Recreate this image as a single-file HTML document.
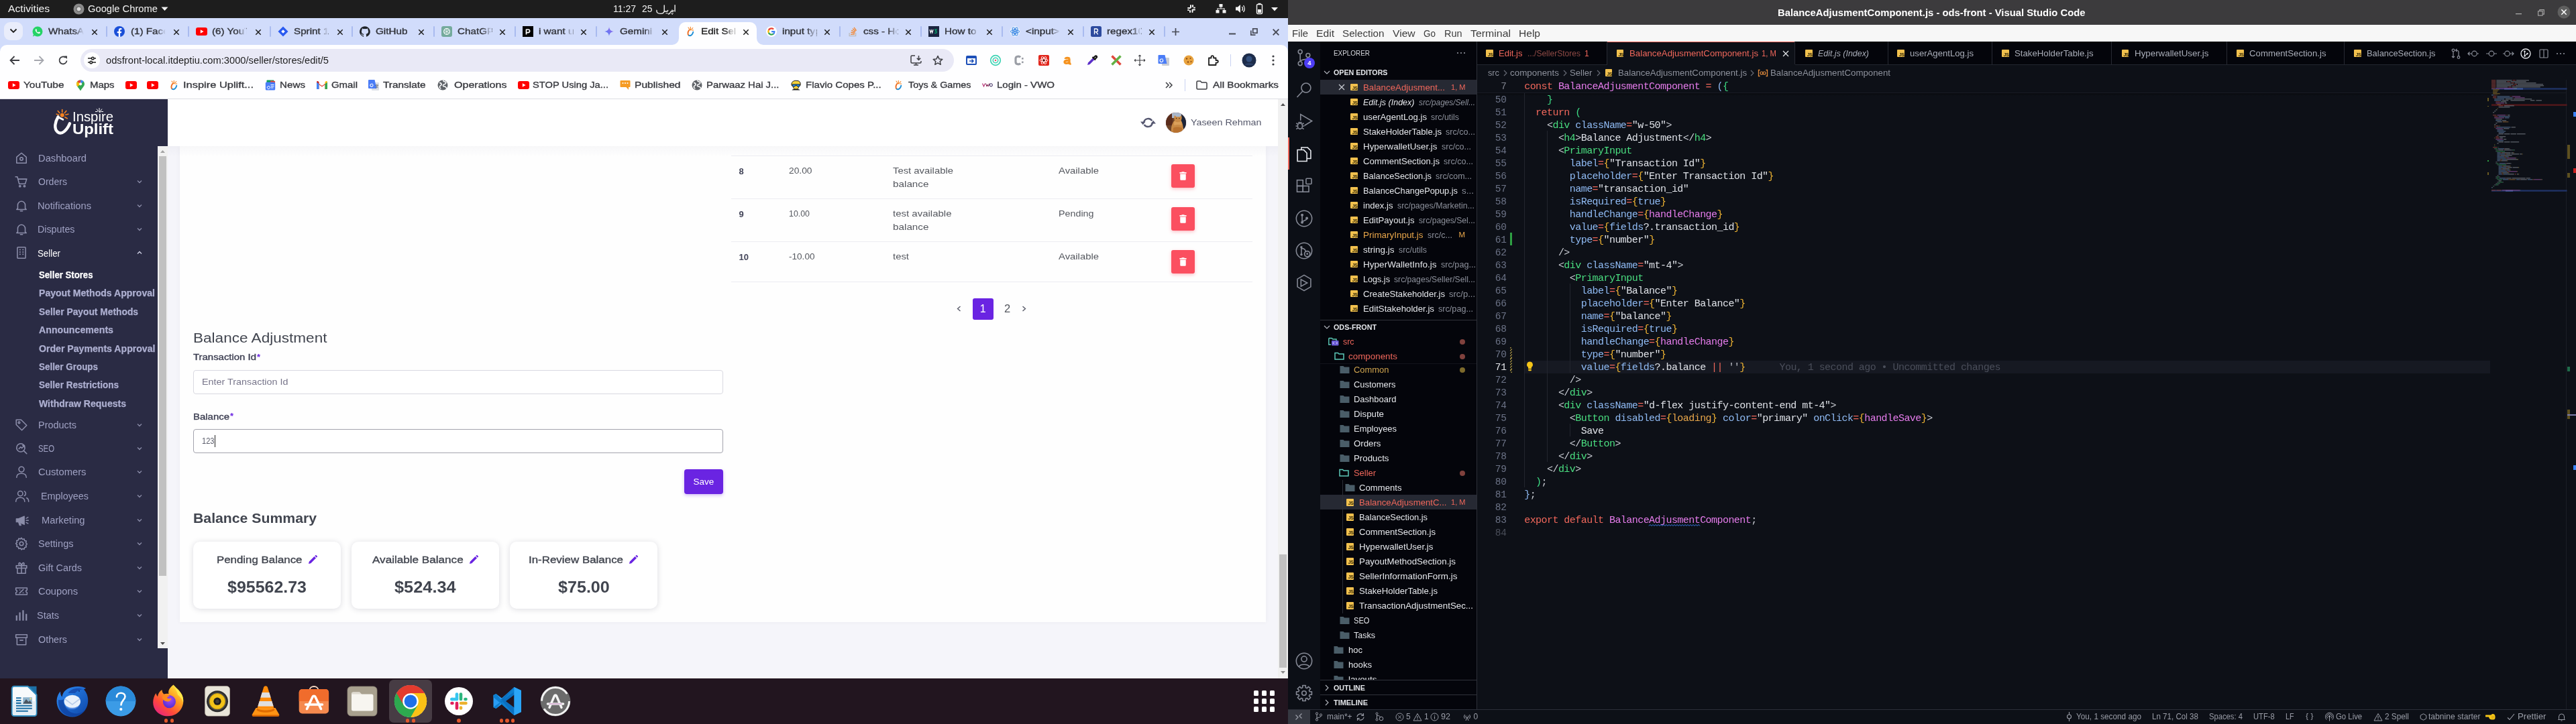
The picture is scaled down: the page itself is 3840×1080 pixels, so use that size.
<!DOCTYPE html>
<html lang="en"><head><meta charset="utf-8"><title>Desktop</title>
<style>
html,body{margin:0;padding:0;}
body{width:3840px;height:1080px;position:relative;overflow:hidden;background:#0d1017;font-family:"Liberation Sans",sans-serif;-webkit-font-smoothing:antialiased;}
svg{display:block;overflow:visible}
</style></head><body><div id="root" style="position:absolute;left:0;top:0;width:3840px;height:1080px;will-change:transform;">
<div style="position:absolute;left:0px;top:0px;width:1920px;height:27px;background:#1d1d1d;"></div>
<span style="position:absolute;left:12px;top:4.00px;font:400 14.5px/19px 'Liberation Sans',sans-serif;color:#f2f2f2;white-space:pre;transform:scaleX(1.0836);transform-origin:0 50%;">Activities</span>
<svg style="position:absolute;left:109px;top:5px;" width="17" height="17" viewBox="0 0 17 17"><circle cx="8.5" cy="8.5" r="8" fill="#8a8a8a"/><circle cx="8.5" cy="8.5" r="3.6" fill="#d8d8d8" stroke="#5a5a5a" stroke-width="1"/></svg>
<span style="position:absolute;left:131px;top:4.00px;font:400 14.5px/19px 'Liberation Sans',sans-serif;color:#f2f2f2;white-space:pre;transform:scaleX(1.0160);transform-origin:0 50%;">Google Chrome</span>
<svg style="position:absolute;left:240px;top:10px;" width="11" height="7" viewBox="0 0 11 7"><path d="M0.5 0.5 L10.5 0.5 L5.5 6 Z" fill="#f2f2f2"/></svg>
<span style="position:absolute;left:914px;top:4.00px;font:400 14.5px/19px 'Liberation Sans',sans-serif;color:#f2f2f2;white-space:pre;transform:scaleX(0.9654);transform-origin:0 50%;">11:27</span>
<span style="position:absolute;left:957px;top:4.00px;font:400 14.5px/19px 'Liberation Sans',sans-serif;color:#f2f2f2;white-space:pre;transform:scaleX(0.9603);transform-origin:0 50%;">25</span>
<svg style="position:absolute;left:977px;top:4.2px;" width="32" height="18" viewBox="0 0 32 18"><path d="M29.100 3.700V13M27.200 11.800Q27 13 25.500 13H23.500Q22.800 13 22.400 14.200 21.500 16.600 19.300 17M25 13V10.800M18.600 11.500Q18.600 13 17 13H13.200M13.200 3.900V12Q13.200 16.400 7.500 16.400 1.400 16.400 1.900 11.300" fill="none" stroke="#f2f2f2" stroke-width="1.350" stroke-linecap="round" stroke-linejoin="round"/><g fill="#f2f2f2"><circle cx="24.200" cy="15.800" r=".75"/><circle cx="26" cy="15.800" r=".75"/><circle cx="25.100" cy="17.300" r=".75"/><circle cx="16.200" cy="15.800" r=".75"/><circle cx="18" cy="15.800" r=".75"/></g></svg>
<svg style="position:absolute;left:1768px;top:5px;" width="16" height="16" viewBox="0 0 16 16"><g fill="#f2f2f2"><rect x="2" y="6" width="5" height="2" rx="1"/><rect x="9" y="8.5" width="5" height="2" rx="1"/><rect x="6" y="2" width="2" height="5" rx="1"/><rect x="8.5" y="9" width="2" height="5" rx="1"/><rect x="9" y="2" width="2" height="4" rx="1"/><rect x="5" y="10" width="2" height="4" rx="1"/><rect x="11" y="5.5" width="3" height="2" rx="1"/><rect x="2" y="9" width="3" height="2" rx="1"/></g></svg>
<svg style="position:absolute;left:1812px;top:5px;" width="16" height="16" viewBox="0 0 16 16"><g fill="#f2f2f2"><rect x="5.5" y="1" width="5" height="4.5"/><rect x="0.5" y="10" width="5" height="4.5"/><rect x="10.5" y="10" width="5" height="4.5"/><rect x="7.5" y="5" width="1" height="3"/><rect x="2.5" y="7.5" width="11" height="1"/><rect x="2.5" y="7.5" width="1" height="3"/><rect x="12.5" y="7.5" width="1" height="3"/></g></svg>
<svg style="position:absolute;left:1841px;top:5px;" width="17" height="16" viewBox="0 0 17 16"><path d="M1 5.5 H4 L8 2 V14 L4 10.5 H1 Z" fill="#f2f2f2"/><path d="M10.5 5 Q12.5 8 10.5 11 M12.5 3 Q16 8 12.5 13" fill="none" stroke="#f2f2f2" stroke-width="1.3"/></svg>
<svg style="position:absolute;left:1872px;top:4px;" width="11" height="18" viewBox="0 0 11 18"><rect x="1.5" y="2.5" width="8" height="14" rx="1.5" fill="none" stroke="#f2f2f2" stroke-width="1.4"/><rect x="3.5" y="0.8" width="4" height="2" fill="#f2f2f2"/><rect x="3" y="10" width="5" height="5" fill="#f2f2f2"/></svg>
<svg style="position:absolute;left:1895px;top:11px;" width="10" height="6" viewBox="0 0 10 6"><path d="M0 0 H10 L5 5.5 Z" fill="#f2f2f2"/></svg>
<div style="position:absolute;left:0px;top:27px;width:1920px;height:54px;background:#d1dcfb;"></div>
<div style="position:absolute;left:6px;top:33px;width:28px;height:27px;background:#e9edfb;border-radius:9px;"></div>
<svg style="position:absolute;left:14px;top:42px;" width="12" height="8" viewBox="0 0 12 8"><path d="M1.5 1.5 L6 6 L10.5 1.5" fill="none" stroke="#1f1f1f" stroke-width="1.8"/></svg>
<div style="position:absolute;left:0px;top:67px;width:1920px;height:44px;background:#fefeff;border-radius:10px 10px 0 0;"></div>
<div style="position:absolute;left:0px;top:110px;width:1920px;height:38px;background:#fefeff;"></div>
<div style="position:absolute;left:0px;top:147px;width:1920px;height:1px;background:#dcdde3;"></div>
<svg style="position:absolute;left:48px;top:39px;" width="16" height="16" viewBox="0 0 16 16"><circle cx="8" cy="8" r="7.5" fill="#25d366"/><path d="M5.2 4.6c.5-.6 1-.4 1.2.1l.5 1.1c.1.3 0 .6-.3.9-.3.3-.2.5 0 .8.5.8 1.100 1.400 1.900 1.800.3.200.5.200.7-.1l.5-.6c.2-.2.500-.3.800-.1l1.100.6c.4.2.4.6.1 1.100-.5.800-1.500 1.100-2.600.7C7 10.200 5.500 8.700 4.800 6.800 4.500 6 4.700 5.200 5.200 4.600z" fill="#fff"/><path d="M1 15.500 2.200 11.500 4.500 13.800z" fill="#25d366"/></svg>
<span style="position:absolute;left:72px;top:38.00px;font:400 13px/17px 'Liberation Sans',sans-serif;color:#33353c;white-space:pre;-webkit-text-stroke:.38px #33353c;width:45.3px;overflow:hidden;transform:scaleX(1.17);transform-origin:0 50%;">WhatsApp</span>
<div style="position:absolute;left:111px;top:37px;width:14px;height:20px;background:linear-gradient(90deg,rgba(209,220,251,0),#d1dcfb);"></div>
<svg style="position:absolute;left:134.5px;top:41.5px;" width="12" height="12" viewBox="0 0 12 12"><path d="M2.3 2.3 L9.7 9.7 M9.7 2.3 L2.3 9.7" stroke="#1f1f1f" stroke-width="1.5" fill="none"/></svg>
<div style="position:absolute;left:158px;top:39px;width:2px;height:16px;background:#a9bbef;border-radius:1px;"></div>
<svg style="position:absolute;left:170px;top:39px;" width="16" height="16" viewBox="0 0 16 16"><circle cx="8" cy="8" r="8" fill="#1a4fd8"/><path d="M10.900 10.300l.4-2.300H9.100V6.500c0-.7.300-1.200 1.300-1.200h1V3.200C11.200 3.100 10.500 3 9.800 3 8 3 6.800 4.100 6.800 6.100V8H4.700v2.300h2.100V16h2.300v-5.700z" fill="#fff"/></svg>
<span style="position:absolute;left:195px;top:38.00px;font:400 13px/17px 'Liberation Sans',sans-serif;color:#33353c;white-space:pre;-webkit-text-stroke:.38px #33353c;width:44.4px;overflow:hidden;transform:scaleX(1.17);transform-origin:0 50%;">(1) Facebook</span>
<div style="position:absolute;left:233px;top:37px;width:14px;height:20px;background:linear-gradient(90deg,rgba(209,220,251,0),#d1dcfb);"></div>
<svg style="position:absolute;left:256.5px;top:41.5px;" width="12" height="12" viewBox="0 0 12 12"><path d="M2.3 2.3 L9.7 9.7 M9.7 2.3 L2.3 9.7" stroke="#1f1f1f" stroke-width="1.5" fill="none"/></svg>
<div style="position:absolute;left:280px;top:39px;width:2px;height:16px;background:#a9bbef;border-radius:1px;"></div>
<svg style="position:absolute;left:292px;top:41px;" width="17" height="12" viewBox="0 0 17 12"><rect width="17" height="12" rx="3" fill="#f00"/><path d="M6.800 3.200v5.600L11.600 6z" fill="#fff"/></svg>
<span style="position:absolute;left:316px;top:38.00px;font:400 13px/17px 'Liberation Sans',sans-serif;color:#33353c;white-space:pre;-webkit-text-stroke:.38px #33353c;width:43.6px;overflow:hidden;transform:scaleX(1.17);transform-origin:0 50%;">(6) YouTube</span>
<div style="position:absolute;left:353px;top:37px;width:14px;height:20px;background:linear-gradient(90deg,rgba(209,220,251,0),#d1dcfb);"></div>
<svg style="position:absolute;left:378.5px;top:41.5px;" width="12" height="12" viewBox="0 0 12 12"><path d="M2.3 2.3 L9.7 9.7 M9.7 2.3 L2.3 9.7" stroke="#1f1f1f" stroke-width="1.5" fill="none"/></svg>
<div style="position:absolute;left:402px;top:39px;width:2px;height:16px;background:#a9bbef;border-radius:1px;"></div>
<svg style="position:absolute;left:414px;top:39px;" width="16" height="16" viewBox="0 0 16 16"><path d="M8 .5 15.500 8 8 15.500.5 8z" fill="#2a5af0"/><path d="M8 5.200 10.800 8 8 10.800 5.200 8z" fill="#fff"/></svg>
<span style="position:absolute;left:438px;top:38.00px;font:400 13px/17px 'Liberation Sans',sans-serif;color:#33353c;white-space:pre;-webkit-text-stroke:.38px #33353c;width:43.6px;overflow:hidden;transform:scaleX(1.17);transform-origin:0 50%;">Sprint 11 - Agile</span>
<div style="position:absolute;left:475px;top:37px;width:14px;height:20px;background:linear-gradient(90deg,rgba(209,220,251,0),#d1dcfb);"></div>
<svg style="position:absolute;left:500.5px;top:41.5px;" width="12" height="12" viewBox="0 0 12 12"><path d="M2.3 2.3 L9.7 9.7 M9.7 2.3 L2.3 9.7" stroke="#1f1f1f" stroke-width="1.5" fill="none"/></svg>
<div style="position:absolute;left:524px;top:39px;width:2px;height:16px;background:#a9bbef;border-radius:1px;"></div>
<svg style="position:absolute;left:536px;top:39px;" width="16" height="16" viewBox="0 0 16 16"><path d="M8 .2a8 8 0 0 0-2.500 15.600c.4.100.5-.2.500-.4v-1.400c-2.200.5-2.700-1-2.700-1-.4-.9-.9-1.200-.9-1.200-.7-.5.100-.5.100-.5.800.100 1.200.800 1.200.800.700 1.200 1.900.900 2.300.7.100-.5.300-.9.500-1.100-1.800-.2-3.600-.9-3.600-4 0-.9.300-1.600.8-2.100-.1-.2-.4-1 .1-2.100 0 0 .7-.2 2.200.8a7.500 7.500 0 0 1 4 0c1.500-1 2.200-.8 2.200-.8.400 1.100.200 1.900.100 2.100.5.600.8 1.300.8 2.100 0 3.100-1.900 3.700-3.700 3.900.3.300.6.800.6 1.500v2.200c0 .2.100.5.600.4A8 8 0 0 0 8 .2z" fill="#1f2328"/></svg>
<span style="position:absolute;left:560px;top:38.00px;font:400 13px/17px 'Liberation Sans',sans-serif;color:#33353c;white-space:pre;-webkit-text-stroke:.38px #33353c;width:53.0px;overflow:hidden;transform:scaleX(1.17);transform-origin:0 50%;">GitHub</span>
<svg style="position:absolute;left:622px;top:41.5px;" width="12" height="12" viewBox="0 0 12 12"><path d="M2.3 2.3 L9.7 9.7 M9.7 2.3 L2.3 9.7" stroke="#1f1f1f" stroke-width="1.5" fill="none"/></svg>
<div style="position:absolute;left:646px;top:39px;width:2px;height:16px;background:#a9bbef;border-radius:1px;"></div>
<svg style="position:absolute;left:658px;top:39px;" width="16" height="16" viewBox="0 0 16 16"><rect width="16" height="16" rx="3" fill="#74aa9c"/><circle cx="8" cy="8" r="4.300" fill="none" stroke="#fff" stroke-width="1.200"/><path d="M8 3.700v8.600M4.300 5.900l7.400 4.300M4.300 10.100l7.400-4.300" stroke="#fff" stroke-width=".7" fill="none"/></svg>
<span style="position:absolute;left:682px;top:38.00px;font:400 13px/17px 'Liberation Sans',sans-serif;color:#33353c;white-space:pre;-webkit-text-stroke:.38px #33353c;width:43.6px;overflow:hidden;transform:scaleX(1.17);transform-origin:0 50%;">ChatGPT</span>
<div style="position:absolute;left:719px;top:37px;width:14px;height:20px;background:linear-gradient(90deg,rgba(209,220,251,0),#d1dcfb);"></div>
<svg style="position:absolute;left:743px;top:41.5px;" width="12" height="12" viewBox="0 0 12 12"><path d="M2.3 2.3 L9.7 9.7 M9.7 2.3 L2.3 9.7" stroke="#1f1f1f" stroke-width="1.5" fill="none"/></svg>
<div style="position:absolute;left:767px;top:39px;width:2px;height:16px;background:#a9bbef;border-radius:1px;"></div>
<svg style="position:absolute;left:779px;top:39px;" width="16" height="16" viewBox="0 0 16 16"><rect width="16" height="16" fill="#000"/><path d="M5.500 12.500V4.500M5.500 5h2.800a2.300 2.300 0 0 1 0 4.600H5.500" fill="none" stroke="#fff" stroke-width="1.700"/></svg>
<span style="position:absolute;left:803px;top:38.00px;font:400 13px/17px 'Liberation Sans',sans-serif;color:#33353c;white-space:pre;-webkit-text-stroke:.38px #33353c;width:43.6px;overflow:hidden;transform:scaleX(1.17);transform-origin:0 50%;">i want users</span>
<div style="position:absolute;left:840px;top:37px;width:14px;height:20px;background:linear-gradient(90deg,rgba(209,220,251,0),#d1dcfb);"></div>
<svg style="position:absolute;left:864px;top:41.5px;" width="12" height="12" viewBox="0 0 12 12"><path d="M2.3 2.3 L9.7 9.7 M9.7 2.3 L2.3 9.7" stroke="#1f1f1f" stroke-width="1.5" fill="none"/></svg>
<div style="position:absolute;left:888px;top:39px;width:2px;height:16px;background:#a9bbef;border-radius:1px;"></div>
<svg style="position:absolute;left:900px;top:39px;" width="16" height="16" viewBox="0 0 16 16"><defs><linearGradient id="gg" x1="0" y1="1" x2="1" y2="0"><stop offset="0" stop-color="#4a7cf7"/><stop offset="1" stop-color="#a16be8"/></linearGradient></defs><path d="M8 1C8.300 5 11 7.700 15 8 11 8.300 8.300 11 8 15 7.700 11 5 8.300 1 8 5 7.700 7.700 5 8 1z" fill="url(#gg)"/></svg>
<span style="position:absolute;left:924px;top:38.00px;font:400 13px/17px 'Liberation Sans',sans-serif;color:#33353c;white-space:pre;-webkit-text-stroke:.38px #33353c;width:43.6px;overflow:hidden;transform:scaleX(1.17);transform-origin:0 50%;">Gemini</span>
<div style="position:absolute;left:961px;top:37px;width:14px;height:20px;background:linear-gradient(90deg,rgba(209,220,251,0),#d1dcfb);"></div>
<svg style="position:absolute;left:985px;top:41.5px;" width="12" height="12" viewBox="0 0 12 12"><path d="M2.3 2.3 L9.7 9.7 M9.7 2.3 L2.3 9.7" stroke="#1f1f1f" stroke-width="1.5" fill="none"/></svg>
<div style="position:absolute;left:1012px;top:33px;width:116px;height:34px;background:#fefeff;border-radius:10px 10px 0 0;"></div>
<svg style="position:absolute;left:1002px;top:57px;" width="10" height="10" viewBox="0 0 10 10"><path d="M10 0 V10 H0 A10 10 0 0 0 10 0Z" fill="#fefeff"/></svg>
<svg style="position:absolute;left:1128px;top:57px;" width="10" height="10" viewBox="0 0 10 10"><path d="M0 0 V10 H10 A10 10 0 0 1 0 0Z" fill="#fefeff"/></svg>
<svg style="position:absolute;left:1021px;top:39px;" width="16" height="16" viewBox="0 0 16 16"><path d="M6.300 5.800C4.300 8.500 3.600 12.200 5.800 13.800" fill="none" stroke="#ef6c1f" stroke-width="1.900" stroke-linecap="round"/><path d="M5.800 13.800C8.500 15.500 11.500 12.500 12.300 8.800" fill="none" stroke="#1f8fd6" stroke-width="1.900" stroke-linecap="round"/><path d="M8.300 4.300V1.200M6.400 4 5 2M10.200 4.300 11.800 2.500M10.500 6h2.200" stroke="#f58220" stroke-width="1.100" stroke-linecap="round"/><circle cx="8.300" cy="5.200" r="1.200" fill="#f58220"/></svg>
<span style="position:absolute;left:1045px;top:38.00px;font:400 13px/17px 'Liberation Sans',sans-serif;color:#1f1f1f;white-space:pre;-webkit-text-stroke:.38px #1f1f1f;width:42.7px;overflow:hidden;transform:scaleX(1.17);transform-origin:0 50%;">Edit Seller</span>
<div style="position:absolute;left:1081px;top:37px;width:14px;height:20px;background:linear-gradient(90deg,rgba(251,251,255,0),#fefeff);"></div>
<svg style="position:absolute;left:1105.7px;top:41.5px;" width="12" height="12" viewBox="0 0 12 12"><path d="M2.3 2.3 L9.7 9.7 M9.7 2.3 L2.3 9.7" stroke="#1f1f1f" stroke-width="1.5" fill="none"/></svg>
<svg style="position:absolute;left:1142px;top:39px;" width="16" height="16" viewBox="0 0 16 16"><circle cx="8" cy="8" r="8" fill="#fff"/><g transform="translate(2.2 2.2) scale(.725)"><path d="M15.500 8.200c0-.6 0-1-.1-1.500H8v2.900h4.300c-.1.800-.7 1.900-1.800 2.600l2.500 2c1.600-1.500 2.500-3.600 2.500-6z" fill="#4285f4"/><path d="M8 15.800c2.100 0 3.900-.7 5.200-1.900l-2.500-2c-.7.500-1.600.8-2.700.8-2.100 0-3.800-1.400-4.500-3.300l-2.700 2C2.100 14 4.800 15.800 8 15.800z" fill="#34a853"/><path d="M3.500 9.400a4.800 4.800 0 0 1 0-3L.9 4.300a7.800 7.800 0 0 0 0 7z" fill="#fbbc05"/><path d="M8 3.200c1.500 0 2.500.6 3.100 1.200l2.200-2.200C12 1 10.100.2 8 .2 4.800.2 2.100 2 .9 4.300l2.700 2.100C4.200 4.500 5.900 3.200 8 3.200z" fill="#ea4335"/></g></svg>
<span style="position:absolute;left:1166px;top:38.00px;font:400 13px/17px 'Liberation Sans',sans-serif;color:#33353c;white-space:pre;-webkit-text-stroke:.38px #33353c;width:43.6px;overflow:hidden;transform:scaleX(1.17);transform-origin:0 50%;">input type</span>
<div style="position:absolute;left:1203px;top:37px;width:14px;height:20px;background:linear-gradient(90deg,rgba(209,220,251,0),#d1dcfb);"></div>
<svg style="position:absolute;left:1227px;top:41.5px;" width="12" height="12" viewBox="0 0 12 12"><path d="M2.3 2.3 L9.7 9.7 M9.7 2.3 L2.3 9.7" stroke="#1f1f1f" stroke-width="1.5" fill="none"/></svg>
<div style="position:absolute;left:1251px;top:39px;width:2px;height:16px;background:#a9bbef;border-radius:1px;"></div>
<svg style="position:absolute;left:1263px;top:39px;" width="16" height="16" viewBox="0 0 16 16"><path d="M12 14V10h1.300v5.300H2.500V10h1.300v4z" fill="#bcbbbb"/><path d="M5 12.700h6v-1.300H5zM5.200 9.800l5.900 1.200.3-1.300-5.900-1.200zM6 6.900l5.400 2.500.6-1.200L6.500 5.700zM7.500 4.200l4.600 3.800.8-1-4.600-3.800zM10.500 1.400l-1 .8 3.600 4.800 1-.8z" fill="#f48024"/></svg>
<span style="position:absolute;left:1287px;top:38.00px;font:400 13px/17px 'Liberation Sans',sans-serif;color:#33353c;white-space:pre;-webkit-text-stroke:.38px #33353c;width:43.6px;overflow:hidden;transform:scaleX(1.17);transform-origin:0 50%;">css - How</span>
<div style="position:absolute;left:1324px;top:37px;width:14px;height:20px;background:linear-gradient(90deg,rgba(209,220,251,0),#d1dcfb);"></div>
<svg style="position:absolute;left:1348px;top:41.5px;" width="12" height="12" viewBox="0 0 12 12"><path d="M2.3 2.3 L9.7 9.7 M9.7 2.3 L2.3 9.7" stroke="#1f1f1f" stroke-width="1.5" fill="none"/></svg>
<div style="position:absolute;left:1372px;top:39px;width:2px;height:16px;background:#a9bbef;border-radius:1px;"></div>
<svg style="position:absolute;left:1384px;top:39px;" width="16" height="16" viewBox="0 0 16 16"><rect width="16" height="16" fill="#1b2540"/><path d="M2 5l1.200 5 1.300-4 1.300 4L7 5" fill="none" stroke="#fff" stroke-width="1.100"/><path d="M9 5.200h3l-1.500 2.300c1.500 0 2 1 1.700 2-.4 1-2 1.200-3.200.4" fill="none" stroke="#04aa6d" stroke-width="1.200"/></svg>
<span style="position:absolute;left:1408px;top:38.00px;font:400 13px/17px 'Liberation Sans',sans-serif;color:#33353c;white-space:pre;-webkit-text-stroke:.38px #33353c;width:43.6px;overflow:hidden;transform:scaleX(1.17);transform-origin:0 50%;">How to</span>
<div style="position:absolute;left:1445px;top:37px;width:14px;height:20px;background:linear-gradient(90deg,rgba(209,220,251,0),#d1dcfb);"></div>
<svg style="position:absolute;left:1469px;top:41.5px;" width="12" height="12" viewBox="0 0 12 12"><path d="M2.3 2.3 L9.7 9.7 M9.7 2.3 L2.3 9.7" stroke="#1f1f1f" stroke-width="1.5" fill="none"/></svg>
<div style="position:absolute;left:1493px;top:39px;width:2px;height:16px;background:#a9bbef;border-radius:1px;"></div>
<svg style="position:absolute;left:1505px;top:39px;" width="16" height="16" viewBox="0 0 16 16"><circle cx="8" cy="8" r="7.800" fill="#e3eefc"/><g fill="none" stroke="#2a7de1" stroke-width=".9"><ellipse cx="8" cy="8" rx="6.500" ry="2.500"/><ellipse cx="8" cy="8" rx="6.500" ry="2.500" transform="rotate(60 8 8)"/><ellipse cx="8" cy="8" rx="6.500" ry="2.500" transform="rotate(120 8 8)"/></g><circle cx="8" cy="8" r="1.300" fill="#2a7de1"/></svg>
<span style="position:absolute;left:1529px;top:38.00px;font:400 13px/17px 'Liberation Sans',sans-serif;color:#33353c;white-space:pre;-webkit-text-stroke:.38px #33353c;width:43.6px;overflow:hidden;transform:scaleX(1.17);transform-origin:0 50%;">&lt;input&gt;</span>
<div style="position:absolute;left:1566px;top:37px;width:14px;height:20px;background:linear-gradient(90deg,rgba(209,220,251,0),#d1dcfb);"></div>
<svg style="position:absolute;left:1590px;top:41.5px;" width="12" height="12" viewBox="0 0 12 12"><path d="M2.3 2.3 L9.7 9.7 M9.7 2.3 L2.3 9.7" stroke="#1f1f1f" stroke-width="1.5" fill="none"/></svg>
<div style="position:absolute;left:1614px;top:39px;width:2px;height:16px;background:#a9bbef;border-radius:1px;"></div>
<svg style="position:absolute;left:1626px;top:39px;" width="16" height="16" viewBox="0 0 16 16"><rect width="16" height="16" rx="2.500" fill="#2c4a9e"/><path d="M5.500 12.300V4h2.700a2.300 2.300 0 0 1 0 4.600H5.500M8 8.600l2.700 3.700" fill="none" stroke="#fff" stroke-width="1.300"/></svg>
<span style="position:absolute;left:1650px;top:38.00px;font:400 13px/17px 'Liberation Sans',sans-serif;color:#33353c;white-space:pre;-webkit-text-stroke:.38px #33353c;width:43.6px;overflow:hidden;transform:scaleX(1.17);transform-origin:0 50%;">regex101</span>
<div style="position:absolute;left:1687px;top:37px;width:14px;height:20px;background:linear-gradient(90deg,rgba(209,220,251,0),#d1dcfb);"></div>
<svg style="position:absolute;left:1711px;top:41.5px;" width="12" height="12" viewBox="0 0 12 12"><path d="M2.3 2.3 L9.7 9.7 M9.7 2.3 L2.3 9.7" stroke="#1f1f1f" stroke-width="1.5" fill="none"/></svg>
<div style="position:absolute;left:1735px;top:39px;width:2px;height:16px;background:#a9bbef;border-radius:1px;"></div>
<svg style="position:absolute;left:1746px;top:41px;" width="13" height="13" viewBox="0 0 13 13"><path d="M6.500 1V12M1 6.500H12" stroke="#474a55" stroke-width="1.700"/></svg>
<svg style="position:absolute;left:1832px;top:49px;" width="10" height="3" viewBox="0 0 10 3"><rect width="10" height="2" y=".5" fill="#474a55"/></svg>
<svg style="position:absolute;left:1864px;top:42px;" width="11" height="11" viewBox="0 0 11 11"><path d="M.8 3.500V10.200H7.500" fill="none" stroke="#474a55" stroke-width="1.700"/><rect x="3.700" y=".9" width="6.300" height="6.300" fill="none" stroke="#474a55" stroke-width="1.700"/></svg>
<svg style="position:absolute;left:1896px;top:41.5px;" width="12" height="12" viewBox="0 0 12 12"><path d="M1.7000000000000002 1.7000000000000002 L10.3 10.3 M10.3 1.7000000000000002 L1.7000000000000002 10.3" stroke="#474a55" stroke-width="1.9" fill="none"/></svg>
<svg style="position:absolute;left:14px;top:83px;" width="16" height="14" viewBox="0 0 16 14"><path d="M7.500 1 1.500 7l6 6M1.500 7H15" fill="none" stroke="#3c3d42" stroke-width="1.800"/></svg>
<svg style="position:absolute;left:50px;top:83px;" width="16" height="14" viewBox="0 0 16 14"><path d="M8.500 1l6 6-6 6M14.500 7H1" fill="none" stroke="#a5a7ae" stroke-width="1.800"/></svg>
<svg style="position:absolute;left:86px;top:82px;" width="16" height="16" viewBox="0 0 16 16"><path d="M13.500 8.500A5.500 5.500 0 1 1 11.800 4" fill="none" stroke="#3c3d42" stroke-width="1.800"/><path d="M9.500 1.500h4.500V6z" fill="#3c3d42"/></svg>
<div style="position:absolute;left:120px;top:73px;width:1302px;height:34px;background:#e9e9f6;border-radius:17px;"></div>
<div style="position:absolute;left:125px;top:78px;width:24px;height:24px;border-radius:12px;background:#fefeff"></div>
<svg style="position:absolute;left:130px;top:83px;" width="14" height="14" viewBox="0 0 14 14"><path d="M1 4h5M10.500 4H13M1 10h2.500M8 10h5" stroke="#1f1f1f" stroke-width="1.600"/><circle cx="8.300" cy="4" r="1.800" fill="none" stroke="#1f1f1f" stroke-width="1.500"/><circle cx="5.700" cy="10" r="1.800" fill="none" stroke="#1f1f1f" stroke-width="1.500"/></svg>
<span style="position:absolute;left:157.5px;top:81.00px;font:400 14px/18px 'Liberation Sans',sans-serif;color:#1f1f1f;white-space:pre;transform:scaleX(1.0508);transform-origin:0 50%;">odsfront-local.itdeptiu.com:3000/seller/stores/edit/5</span>
<svg style="position:absolute;left:1357px;top:82px;" width="17" height="16" viewBox="0 0 17 16"><path d="M7 1H2.500A1.500 1.500 0 0 0 1 2.500v8A1.500 1.500 0 0 0 2.500 12H14.500A1.500 1.500 0 0 0 16 10.500V9M5 15h7M8.500 12v3" fill="none" stroke="#3c3d42" stroke-width="1.500"/><path d="M12.500 1v6M9.800 4.700l2.700 2.700 2.700-2.700" fill="none" stroke="#3c3d42" stroke-width="1.500"/></svg>
<svg style="position:absolute;left:1390px;top:82px;" width="16" height="16" viewBox="0 0 16 16"><path d="M8 1.500l2 4.400 4.800.5-3.600 3.200 1 4.700L8 11.900l-4.200 2.400 1-4.700L1.200 6.400 6 5.900z" fill="none" stroke="#3c3d42" stroke-width="1.500" stroke-linejoin="round"/></svg>
<svg style="position:absolute;left:1438.5px;top:81px;" width="18" height="18" viewBox="0 0 18 18"><rect x="1" y="2" width="16" height="14" rx="2" fill="#1c4fb8"/><rect x="3" y="6" width="12" height="8" fill="#fff"/><path d="M6 10h6M9.500 7.500 12 10 9.500 12.500" stroke="#1c4fb8" stroke-width="1.500" fill="none"/></svg>
<svg style="position:absolute;left:1474.7px;top:81px;" width="18" height="18" viewBox="0 0 18 18"><circle cx="9" cy="9" r="7.300" fill="none" stroke="#3fd3b4" stroke-width="1.700"/><circle cx="9" cy="9" r="3.800" fill="none" stroke="#3fd3b4" stroke-width="1.500"/><circle cx="9" cy="9" r="1.300" fill="#e8536b"/></svg>
<svg style="position:absolute;left:1510px;top:81px;" width="18" height="18" viewBox="0 0 18 18"><path d="M11 4.500C9.500 2.500 4 2.500 4 6.500v5c0 4 5.500 4 7 2" fill="none" stroke="#9b9ea6" stroke-width="3.200"/><rect x="13" y="5" width="2.600" height="2.600" fill="#9b9ea6"/><rect x="13" y="10.500" width="2.600" height="2.600" fill="#9b9ea6"/></svg>
<svg style="position:absolute;left:1546.6px;top:81px;" width="18" height="18" viewBox="0 0 18 18"><rect x="1" y="1" width="16" height="16" rx="2" fill="#e1261c"/><g fill="none" stroke="#fff" stroke-width=".9"><ellipse cx="9" cy="9" rx="6" ry="2.300"/><ellipse cx="9" cy="9" rx="6" ry="2.300" transform="rotate(60 9 9)"/><ellipse cx="9" cy="9" rx="6" ry="2.300" transform="rotate(120 9 9)"/></g><circle cx="9" cy="9" r="1.300" fill="#222"/></svg>
<svg style="position:absolute;left:1582px;top:81px;" width="18" height="18" viewBox="0 0 18 18"><path d="M12 6.500c-.5-1.500-5.500-2-6 .5M12 6.500V13M12 9.500c-2-.5-7-.5-7 2s5 2.500 7 0M12 13c0 1.200 1.500 1.200 2.500.8" fill="none" stroke="#f5921e" stroke-width="3.200"/></svg>
<svg style="position:absolute;left:1619px;top:81px;" width="18" height="18" viewBox="0 0 18 18"><path d="M2 16 3 12.500 10 5.500 12.500 8 5.500 15z" fill="#5b2fc9"/><path d="M9.500 4 14 8.500M11 5.500 14 2.500a1.600 1.600 0 0 1 2 2L13 7.500" stroke="#111" stroke-width="2.200" fill="none"/></svg>
<svg style="position:absolute;left:1655px;top:81px;" width="18" height="18" viewBox="0 0 18 18"><path d="M2.500 2.500 15.500 15.500" stroke="#e0483c" stroke-width="3.600"/><path d="M15.500 2.500 2.500 15.500" stroke="#62b246" stroke-width="3.600"/></svg>
<svg style="position:absolute;left:1690px;top:81px;" width="18" height="18" viewBox="0 0 18 18"><path d="M9 1v16M1 9h16M9 1 7.300 3M9 1l1.700 2M9 17l-1.700-2M9 17l1.700-2M1 9l2-1.700M1 9l2 1.700M17 9l-2-1.700M17 9l-2 1.700" stroke="#3c3d42" stroke-width="1.100" fill="none"/></svg>
<svg style="position:absolute;left:1726px;top:81px;" width="18" height="18" viewBox="0 0 18 18"><rect x="6" y="5" width="11" height="12" rx="1" fill="#c9ccd4"/><path d="M1.500 1h9l3 13H1.500a1 1 0 0 1-1-1V2a1 1 0 0 1 1-1z" fill="#4a7cf7"/><path d="M7.500 7H5a2.300 2.300 0 1 0 2.200.9" fill="none" stroke="#fff" stroke-width="1.200"/></svg>
<svg style="position:absolute;left:1762.8px;top:81px;" width="18" height="18" viewBox="0 0 18 18"><circle cx="9" cy="9" r="7.500" fill="#e8a23e"/><circle cx="6" cy="6.500" r="1.200" fill="#8a4b14"/><circle cx="11.500" cy="6" r="1" fill="#8a4b14"/><circle cx="8" cy="11.500" r="1.200" fill="#8a4b14"/><circle cx="12.500" cy="11" r="1" fill="#8a4b14"/></svg>
<svg style="position:absolute;left:1799px;top:81px;" width="18" height="18" viewBox="0 0 18 18"><path d="M3 5.500h3.500V4a1.800 1.800 0 0 1 3.600 0v1.500H13.500V9H15a1.800 1.800 0 0 1 0 3.600h-1.500V16H3z" fill="none" stroke="#1f1f1f" stroke-width="1.800" stroke-linejoin="round"/></svg>
<div style="position:absolute;left:1834px;top:81px;width:1px;height:18px;background:#c9d2f2;"></div>
<svg style="position:absolute;left:1851px;top:79px;" width="22" height="22" viewBox="0 0 22 22"><circle cx="11" cy="11" r="10.500" fill="#1d2c4a"/><circle cx="11" cy="9" r="4.500" fill="#33507e"/><path d="M4 18c2-4 12-4 14 0" fill="#2a3f66"/></svg>
<svg style="position:absolute;left:1896px;top:82px;" width="4" height="16" viewBox="0 0 4 16"><circle cx="2" cy="2" r="1.600" fill="#3c3d42"/><circle cx="2" cy="8" r="1.600" fill="#3c3d42"/><circle cx="2" cy="14" r="1.600" fill="#3c3d42"/></svg>
<svg style="position:absolute;left:12px;top:121px;" width="17" height="12" viewBox="0 0 17 12"><rect width="17" height="12" rx="3" fill="#f00"/><path d="M6.800 3.200v5.600L11.600 6z" fill="#fff"/></svg>
<span style="position:absolute;left:34.5px;top:118.00px;font:400 13.5px/18px 'Liberation Sans',sans-serif;color:#3a3b40;white-space:pre;transform:scaleX(1.1402);transform-origin:0 50%;-webkit-text-stroke:.38px #3a3b40;">YouTube</span>
<svg style="position:absolute;left:113px;top:119px;" width="14" height="17" viewBox="0 0 14 17"><path d="M7 .5C3.500.5 1 3.200 1 6.300c0 3.500 3.500 5.800 6 10.200 2.500-4.400 6-6.700 6-10.200C13 3.200 10.500.5 7 .5z" fill="#34a853"/><path d="M7 .5C5 .5 3.300 1.400 2.200 2.800L7 6.500z" fill="#ea4335"/><path d="M7 .5v6l4.600-3.900C10.500 1.300 8.900.5 7 .5z" fill="#4285f4"/><path d="M2.200 2.800C1.400 3.800 1 5 1 6.300c0 1.500.6 2.800 1.500 4L7 6.500z" fill="#fbbc04"/><circle cx="7" cy="6.300" r="2.100" fill="#fff"/></svg>
<span style="position:absolute;left:134px;top:118.00px;font:400 13.5px/18px 'Liberation Sans',sans-serif;color:#3a3b40;white-space:pre;transform:scaleX(1.1055);transform-origin:0 50%;-webkit-text-stroke:.38px #3a3b40;">Maps</span>
<svg style="position:absolute;left:187px;top:121px;" width="17" height="12" viewBox="0 0 17 12"><rect width="17" height="12" rx="3" fill="#f00"/><path d="M6.800 3.200v5.600L11.600 6z" fill="#fff"/></svg>
<svg style="position:absolute;left:219px;top:121px;" width="17" height="12" viewBox="0 0 17 12"><rect width="17" height="12" rx="3" fill="#f00"/><path d="M6.800 3.200v5.600L11.600 6z" fill="#fff"/></svg>
<svg style="position:absolute;left:251px;top:119px;" width="16" height="16" viewBox="0 0 16 16"><path d="M6.300 5.800C4.300 8.500 3.600 12.200 5.800 13.800" fill="none" stroke="#ef6c1f" stroke-width="1.900" stroke-linecap="round"/><path d="M5.800 13.800C8.500 15.500 11.500 12.500 12.300 8.800" fill="none" stroke="#1f8fd6" stroke-width="1.900" stroke-linecap="round"/><path d="M8.300 4.300V1.200M6.400 4 5 2M10.200 4.300 11.800 2.500M10.500 6h2.200" stroke="#f58220" stroke-width="1.100" stroke-linecap="round"/><circle cx="8.300" cy="5.200" r="1.200" fill="#f58220"/></svg>
<span style="position:absolute;left:273px;top:118.00px;font:400 13.5px/18px 'Liberation Sans',sans-serif;color:#3a3b40;white-space:pre;transform:scaleX(1.2170);transform-origin:0 50%;-webkit-text-stroke:.38px #3a3b40;">Inspire Uplift...</span>
<svg style="position:absolute;left:395px;top:119px;" width="16" height="16" viewBox="0 0 16 16"><rect x="2.500" y=".5" width="11" height="6" rx="1" fill="#0c9d58"/><rect x="8" y="1.500" width="7" height="6" rx="1" fill="#ea4335" transform="rotate(8 11 4)"/><rect x=".8" y="3.500" width="14.400" height="12" rx="1.500" fill="#4a7cf7"/><path d="M8.500 7.500h5M8.500 9.800h5M8.500 12h4" stroke="#fff" stroke-width="1.100"/><path d="M6.800 9.700H4.700a2 2 0 1 0 1.900.5" fill="none" stroke="#fff" stroke-width="1"/></svg>
<span style="position:absolute;left:417.4px;top:118.00px;font:400 13.5px/18px 'Liberation Sans',sans-serif;color:#3a3b40;white-space:pre;transform:scaleX(1.1254);transform-origin:0 50%;-webkit-text-stroke:.38px #3a3b40;">News</span>
<svg style="position:absolute;left:472px;top:121px;" width="16" height="12" viewBox="0 0 16 12"><path d="M0 1.500V11c0 .6.400 1 1 1h2.500V5.200L8 8.500l4.500-3.300V12H15c.6 0 1-.4 1-1V1.500L8 7z" fill="#ea4335"/><path d="M0 1.500V11c0 .6.400 1 1 1h2.500V4z" fill="#4285f4"/><path d="M16 1.500V11c0 .6-.4 1-1 1h-2.500V4z" fill="#34a853"/><path d="M0 1.500 3.500 4.200V1.200L2.200.3C1.300-.4 0 .2 0 1.500z" fill="#c5221f"/><path d="M16 1.500 12.500 4.200V1.200L13.800.3C14.700-.4 16 .2 16 1.500z" fill="#fbbc04"/></svg>
<span style="position:absolute;left:494px;top:118.00px;font:400 13.5px/18px 'Liberation Sans',sans-serif;color:#3a3b40;white-space:pre;transform:scaleX(1.1059);transform-origin:0 50%;-webkit-text-stroke:.38px #3a3b40;">Gmail</span>
<svg style="position:absolute;left:549px;top:119px;" width="16" height="16" viewBox="0 0 16 16"><rect x="5" y="4" width="11" height="12" rx="1" fill="#dcdfe6"/><path d="M1 0h8.500l3 13H1a1 1 0 0 1-1-1V1a1 1 0 0 1 1-1z" fill="#4a7cf7"/><path d="M6.800 6.200H4.600a2.100 2.100 0 1 0 2 .8" fill="none" stroke="#fff" stroke-width="1.100"/><path d="M10.500 8h4.500M12.700 7v1M11.200 8c.5 2 2 3.400 3.500 4M14.300 8c-.5 2-1.800 3.500-3.600 4.500" stroke="#5f6368" stroke-width=".8" fill="none"/></svg>
<span style="position:absolute;left:571.4px;top:118.00px;font:400 13.5px/18px 'Liberation Sans',sans-serif;color:#3a3b40;white-space:pre;transform:scaleX(1.1384);transform-origin:0 50%;-webkit-text-stroke:.38px #3a3b40;">Translate</span>
<svg style="position:absolute;left:652px;top:119px;" width="16" height="16" viewBox="0 0 16 16"><circle cx="8" cy="8" r="7.500" fill="#5f6368"/><path d="M3 4.500c2 0 3 1 3 2.500S4.500 8.500 3.500 10 5 13 5 13.500M9 .8c-.5 1.500 1 2.200 2.500 2.200S13 5 12 6s-3 .5-3.500 2 1 2 2.500 2 2 1.500 2.500 3" fill="none" stroke="#fefeff" stroke-width="1.600"/></svg>
<span style="position:absolute;left:677px;top:118.00px;font:400 13.5px/18px 'Liberation Sans',sans-serif;color:#3a3b40;white-space:pre;transform:scaleX(1.1885);transform-origin:0 50%;-webkit-text-stroke:.38px #3a3b40;">Operations</span>
<svg style="position:absolute;left:772px;top:121px;" width="17" height="12" viewBox="0 0 17 12"><rect width="17" height="12" rx="3" fill="#f00"/><path d="M6.800 3.200v5.600L11.600 6z" fill="#fff"/></svg>
<span style="position:absolute;left:794px;top:118.00px;font:400 13.5px/18px 'Liberation Sans',sans-serif;color:#3a3b40;white-space:pre;transform:scaleX(1.0887);transform-origin:0 50%;-webkit-text-stroke:.38px #3a3b40;">STOP Using Ja...</span>
<svg style="position:absolute;left:924px;top:119px;" width="16" height="16" viewBox="0 0 16 16"><path d="M1.500 1h13a1 1 0 0 1 1 1v8a1 1 0 0 1-1 1H13v4l-3.500-4h-8a1 1 0 0 1-1-1V2a1 1 0 0 1 1-1z" fill="#f59b23"/><circle cx="4.500" cy="5" r="1" fill="#fff"/><circle cx="8" cy="5" r="1" fill="#fff"/><circle cx="11.500" cy="5" r="1" fill="#fff"/></svg>
<span style="position:absolute;left:946px;top:118.00px;font:400 13.5px/18px 'Liberation Sans',sans-serif;color:#3a3b40;white-space:pre;transform:scaleX(1.1552);transform-origin:0 50%;-webkit-text-stroke:.38px #3a3b40;">Published</span>
<svg style="position:absolute;left:1031px;top:119px;" width="16" height="16" viewBox="0 0 16 16"><circle cx="8" cy="8" r="7.500" fill="#5f6368"/><path d="M3 4.500c2 0 3 1 3 2.500S4.500 8.500 3.500 10 5 13 5 13.500M9 .8c-.5 1.500 1 2.200 2.500 2.200S13 5 12 6s-3 .5-3.500 2 1 2 2.500 2 2 1.500 2.500 3" fill="none" stroke="#fefeff" stroke-width="1.600"/></svg>
<span style="position:absolute;left:1053px;top:118.00px;font:400 13.5px/18px 'Liberation Sans',sans-serif;color:#3a3b40;white-space:pre;transform:scaleX(1.1038);transform-origin:0 50%;-webkit-text-stroke:.38px #3a3b40;">Parwaaz Hai J...</span>
<svg style="position:absolute;left:1178px;top:119px;" width="17" height="16" viewBox="0 0 17 16"><path d="M2 8C1 3 6 .5 10 1.500c3-.5 6 2 5 6.500l-1 1.500H3z" fill="#f4d23c" stroke="#1a1a1a" stroke-width="1"/><path d="M4 8.500c0 4 2 6 4.500 6s4.500-2 4.500-6z" fill="#f4d23c" stroke="#1a1a1a" stroke-width=".9"/><path d="M3 6.800h11.500v1.500c0 1.500-1.500 2-2.800 2s-2-.8-2.500-2h-1c-.5 1.200-1.200 2-2.500 2S3 9.800 3 8.300z" fill="#1f7fd6" stroke="#1a1a1a" stroke-width=".8"/><path d="M2.500 15.500c1-1.500 3-2 6-2s5 .5 6 2z" fill="#1a1a1a"/></svg>
<span style="position:absolute;left:1201px;top:118.00px;font:400 13.5px/18px 'Liberation Sans',sans-serif;color:#3a3b40;white-space:pre;transform:scaleX(1.1152);transform-origin:0 50%;-webkit-text-stroke:.38px #3a3b40;">Flavio Copes P...</span>
<svg style="position:absolute;left:1331px;top:119px;" width="16" height="16" viewBox="0 0 16 16"><path d="M6.300 5.800C4.300 8.500 3.600 12.200 5.800 13.800" fill="none" stroke="#ef6c1f" stroke-width="1.900" stroke-linecap="round"/><path d="M5.800 13.800C8.500 15.500 11.500 12.500 12.300 8.800" fill="none" stroke="#1f8fd6" stroke-width="1.900" stroke-linecap="round"/><path d="M8.300 4.300V1.200M6.400 4 5 2M10.200 4.300 11.800 2.500M10.500 6h2.200" stroke="#f58220" stroke-width="1.100" stroke-linecap="round"/><circle cx="8.300" cy="5.200" r="1.200" fill="#f58220"/></svg>
<span style="position:absolute;left:1353.6px;top:118.00px;font:400 13.5px/18px 'Liberation Sans',sans-serif;color:#3a3b40;white-space:pre;transform:scaleX(1.0651);transform-origin:0 50%;-webkit-text-stroke:.38px #3a3b40;">Toys &amp; Games</span>
<svg style="position:absolute;left:1464px;top:123px;" width="16" height="8" viewBox="0 0 16 8"><path d="M.5 1.500 2.500 6 4.500 1.500" fill="none" stroke="#b3286e" stroke-width="1.100"/><path d="M5.500 1.500 7 6l1.200-3 1.200 3 1.300-4.500" fill="none" stroke="#802050" stroke-width="1"/><circle cx="13.300" cy="3.800" r="2.100" fill="none" stroke="#26134d" stroke-width="1"/></svg>
<span style="position:absolute;left:1486px;top:118.00px;font:400 13.5px/18px 'Liberation Sans',sans-serif;color:#3a3b40;white-space:pre;transform:scaleX(1.1128);transform-origin:0 50%;-webkit-text-stroke:.38px #3a3b40;">Login - VWO</span>
<svg style="position:absolute;left:1737px;top:122px;" width="11" height="10" viewBox="0 0 11 10"><path d="M1 1l4 4-4 4M6 1l4 4-4 4" fill="none" stroke="#3c3d42" stroke-width="1.500"/></svg>
<div style="position:absolute;left:1766px;top:118px;width:1px;height:18px;background:#c9d2f2;"></div>
<svg style="position:absolute;left:1783px;top:120px;" width="17" height="14" viewBox="0 0 17 14"><path d="M1 2.500A1.500 1.500 0 0 1 2.500 1H6.500L8.300 3H14.500A1.500 1.500 0 0 1 16 4.500V11.500A1.500 1.500 0 0 1 14.500 13H2.500A1.500 1.500 0 0 1 1 11.500z" fill="none" stroke="#3c3d42" stroke-width="1.500"/></svg>
<span style="position:absolute;left:1807.5px;top:118.00px;font:400 13.5px/18px 'Liberation Sans',sans-serif;color:#3a3b40;white-space:pre;transform:scaleX(1.1358);transform-origin:0 50%;-webkit-text-stroke:.38px #3a3b40;">All Bookmarks</span>
<div style="position:absolute;left:250px;top:148px;width:1655px;height:864px;background:#f5f5fa;"></div>
<div style="position:absolute;left:268px;top:218px;width:1618.5px;height:710px;background:#fefefe;box-shadow:0 0 6px rgba(60,60,90,.06);"></div>
<div style="position:absolute;left:250px;top:148px;width:1655px;height:70px;background:#ffffff;"></div>
<div style="position:absolute;left:250px;top:218px;width:1655px;height:16px;background:linear-gradient(180deg,rgba(120,120,150,.05),rgba(120,120,150,0));"></div>
<div style="position:absolute;left:1905px;top:148px;width:15px;height:864px;background:#f1f1f1;"></div>
<svg style="position:absolute;left:1909px;top:154px;" width="7" height="4" viewBox="0 0 7 4"><path d="M3.500 0 7 4H0z" fill="#505050"/></svg>
<svg style="position:absolute;left:1909px;top:1001px;" width="7" height="4" viewBox="0 0 7 4"><path d="M0 0H7L3.500 4z" fill="#8a8a8a"/></svg>
<div style="position:absolute;left:1907px;top:827px;width:11px;height:169px;background:#c1c1c1;"></div>
<svg style="position:absolute;left:1699.5px;top:174px;" width="23" height="18" viewBox="0 0 23 18"><path d="M5.200 8.300A6.600 6.600 0 0 1 17.300 6.200M17.800 9.700A6.600 6.600 0 0 1 5.700 11.800" fill="none" stroke="#555770" stroke-width="2.500"/><path d="M0 7.500h7.600L3.800 12.300zM23 10.500h-7.600l3.800-4.800z" fill="#555770"/></svg>
<svg style="position:absolute;left:1737px;top:167px;" width="32" height="32" viewBox="0 0 32 32"><defs><clipPath id="av"><circle cx="16" cy="16" r="15"/></clipPath></defs><circle cx="16" cy="16" r="16" fill="#f0eef2"/><g clip-path="url(#av)"><rect width="32" height="32" fill="#6e4428"/><rect x="0" y="0" width="11" height="20" fill="#5a2c1c"/><rect x="10" y="0" width="14" height="9" fill="#a9b7cb"/><rect x="24" y="3" width="8" height="22" fill="#1c2438"/><path d="M9 32C8 22 11 15 14 13c-1-3-1-6 0-8l3 2.500c1.500-.5 3-.5 4.500 0L24 5c1 2.500 1 5.500-.5 8 2.500 3 4 10 3.500 19z" fill="#c98a45"/><path d="M14 13c1 3 8.500 3 9.500 0 1 2 1.500 5 .5 7-2-1.500-8-1.500-10.500 0-.8-2-.5-5 .5-7z" fill="#dba05a"/><path d="M12 24c2-2 10-2 13 0v8H11z" fill="#b8722f"/><circle cx="16.600" cy="9.500" r=".7" fill="#3a2410"/><circle cx="21" cy="9.500" r=".7" fill="#3a2410"/></g></svg>
<span style="position:absolute;left:1775px;top:174.00px;font:400 13.5px/18px 'Liberation Sans',sans-serif;color:#55586b;white-space:pre;transform:scaleX(1.0596);transform-origin:0 50%;">Yaseen Rehman</span>
<div style="position:absolute;left:0px;top:148px;width:250px;height:864px;background:#2a2b44;"></div>
<div style="position:absolute;left:235px;top:218px;width:15px;height:749px;background:#f1f1f1;"></div>
<svg style="position:absolute;left:239px;top:224px;" width="7" height="4" viewBox="0 0 7 4"><path d="M3.500 0 7 4H0z" fill="#a3a3a3"/></svg>
<svg style="position:absolute;left:239px;top:958px;" width="7" height="4" viewBox="0 0 7 4"><path d="M0 0H7L3.500 4z" fill="#505050"/></svg>
<div style="position:absolute;left:237px;top:233px;width:11px;height:626px;background:#c1c1c1;"></div>
<svg style="position:absolute;left:80px;top:160px;" width="27" height="42" viewBox="0 0 27 42"><path d="M6.600 14.300C2 22 0 32 6 37S20 34 24 24.200" fill="none" stroke="#fff" stroke-width="4.400" stroke-linecap="round"/><path d="M6.600 14.800 13.800 18.300" stroke="#fff" stroke-width="2.800" stroke-linecap="round"/><circle cx="12.700" cy="11.700" r="3" fill="#f58220"/><path d="M12.700 7.200V3.500M8.800 8.500 6.300 5.500M16.300 8.500 18.800 5.500M17.800 11.200 21.800 10.200M16.800 14.700 20.300 16.700M7.800 11.200 4.300 10.200" stroke="#f58220" stroke-width="1.700" stroke-linecap="round"/></svg>
<span style="position:absolute;left:107.5px;top:160.30px;font:400 21px/27px 'Liberation Sans',sans-serif;color:#ffffff;white-space:pre;transform:scaleX(0.9678);transform-origin:0 50%;">Inspire</span>
<span style="position:absolute;left:107.5px;top:177.80px;font:700 22px/29px 'Liberation Sans',sans-serif;color:#ffffff;white-space:pre;transform:scaleX(1.0853);transform-origin:0 50%;">Uplift</span>
<svg style="position:absolute;left:142px;top:161px;" width="12" height="8" viewBox="0 0 12 8"><path d="M6 0v6M2 1.500 4.500 5M10 1.500 7.500 5M0 5.500h3.500M8.500 5.500H12" stroke="#fff" stroke-width="1"/></svg>
<svg style="position:absolute;left:22px;top:226px;" width="20" height="20" viewBox="0 0 18 18"><path d="M2.500 7.500 9 2l6.500 5.500V15.500H2.500z" fill="none" stroke="#8b8da9" stroke-width="1.400" stroke-linejoin="round" stroke-linecap="round"/><circle cx="9" cy="10" r="2" fill="none" stroke="#8b8da9" stroke-width="1.400" stroke-linejoin="round" stroke-linecap="round"/></svg>
<span style="position:absolute;left:57px;top:227.00px;font:400 14px/18px 'Liberation Sans',sans-serif;color:#9fa1c2;white-space:pre;transform:scaleX(1.0511);transform-origin:0 50%;">Dashboard</span>
<svg style="position:absolute;left:22px;top:261px;" width="20" height="20" viewBox="0 0 18 18"><path d="M1 2.500h2.500L6 12h8l2-6.500H4.500" fill="none" stroke="#8b8da9" stroke-width="1.400" stroke-linejoin="round" stroke-linecap="round"/><circle cx="7" cy="15" r="1" fill="none" stroke="#8b8da9" stroke-width="1.400" stroke-linejoin="round" stroke-linecap="round"/><circle cx="13" cy="15" r="1" fill="none" stroke="#8b8da9" stroke-width="1.400" stroke-linejoin="round" stroke-linecap="round"/></svg>
<span style="position:absolute;left:57px;top:262.00px;font:400 14px/18px 'Liberation Sans',sans-serif;color:#9fa1c2;white-space:pre;transform:scaleX(1.0047);transform-origin:0 50%;">Orders</span>
<svg style="position:absolute;left:204px;top:268px;" width="8" height="6" viewBox="0 0 8 6"><path d="M1 1.500 4 4.500 7 1.500" fill="none" stroke="#8b8da9" stroke-width="1.300"/></svg>
<svg style="position:absolute;left:22px;top:296.5px;" width="20" height="20" viewBox="0 0 18 18"><path d="M4 12.500V8a5 5 0 0 1 10 0v4.500l1.500 1.500h-13zM7.500 16h3" fill="none" stroke="#8b8da9" stroke-width="1.400" stroke-linejoin="round" stroke-linecap="round"/></svg>
<span style="position:absolute;left:56px;top:297.50px;font:400 14px/18px 'Liberation Sans',sans-serif;color:#9fa1c2;white-space:pre;transform:scaleX(1.0490);transform-origin:0 50%;">Notifications</span>
<svg style="position:absolute;left:204px;top:303.5px;" width="8" height="6" viewBox="0 0 8 6"><path d="M1 1.500 4 4.500 7 1.500" fill="none" stroke="#8b8da9" stroke-width="1.300"/></svg>
<svg style="position:absolute;left:22px;top:332px;" width="20" height="20" viewBox="0 0 18 18"><path d="M4 12.500V8a5 5 0 0 1 10 0v4.500l1.500 1.500h-13zM7.500 16h3" fill="none" stroke="#8b8da9" stroke-width="1.400" stroke-linejoin="round" stroke-linecap="round"/></svg>
<span style="position:absolute;left:56px;top:333.00px;font:400 14px/18px 'Liberation Sans',sans-serif;color:#9fa1c2;white-space:pre;transform:scaleX(1.0189);transform-origin:0 50%;">Disputes</span>
<svg style="position:absolute;left:204px;top:339px;" width="8" height="6" viewBox="0 0 8 6"><path d="M1 1.500 4 4.500 7 1.500" fill="none" stroke="#8b8da9" stroke-width="1.300"/></svg>
<svg style="position:absolute;left:22px;top:367px;" width="20" height="20" viewBox="0 0 18 18"><rect x="3.500" y="1.500" width="11" height="15" rx="1" fill="none" stroke="#8b8da9" stroke-width="1.400" stroke-linejoin="round" stroke-linecap="round"/><path d="M7 5h.1M11 5h.1M7 8h.1M11 8h.1M7 11h.1M11 11h.1" stroke="#8b8da9" stroke-width="1.800" stroke-linecap="round"/></svg>
<span style="position:absolute;left:55.5px;top:368.50px;font:400 14px/18px 'Liberation Sans',sans-serif;color:#ffffff;white-space:pre;transform:scaleX(0.9498);transform-origin:0 50%;">Seller</span>
<svg style="position:absolute;left:204px;top:374px;" width="8" height="6" viewBox="0 0 8 6"><path d="M1 4.500 4 1.500 7 4.500" fill="none" stroke="#d0d2e6" stroke-width="1.300"/></svg>
<span style="position:absolute;left:58px;top:400.80px;font:700 14px/18px 'Liberation Sans',sans-serif;color:#ffffff;white-space:pre;transform:scaleX(0.9403);transform-origin:0 50%;-webkit-text-stroke:.25px #ffffff;">Seller Stores</span>
<span style="position:absolute;left:58px;top:427.80px;font:700 14px/18px 'Liberation Sans',sans-serif;color:#adafd0;white-space:pre;transform:scaleX(1.0048);transform-origin:0 50%;-webkit-text-stroke:.25px #adafd0;">Payout Methods Approval</span>
<span style="position:absolute;left:58px;top:455.60px;font:700 14px/18px 'Liberation Sans',sans-serif;color:#adafd0;white-space:pre;transform:scaleX(0.9856);transform-origin:0 50%;-webkit-text-stroke:.25px #adafd0;">Seller Payout Methods</span>
<span style="position:absolute;left:58px;top:483.00px;font:700 14px/18px 'Liberation Sans',sans-serif;color:#adafd0;white-space:pre;transform:scaleX(1.0120);transform-origin:0 50%;-webkit-text-stroke:.25px #adafd0;">Announcements</span>
<span style="position:absolute;left:58px;top:510.70px;font:700 14px/18px 'Liberation Sans',sans-serif;color:#adafd0;white-space:pre;transform:scaleX(1.0074);transform-origin:0 50%;-webkit-text-stroke:.25px #adafd0;">Order Payments Approval</span>
<span style="position:absolute;left:58px;top:538.00px;font:700 14px/18px 'Liberation Sans',sans-serif;color:#adafd0;white-space:pre;transform:scaleX(0.9585);transform-origin:0 50%;-webkit-text-stroke:.25px #adafd0;">Seller Groups</span>
<span style="position:absolute;left:58px;top:565.40px;font:700 14px/18px 'Liberation Sans',sans-serif;color:#adafd0;white-space:pre;transform:scaleX(0.9680);transform-origin:0 50%;-webkit-text-stroke:.25px #adafd0;">Seller Restrictions</span>
<span style="position:absolute;left:58px;top:592.80px;font:700 14px/18px 'Liberation Sans',sans-serif;color:#adafd0;white-space:pre;transform:scaleX(1.0017);transform-origin:0 50%;-webkit-text-stroke:.25px #adafd0;">Withdraw Requests</span>
<svg style="position:absolute;left:22px;top:623.7px;" width="20" height="20" viewBox="0 0 18 18"><path d="M2 2h6.500l7.500 7.500-6.500 6.500L2 8.500z" fill="none" stroke="#8b8da9" stroke-width="1.400" stroke-linejoin="round" stroke-linecap="round"/><circle cx="5.800" cy="5.800" r="1.200" fill="none" stroke="#8b8da9" stroke-width="1.400" stroke-linejoin="round" stroke-linecap="round"/></svg>
<span style="position:absolute;left:57px;top:624.70px;font:400 14px/18px 'Liberation Sans',sans-serif;color:#9fa1c2;white-space:pre;transform:scaleX(1.0317);transform-origin:0 50%;">Products</span>
<svg style="position:absolute;left:204px;top:630.7px;" width="8" height="6" viewBox="0 0 8 6"><path d="M1 1.500 4 4.500 7 1.500" fill="none" stroke="#8b8da9" stroke-width="1.300"/></svg>
<svg style="position:absolute;left:22px;top:658.5px;" width="20" height="20" viewBox="0 0 18 18"><circle cx="8" cy="8" r="5.500" fill="none" stroke="#8b8da9" stroke-width="1.400" stroke-linejoin="round" stroke-linecap="round"/><path d="M12 12l4 4M5.500 9.500 8 7l1.500 1.500L13 5M13 5h-2.500M13 5v2.500" fill="none" stroke="#8b8da9" stroke-width="1.400" stroke-linejoin="round" stroke-linecap="round"/></svg>
<span style="position:absolute;left:57px;top:659.50px;font:400 14px/18px 'Liberation Sans',sans-serif;color:#9fa1c2;white-space:pre;transform:scaleX(0.8114);transform-origin:0 50%;">SEO</span>
<svg style="position:absolute;left:204px;top:665.5px;" width="8" height="6" viewBox="0 0 8 6"><path d="M1 1.500 4 4.500 7 1.500" fill="none" stroke="#8b8da9" stroke-width="1.300"/></svg>
<svg style="position:absolute;left:22px;top:694px;" width="20" height="20" viewBox="0 0 18 18"><circle cx="9" cy="5.500" r="3.500" fill="none" stroke="#8b8da9" stroke-width="1.400" stroke-linejoin="round" stroke-linecap="round"/><path d="M2.500 16.500c0-4 2.500-5.500 6.500-5.500s6.500 1.500 6.500 5.500" fill="none" stroke="#8b8da9" stroke-width="1.400" stroke-linejoin="round" stroke-linecap="round"/></svg>
<span style="position:absolute;left:57px;top:695.00px;font:400 14px/18px 'Liberation Sans',sans-serif;color:#9fa1c2;white-space:pre;transform:scaleX(1.0563);transform-origin:0 50%;">Customers</span>
<svg style="position:absolute;left:204px;top:701px;" width="8" height="6" viewBox="0 0 8 6"><path d="M1 1.500 4 4.500 7 1.500" fill="none" stroke="#8b8da9" stroke-width="1.300"/></svg>
<svg style="position:absolute;left:22px;top:729.5px;" width="22" height="20" viewBox="0 0 20 18"><circle cx="7.500" cy="5.500" r="3.300" fill="none" stroke="#8b8da9" stroke-width="1.400" stroke-linejoin="round" stroke-linecap="round"/><path d="M1.500 16.500c0-4 2-5.500 6-5.500s6 1.500 6 5.500M13 2.500a3.300 3.300 0 0 1 0 6M16 11.500c2 .7 2.800 2.500 2.800 5" fill="none" stroke="#8b8da9" stroke-width="1.400" stroke-linejoin="round" stroke-linecap="round"/></svg>
<span style="position:absolute;left:61px;top:730.50px;font:400 14px/18px 'Liberation Sans',sans-serif;color:#9fa1c2;white-space:pre;transform:scaleX(1.0250);transform-origin:0 50%;">Employees</span>
<svg style="position:absolute;left:204px;top:736.5px;" width="8" height="6" viewBox="0 0 8 6"><path d="M1 1.500 4 4.500 7 1.500" fill="none" stroke="#8b8da9" stroke-width="1.300"/></svg>
<svg style="position:absolute;left:22px;top:765.5px;" width="22" height="20" viewBox="0 0 20 18"><path d="M2 7v4.500h3L13 15V3.500L5 7zM5 11.500 6.500 16h2L7.500 12" fill="#8b8da9" stroke="#8b8da9" stroke-width="1" stroke-linejoin="round"/><path d="M15.500 6.500 18 5M15.500 9.300H18.500M15.500 12 18 13.500" stroke="#8b8da9" stroke-width="1.300" stroke-linecap="round"/></svg>
<span style="position:absolute;left:62px;top:766.50px;font:400 14px/18px 'Liberation Sans',sans-serif;color:#9fa1c2;white-space:pre;transform:scaleX(1.0493);transform-origin:0 50%;">Marketing</span>
<svg style="position:absolute;left:204px;top:772.5px;" width="8" height="6" viewBox="0 0 8 6"><path d="M1 1.500 4 4.500 7 1.500" fill="none" stroke="#8b8da9" stroke-width="1.300"/></svg>
<svg style="position:absolute;left:22px;top:800.7px;" width="20" height="20" viewBox="0 0 18 18"><circle cx="9" cy="9" r="2.500" fill="none" stroke="#8b8da9" stroke-width="1.400" stroke-linejoin="round" stroke-linecap="round"/><path d="M9 1.500l1.300 2 2.300-.6.600 2.300 2.300.6-.6 2.300 1.600 1.700-1.600 1.700.6 2.300-2.300.6-.6 2.300-2.300-.6L9 17.300 7.700 15.400l-2.300.6-.6-2.300-2.300-.6.600-2.300L1.500 9.200l1.600-1.700-.6-2.300 2.300-.6.600-2.300 2.300.6z" fill="none" stroke="#8b8da9" stroke-width="1.400" stroke-linejoin="round" stroke-linecap="round" transform="translate(0,-.3)"/></svg>
<span style="position:absolute;left:57px;top:801.70px;font:400 14px/18px 'Liberation Sans',sans-serif;color:#9fa1c2;white-space:pre;transform:scaleX(1.0377);transform-origin:0 50%;">Settings</span>
<svg style="position:absolute;left:204px;top:807.7px;" width="8" height="6" viewBox="0 0 8 6"><path d="M1 1.500 4 4.500 7 1.500" fill="none" stroke="#8b8da9" stroke-width="1.300"/></svg>
<svg style="position:absolute;left:22px;top:836.5px;" width="20" height="20" viewBox="0 0 18 18"><rect x="2" y="6" width="14" height="3.500" fill="none" stroke="#8b8da9" stroke-width="1.400" stroke-linejoin="round" stroke-linecap="round"/><path d="M3.500 9.500v7h11v-7M9 6v10.500M9 6C7 6 4.500 5 5.500 3S9 4 9 6zM9 6c2 0 4.500-1 3.500-3S9 4 9 6z" fill="none" stroke="#8b8da9" stroke-width="1.400" stroke-linejoin="round" stroke-linecap="round"/></svg>
<span style="position:absolute;left:57px;top:837.50px;font:400 14px/18px 'Liberation Sans',sans-serif;color:#9fa1c2;white-space:pre;transform:scaleX(1.0315);transform-origin:0 50%;">Gift Cards</span>
<svg style="position:absolute;left:204px;top:843.5px;" width="8" height="6" viewBox="0 0 8 6"><path d="M1 1.500 4 4.500 7 1.500" fill="none" stroke="#8b8da9" stroke-width="1.300"/></svg>
<svg style="position:absolute;left:22px;top:872px;" width="20" height="20" viewBox="0 0 18 18"><path d="M1.500 4.500h15v3a1.500 1.500 0 0 0 0 3v3h-15v-3a1.500 1.500 0 0 0 0-3z" fill="none" stroke="#8b8da9" stroke-width="1.400" stroke-linejoin="round" stroke-linecap="round"/><path d="M6.500 11.500l5-5M6.800 7.200h.1M11.200 11h.1" stroke="#8b8da9" stroke-width="1.500" stroke-linecap="round"/></svg>
<span style="position:absolute;left:57px;top:873.00px;font:400 14px/18px 'Liberation Sans',sans-serif;color:#9fa1c2;white-space:pre;transform:scaleX(1.0527);transform-origin:0 50%;">Coupons</span>
<svg style="position:absolute;left:204px;top:879px;" width="8" height="6" viewBox="0 0 8 6"><path d="M1 1.500 4 4.500 7 1.500" fill="none" stroke="#8b8da9" stroke-width="1.300"/></svg>
<svg style="position:absolute;left:22px;top:907.5px;" width="20" height="20" viewBox="0 0 18 18"><path d="M2.500 16V9M6.800 16V5M11.200 16V2M15.500 16V7" stroke="#8b8da9" stroke-width="2" stroke-linecap="butt"/></svg>
<span style="position:absolute;left:55px;top:908.50px;font:400 14px/18px 'Liberation Sans',sans-serif;color:#9fa1c2;white-space:pre;transform:scaleX(1.0343);transform-origin:0 50%;">Stats</span>
<svg style="position:absolute;left:204px;top:914.5px;" width="8" height="6" viewBox="0 0 8 6"><path d="M1 1.500 4 4.500 7 1.500" fill="none" stroke="#8b8da9" stroke-width="1.300"/></svg>
<svg style="position:absolute;left:22px;top:943.8px;" width="20" height="20" viewBox="0 0 18 18"><rect x="1.500" y="2.500" width="15" height="4" fill="none" stroke="#8b8da9" stroke-width="1.400" stroke-linejoin="round" stroke-linecap="round"/><path d="M3 6.500v9.500h12V6.500M7 10h4" fill="none" stroke="#8b8da9" stroke-width="1.400" stroke-linejoin="round" stroke-linecap="round"/></svg>
<span style="position:absolute;left:57px;top:944.80px;font:400 14px/18px 'Liberation Sans',sans-serif;color:#9fa1c2;white-space:pre;transform:scaleX(1.0234);transform-origin:0 50%;">Others</span>
<svg style="position:absolute;left:204px;top:950.8px;" width="8" height="6" viewBox="0 0 8 6"><path d="M1 1.500 4 4.500 7 1.500" fill="none" stroke="#8b8da9" stroke-width="1.300"/></svg>
<div style="position:absolute;left:1090px;top:232px;width:777px;height:1px;background:#ececf2;"></div>
<div style="position:absolute;left:1090px;top:296px;width:777px;height:1px;background:#ececf2;"></div>
<div style="position:absolute;left:1090px;top:360px;width:777px;height:1px;background:#ececf2;"></div>
<div style="position:absolute;left:1090px;top:420px;width:777px;height:1px;background:#ececf2;"></div>
<span style="position:absolute;left:1101.5px;top:246.60px;font:700 13px/17px 'Liberation Sans',sans-serif;color:#44465a;white-space:pre;">8</span>
<span style="position:absolute;left:1175.5px;top:246.10px;font:400 13.5px/18px 'Liberation Sans',sans-serif;color:#55585f;white-space:pre;transform:scaleX(1.0208);transform-origin:0 50%;">20.00</span>
<span style="position:absolute;left:1330.5px;top:246.10px;font:400 13.5px/18px 'Liberation Sans',sans-serif;color:#55585f;white-space:pre;transform:scaleX(1.1001);transform-origin:0 50%;">Test available</span>
<span style="position:absolute;left:1330.5px;top:266.10px;font:400 13.5px/18px 'Liberation Sans',sans-serif;color:#55585f;white-space:pre;transform:scaleX(1.1312);transform-origin:0 50%;">balance</span>
<span style="position:absolute;left:1578px;top:246.10px;font:400 13.5px/18px 'Liberation Sans',sans-serif;color:#55585f;white-space:pre;transform:scaleX(1.1000);transform-origin:0 50%;">Available</span>
<div style="position:absolute;left:1746px;top:245px;width:35px;height:35px;background:#fb4f60;border-radius:3px;box-shadow:0 2px 5px rgba(250,76,97,.35);"></div>
<svg style="position:absolute;left:1758px;top:256px;" width="11" height="13" viewBox="0 0 13 15"><path d="M4.500 0h4l.8 1H12.500v2H.5V1H3.700zM1.500 4h10v9.500a1.500 1.500 0 0 1-1.500 1.500H3a1.500 1.500 0 0 1-1.500-1.500z" fill="#fff"/></svg>
<span style="position:absolute;left:1101.5px;top:310.80px;font:700 13px/17px 'Liberation Sans',sans-serif;color:#44465a;white-space:pre;">9</span>
<span style="position:absolute;left:1175.5px;top:310.30px;font:400 13.5px/18px 'Liberation Sans',sans-serif;color:#55585f;white-space:pre;transform:scaleX(0.9172);transform-origin:0 50%;">10.00</span>
<span style="position:absolute;left:1330.5px;top:310.30px;font:400 13.5px/18px 'Liberation Sans',sans-serif;color:#55585f;white-space:pre;transform:scaleX(1.1102);transform-origin:0 50%;">test available</span>
<span style="position:absolute;left:1330.5px;top:330.30px;font:400 13.5px/18px 'Liberation Sans',sans-serif;color:#55585f;white-space:pre;transform:scaleX(1.1312);transform-origin:0 50%;">balance</span>
<span style="position:absolute;left:1578px;top:310.30px;font:400 13.5px/18px 'Liberation Sans',sans-serif;color:#55585f;white-space:pre;transform:scaleX(1.0596);transform-origin:0 50%;">Pending</span>
<div style="position:absolute;left:1746px;top:309px;width:35px;height:35px;background:#fb4f60;border-radius:3px;box-shadow:0 2px 5px rgba(250,76,97,.35);"></div>
<svg style="position:absolute;left:1758px;top:320px;" width="11" height="13" viewBox="0 0 13 15"><path d="M4.500 0h4l.8 1H12.500v2H.5V1H3.700zM1.500 4h10v9.500a1.500 1.500 0 0 1-1.500 1.500H3a1.500 1.500 0 0 1-1.500-1.500z" fill="#fff"/></svg>
<span style="position:absolute;left:1101.5px;top:374.60px;font:700 13px/17px 'Liberation Sans',sans-serif;color:#44465a;white-space:pre;">10</span>
<span style="position:absolute;left:1175.5px;top:374.10px;font:400 13.5px/18px 'Liberation Sans',sans-serif;color:#55585f;white-space:pre;transform:scaleX(1.0057);transform-origin:0 50%;">-10.00</span>
<span style="position:absolute;left:1330.5px;top:374.10px;font:400 13.5px/18px 'Liberation Sans',sans-serif;color:#55585f;white-space:pre;transform:scaleX(1.1027);transform-origin:0 50%;">test</span>
<span style="position:absolute;left:1578px;top:374.10px;font:400 13.5px/18px 'Liberation Sans',sans-serif;color:#55585f;white-space:pre;transform:scaleX(1.1000);transform-origin:0 50%;">Available</span>
<div style="position:absolute;left:1746px;top:373px;width:35px;height:35px;background:#fb4f60;border-radius:3px;box-shadow:0 2px 5px rgba(250,76,97,.35);"></div>
<svg style="position:absolute;left:1758px;top:384px;" width="11" height="13" viewBox="0 0 13 15"><path d="M4.500 0h4l.8 1H12.500v2H.5V1H3.700zM1.500 4h10v9.500a1.500 1.500 0 0 1-1.500 1.500H3a1.500 1.500 0 0 1-1.500-1.500z" fill="#fff"/></svg>
<svg style="position:absolute;left:1426px;top:456px;" width="7" height="9" viewBox="0 0 7 9"><path d="M5.500 1 1.500 4.500 5.500 8" fill="none" stroke="#5a5c6a" stroke-width="1.400"/></svg>
<div style="position:absolute;left:1449.5px;top:444.5px;width:31.5px;height:32px;background:#6a24e2;border-radius:3px;"></div>
<span style="position:absolute;left:1465.3px;transform:translateX(-50%);top:450.00px;font:400 16px/21px 'Liberation Sans',sans-serif;color:#ffffff;white-space:pre;">1</span>
<span style="position:absolute;left:1501.5px;transform:translateX(-50%);top:450.00px;font:400 16.5px/21px 'Liberation Sans',sans-serif;color:#55585f;white-space:pre;">2</span>
<svg style="position:absolute;left:1523px;top:456px;" width="7" height="9" viewBox="0 0 7 9"><path d="M1.500 1 5.500 4.500 1.500 8" fill="none" stroke="#5a5c6a" stroke-width="1.400"/></svg>
<span style="position:absolute;left:288px;top:489.90px;font:400 20.5px/27px 'Liberation Sans',sans-serif;color:#41454f;white-space:pre;transform:scaleX(1.1010);transform-origin:0 50%;">Balance Adjustment</span>
<span style="position:absolute;left:288px;top:524.40px;font:400 13.5px/18px 'Liberation Sans',sans-serif;color:#3d3f52;white-space:pre;transform:scaleX(1.1053);transform-origin:0 50%;-webkit-text-stroke:.38px #3d3f52;">Transaction Id</span>
<span style="position:absolute;left:383px;top:524.00px;font:700 13px/17px 'Liberation Sans',sans-serif;color:#6a24e2;white-space:pre;">*</span>
<div style="position:absolute;left:288px;top:552px;width:790px;height:36px;background:#ffffff;box-sizing:border-box;border:1px solid #d9d9e1;border-radius:4px;"></div>
<span style="position:absolute;left:301px;top:560.50px;font:400 13.5px/18px 'Liberation Sans',sans-serif;color:#77758a;white-space:pre;transform:scaleX(1.0635);transform-origin:0 50%;">Enter Transaction Id</span>
<span style="position:absolute;left:288px;top:612.60px;font:400 13.5px/18px 'Liberation Sans',sans-serif;color:#3d3f52;white-space:pre;transform:scaleX(1.1066);transform-origin:0 50%;-webkit-text-stroke:.38px #3d3f52;">Balance</span>
<span style="position:absolute;left:343px;top:612.00px;font:700 13px/17px 'Liberation Sans',sans-serif;color:#6a24e2;white-space:pre;">*</span>
<div style="position:absolute;left:288px;top:640px;width:790px;height:36px;background:#ffffff;box-sizing:border-box;border:1px solid #a3a3ad;border-radius:4px;"></div>
<span style="position:absolute;left:301px;top:648.60px;font:400 13.5px/18px 'Liberation Sans',sans-serif;color:#5a5c6a;white-space:pre;transform:scaleX(0.8211);transform-origin:0 50%;">123</span>
<div style="position:absolute;left:320px;top:649px;width:1px;height:18px;background:#222;"></div>
<div style="position:absolute;left:1020px;top:700px;width:58px;height:37px;background:#6a24e2;border-radius:4px;box-shadow:0 2px 5px rgba(106,36,226,.3);"></div>
<span style="position:absolute;left:1049px;transform:translateX(-50%);top:709.50px;font:400 13.5px/18px 'Liberation Sans',sans-serif;color:#ffffff;white-space:pre;">Save</span>
<span style="position:absolute;left:288px;top:758.50px;font:700 20.5px/27px 'Liberation Sans',sans-serif;color:#41454f;white-space:pre;transform:scaleX(1.0351);transform-origin:0 50%;">Balance Summary</span>
<div style="position:absolute;left:288px;top:808px;width:220px;height:100px;background:#ffffff;border-radius:10px;box-shadow:0 1px 8px rgba(50,50,80,.17);"></div>
<span style="position:absolute;left:323px;top:824.60px;font:400 15.5px/20px 'Liberation Sans',sans-serif;color:#41454f;white-space:pre;transform:scaleX(1.0877);transform-origin:0 50%;-webkit-text-stroke:.38px #41454f;">Pending Balance</span>
<svg style="position:absolute;left:458.5px;top:828.3px;" width="14" height="14" viewBox="0 0 14 14"><path d="M1 13l.8-3.300L9.500 2l2.500 2.500-7.700 7.700zM10.300 1.200l1-1a.8.800 0 0 1 1.100 0l1.400 1.400a.8.800 0 0 1 0 1.100l-1 1z" fill="#6a24e2"/></svg>
<span style="position:absolute;left:339.4px;top:860.70px;font:700 23px/30px 'Liberation Sans',sans-serif;color:#41454f;white-space:pre;transform:scaleX(1.0852);transform-origin:0 50%;">$95562.73</span>
<div style="position:absolute;left:524px;top:808px;width:220px;height:100px;background:#ffffff;border-radius:10px;box-shadow:0 1px 8px rgba(50,50,80,.17);"></div>
<span style="position:absolute;left:555px;top:824.60px;font:400 15.5px/20px 'Liberation Sans',sans-serif;color:#41454f;white-space:pre;transform:scaleX(1.1037);transform-origin:0 50%;-webkit-text-stroke:.38px #41454f;">Available Balance</span>
<svg style="position:absolute;left:698.6px;top:828.3px;" width="14" height="14" viewBox="0 0 14 14"><path d="M1 13l.8-3.300L9.500 2l2.500 2.500-7.700 7.700zM10.300 1.200l1-1a.8.800 0 0 1 1.100 0l1.400 1.400a.8.800 0 0 1 0 1.100l-1 1z" fill="#6a24e2"/></svg>
<span style="position:absolute;left:587.8px;top:860.70px;font:700 23px/30px 'Liberation Sans',sans-serif;color:#41454f;white-space:pre;transform:scaleX(1.1030);transform-origin:0 50%;">$524.34</span>
<div style="position:absolute;left:760px;top:808px;width:220px;height:100px;background:#ffffff;border-radius:10px;box-shadow:0 1px 8px rgba(50,50,80,.17);"></div>
<span style="position:absolute;left:788.4px;top:824.60px;font:400 15.5px/20px 'Liberation Sans',sans-serif;color:#41454f;white-space:pre;transform:scaleX(1.0910);transform-origin:0 50%;-webkit-text-stroke:.38px #41454f;">In-Review Balance</span>
<svg style="position:absolute;left:937px;top:828.3px;" width="14" height="14" viewBox="0 0 14 14"><path d="M1 13l.8-3.300L9.500 2l2.500 2.500-7.700 7.700zM10.300 1.200l1-1a.8.800 0 0 1 1.100 0l1.400 1.400a.8.800 0 0 1 0 1.100l-1 1z" fill="#6a24e2"/></svg>
<span style="position:absolute;left:831.7px;top:860.70px;font:700 23px/30px 'Liberation Sans',sans-serif;color:#41454f;white-space:pre;transform:scaleX(1.0915);transform-origin:0 50%;">$75.00</span>
<div style="position:absolute;left:0px;top:1012px;width:1920px;height:68px;background:#22151f;"></div>
<svg style="position:absolute;left:12px;top:1022px;" width="48" height="48" viewBox="0 0 48 48"><path d="M30 1.700H42.500V14z" fill="#1d6fa5"/><path d="M5.800 5a3.300 3.300 0 0 1 3.300-3.300H29.500L42.500 14.500V42.700A3.300 3.300 0 0 1 39.200 46H9.100A3.300 3.300 0 0 1 5.800 42.700z" fill="#f7fafc" stroke="#2f8cbf" stroke-width="2"/><path d="M6.800 24h34.700v18.500a2.500 2.500 0 0 1-2.500 2.500H9.300a2.500 2.500 0 0 1-2.500-2.500z" fill="#e4eef5"/><path d="M12 19.200h7.600M12 23h7.600M12 26.900h7.600M12 30.800h23.800M12 34.700h23.800M12 38.700h17.800" stroke="#1d6fa5" stroke-width="2.100"/><rect x="22.200" y="18.200" width="13.600" height="9.600" fill="#8fb4cc"/><path d="M22.200 27.800 27 21l3.500 4 2-2 3.300 4.800z" fill="#4a5560"/><circle cx="33.500" cy="20.300" r="1.200" fill="#f5e27a"/></svg>
<svg style="position:absolute;left:84px;top:1022px;" width="48" height="48" viewBox="0 0 48 48"><defs><linearGradient id="tb" x1="0" y1="0" x2="1" y2="1"><stop offset="0" stop-color="#2f8df5"/><stop offset="1" stop-color="#0c45a8"/></linearGradient></defs><path d="M24 3C32 1 41 2.500 44 5c-2 .5-3 1.500-3 1.500C46.500 12 49 22 46 31S34 47.500 24 47.500 4 41 1.500 31 2 14 6 9.500c0 4 1 6.500 2.500 8C10 9 16 4.500 24 3z" fill="url(#tb)"/><path d="M17.500 12C22 5 33 3 40 6.500c-5 0-9.500 2-12 5.500z" fill="#164fb3"/><path d="M3 22c-1 10 4 20 14 23.500S38 45 43 37c-5 5-13 7-20 4S10 30 11 21c-3 2-5.500 1-8 1z" fill="#0d3f9c" opacity=".75"/><ellipse cx="23.800" cy="24.500" rx="12.200" ry="9.800" fill="#e9f1fb"/><path d="M12.500 20.500 23.800 29 35 20.500" fill="none" stroke="#b9cdea" stroke-width="1.600"/><path d="M13 30c5 5 16 5 21.500 0-4 8-18 8-21.500 0z" fill="#5e92e6" opacity=".8"/><circle cx="34" cy="8.800" r="1" fill="#0b2f73"/></svg>
<svg style="position:absolute;left:156px;top:1022px;" width="48" height="48" viewBox="0 0 48 48"><circle cx="24" cy="24" r="22.400" fill="#3b9be6"/><path d="M1.600 24a22.400 22.400 0 0 1 44.800 0z" fill="#2a8ad9"/><path d="M18 17.500c0-7.500 12.500-7.500 12.500-.5 0 5-6 6-6 12.500" fill="none" stroke="#fff" stroke-width="2.600" stroke-linecap="round"/><circle cx="24.300" cy="36" r="2.100" fill="#fff"/></svg>
<svg style="position:absolute;left:228px;top:1022px;" width="48" height="48" viewBox="0 0 48 48"><defs><linearGradient id="ff1" x1=".85" y1=".1" x2=".2" y2=".95"><stop offset="0" stop-color="#ffe03d"/><stop offset=".35" stop-color="#ff9a1f"/><stop offset=".7" stop-color="#ff4a3a"/><stop offset="1" stop-color="#e8277a"/></linearGradient><radialGradient id="ff2" cx=".55" cy=".35" r=".7"><stop offset="0" stop-color="#a94bf5"/><stop offset="1" stop-color="#4a2bd0"/></radialGradient></defs><path d="M30.500 -.5c3 4 9 8 12.500 14.500 5 10 1.500 22-7 28S14 48 6 40-1 20 4.500 12c.5 2.500 1.500 4 2.500 5 .5-4 3-8 6.500-10 0 2.500 1 5 3 6.500 2-1 4.500-1 7-.5C22 8.500 25.500 3 30.500-.5z" fill="url(#ff1)"/><path d="M30.500 -.5c3 4 9 8 12.500 14.500 2 4 2.500 8 2 12-1.500-6-5-9-8-11.500C36 9 33 5 30.500-.5z" fill="#ffe94a"/><circle cx="24.400" cy="24.700" r="9.600" fill="url(#ff2)"/><path d="M14 17c3-2.500 8-3 11.500-.5-2.500 0-4 1-4.500 2.500 2 1.500 4.500 1.500 6.500.5-.5 4-4.500 6-8.500 4.500-3.500-1.500-5.500-4-5-7z" fill="#ff8a1c"/></svg>
<div style="position:absolute;left:244.85px;top:1072.2px;width:5.6px;height:5.6px;background:#e2582c;border-radius:3px;"></div>
<div style="position:absolute;left:253.55px;top:1072.2px;width:5.6px;height:5.6px;background:#e2582c;border-radius:3px;"></div>
<svg style="position:absolute;left:300px;top:1022px;" width="48" height="48" viewBox="0 0 48 48"><rect x="5.700" y="1.700" width="36.700" height="44.300" rx="4.500" fill="#e9e5d9"/><rect x="5.700" y="1.700" width="36.700" height="44.300" rx="4.500" fill="none" stroke="#c9c4b4" stroke-width=".8"/><circle cx="24" cy="24.200" r="16" fill="#2c2c2c"/><circle cx="24" cy="24.200" r="13.500" fill="#4a4a48"/><circle cx="24" cy="24.200" r="11.600" fill="#f3c319"/><circle cx="24" cy="24.200" r="11.600" fill="none" stroke="#c99c0c" stroke-width="1"/><circle cx="24" cy="24.200" r="5.600" fill="#1e1e1e"/><circle cx="24" cy="24.200" r="2.800" fill="#3c3c3c"/></svg>
<svg style="position:absolute;left:371.5px;top:1022px;" width="48" height="48" viewBox="0 0 48 48"><path d="M21 3.500c1-3 5-3 6 0l9.500 31h-25z" fill="#ff8c0a"/><path d="M18.700 11h10.600l2.300 7.500H16.400zM14.700 24h18.600l2.300 7.500H12.400z" fill="#f1f1f1"/><path d="M18.700 11h10.600l2.300 7.500H16.400zM14.700 24h18.600l2.300 7.500H12.400z" fill="#c9c9c9" opacity=".45"/><path d="M9.500 34h29l5.500 9.500c.8 1.500 0 3-1.500 3H5.500c-1.500 0-2.300-1.500-1.500-3z" fill="#ff9414"/><path d="M11.500 34.500c3 4 22 4 25 0l1 2.500c-4 5-23 5-27 0z" fill="#e06c00"/><path d="M4 44.500h40v1c0 .8-.6 1.200-1.500 1.200h-37c-.9 0-1.500-.4-1.500-1.200z" fill="#d96500"/></svg>
<svg style="position:absolute;left:444px;top:1022px;" width="48" height="48" viewBox="0 0 48 48"><path d="M17.500 8c0-8 13-8 13 0" fill="none" stroke="#f7d9c4" stroke-width="1.800"/><rect x="1.700" y="6" width="44.400" height="36.400" rx="5" fill="#f5894e"/><path d="M1.700 24V11a5 5 0 0 1 5-5h34.400a5 5 0 0 1 5 5v13z" fill="#f06c2c"/><path d="M13.500 35.500 22 17.500c.8-1.600 3.200-1.600 4 0l8.500 18" fill="none" stroke="#fff" stroke-width="3.600" stroke-linecap="round"/><path d="M11.500 29h25" stroke="#fff" stroke-width="3.400" stroke-linecap="round"/></svg>
<svg style="position:absolute;left:516px;top:1022px;" width="48" height="48" viewBox="0 0 48 48"><rect x="2" y="2" width="44" height="44" rx="5.500" fill="#a9a18f"/><rect x="2" y="2" width="44" height="44" rx="5.500" fill="none" stroke="#8f8877" stroke-width=".8"/><path d="M8 13a2.500 2.500 0 0 1 2.500-2.500H20l3 3H38a2.500 2.500 0 0 1 2.500 2.500V36a2.500 2.500 0 0 1-2.500 2.500H10.500A2.500 2.500 0 0 1 8 36z" fill="#f7f5f0"/><path d="M8 13a2.500 2.500 0 0 1 2.500-2.500H20l3 3H8z" fill="#dedad0"/></svg>
<div style="position:absolute;left:580px;top:1014px;width:64px;height:64px;background:rgba(255,255,255,.17);border-radius:7px;"></div>
<svg style="position:absolute;left:588px;top:1022px;" width="48" height="48" viewBox="0 0 48 48"><circle cx="24" cy="24" r="24" fill="#fff"/><path d="M24 24 3.200 12A24 24 0 0 1 44.800 12z" fill="#e33b2e"/><path d="M24 24 44.800 12A24 24 0 0 1 24 48z" fill="#fbc116"/><path d="M24 24 24 48A24 24 0 0 1 3.200 12z" fill="#2da94f"/><path d="M3.200 12A24 24 0 0 1 44.800 12H24z" fill="#e33b2e"/><path d="M44.800 12A24 24 0 0 1 24 48L34.400 30z" fill="#fbc116"/><path d="M24 48A24 24 0 0 1 3.200 12L13.600 30z" fill="#2da94f"/><path d="M24 12H44.800L34.400 30z" fill="#fbc116"/><path d="M13.600 30 3.200 12 24 12z" fill="#e33b2e" opacity="0"/><path d="M34.400 30 24 48 13.600 30z" fill="#2da94f"/><path d="M13.600 30 3.200 12H24A12 12 0 0 0 13.600 30z" fill="#e33b2e"/><path d="M24 12H44.800L34.400 30A12 12 0 0 0 24 12z" fill="#fbc116"/><path d="M34.400 30 24 48 13.600 30A12 12 0 0 0 34.400 30z" fill="#2da94f"/><circle cx="24" cy="24" r="11.800" fill="#fff"/><circle cx="24" cy="24" r="9.400" fill="#1f6fe8"/></svg>
<div style="position:absolute;left:604.85px;top:1072.2px;width:5.6px;height:5.6px;background:#e2582c;border-radius:3px;"></div>
<div style="position:absolute;left:613.5500000000001px;top:1072.2px;width:5.6px;height:5.6px;background:#e2582c;border-radius:3px;"></div>
<svg style="position:absolute;left:660px;top:1022px;" width="48" height="48" viewBox="0 0 48 48"><circle cx="24" cy="24" r="21" fill="#fff"/><g stroke-width="4.600" stroke-linecap="round"><path d="M21 13.500v7.500" stroke="#36c5f0"/><path d="M13.500 21h1" stroke="#36c5f0"/><path d="M13.500 21H21" stroke="#36c5f0"/><path d="M27 21V13.500" stroke="#2eb67d"/><path d="M33.500 21h1" stroke="#2eb67d"/><path d="M27 27h7.500" stroke="#ecb22e"/><path d="M27 33.500v1" stroke="#ecb22e"/><path d="M21 27v7.500" stroke="#e01e5a"/><path d="M13.500 27h1" stroke="#e01e5a"/></g></svg>
<div style="position:absolute;left:681.2px;top:1072.2px;width:5.6px;height:5.6px;background:#e2582c;border-radius:3px;"></div>
<svg style="position:absolute;left:732px;top:1022px;" width="48" height="48" viewBox="0 0 48 48"><path d="M34.500 3 45 8v32l-10.500 5L16 28.500 7.500 35 3.500 33V15l4-2 8.500 6.500z" fill="#2a9df4"/><path d="M34.500 3v42L12 24z" fill="#0a6fc0"/><path d="M34.500 14.500v19L22 24z" fill="#22151f"/><path d="M3.500 15l4-2L35 45l-.5 0L3.500 18zM3.500 33l4 2L34.500 3v7z" fill="#0d7fd0"/><path d="M34.500 3 45 8v32l-10.500 5z" fill="#2aa5f7"/></svg>
<div style="position:absolute;left:744.5px;top:1072.2px;width:5.6px;height:5.6px;background:#e2582c;border-radius:3px;"></div>
<div style="position:absolute;left:753.2px;top:1072.2px;width:5.6px;height:5.6px;background:#e2582c;border-radius:3px;"></div>
<div style="position:absolute;left:761.9px;top:1072.2px;width:5.6px;height:5.6px;background:#e2582c;border-radius:3px;"></div>
<svg style="position:absolute;left:804px;top:1022px;" width="48" height="48" viewBox="0 0 48 48"><circle cx="24" cy="24" r="22.400" fill="#6b6b6b"/><circle cx="24" cy="24" r="20.500" fill="none" stroke="#f2f2f2" stroke-width="3" stroke-dasharray="52 12.400"/><path d="M15 33.500 22.500 16c.6-1.400 2.400-1.400 3 0L33 33.500" fill="none" stroke="#f4f4f4" stroke-width="3.400" stroke-linecap="round"/><path d="M12.500 28h23" stroke="#f4f4f4" stroke-width="3.600" stroke-linecap="round"/><path d="M14.500 28h19" stroke="#b56ab0" stroke-width=".9"/></svg>
<div style="position:absolute;left:1868.5px;top:1030px;width:7.5px;height:7.5px;background:#ffffff;border-radius:1.500px;"></div>
<div style="position:absolute;left:1880.5px;top:1030px;width:7.5px;height:7.5px;background:#ffffff;border-radius:1.500px;"></div>
<div style="position:absolute;left:1892.5px;top:1030px;width:7.5px;height:7.5px;background:#ffffff;border-radius:1.500px;"></div>
<div style="position:absolute;left:1868.5px;top:1042px;width:7.5px;height:7.5px;background:#ffffff;border-radius:1.500px;"></div>
<div style="position:absolute;left:1880.5px;top:1042px;width:7.5px;height:7.5px;background:#ffffff;border-radius:1.500px;"></div>
<div style="position:absolute;left:1892.5px;top:1042px;width:7.5px;height:7.5px;background:#ffffff;border-radius:1.500px;"></div>
<div style="position:absolute;left:1868.5px;top:1054px;width:7.5px;height:7.5px;background:#ffffff;border-radius:1.500px;"></div>
<div style="position:absolute;left:1880.5px;top:1054px;width:7.5px;height:7.5px;background:#ffffff;border-radius:1.500px;"></div>
<div style="position:absolute;left:1892.5px;top:1054px;width:7.5px;height:7.5px;background:#ffffff;border-radius:1.500px;"></div>
<div style="position:absolute;left:1920px;top:0px;width:1920px;height:1080px;background:#0d1017;"></div>
<div style="position:absolute;left:1920px;top:0px;width:1920px;height:37px;background:#3c3b3d;"></div>
<span style="position:absolute;left:2650px;top:9.90px;font:700 14.5px/19px 'Liberation Sans',sans-serif;color:#ffffff;white-space:pre;transform:scaleX(1.0224);transform-origin:0 50%;">BalanceAdjusmentComponent.js - ods-front - Visual Studio Code</span>
<svg style="position:absolute;left:3750px;top:20px;" width="9" height="2" viewBox="0 0 9 2"><rect width="9" height="1.300" fill="#a8a8a8"/></svg>
<svg style="position:absolute;left:3783px;top:14px;" width="10" height="10" viewBox="0 0 10 10"><rect x=".6" y="2.600" width="6.500" height="6.500" fill="none" stroke="#a8a8a8" stroke-width="1.100"/><path d="M2.800 2.500V.6h6.500v6.500H7.300" fill="none" stroke="#a8a8a8" stroke-width="1.100"/></svg>
<svg style="position:absolute;left:3812px;top:8px;" width="20" height="20" viewBox="0 0 20 20"><circle cx="10" cy="10" r="9.500" fill="#5f5f5f"/><path d="M6.300 6.300l7.400 7.400M13.700 6.300l-7.400 7.400" stroke="#fff" stroke-width="1.500"/></svg>
<div style="position:absolute;left:1920px;top:37px;width:1920px;height:25px;background:#f7f7f7;"></div>
<span style="position:absolute;left:1926px;top:41.00px;font:400 14.5px/19px 'Liberation Sans',sans-serif;color:#3d3d3d;white-space:pre;transform:scaleX(1.0267);transform-origin:0 50%;">File</span>
<span style="position:absolute;left:1962px;top:41.00px;font:400 14.5px/19px 'Liberation Sans',sans-serif;color:#3d3d3d;white-space:pre;transform:scaleX(1.0800);transform-origin:0 50%;">Edit</span>
<span style="position:absolute;left:2001px;top:41.00px;font:400 14.5px/19px 'Liberation Sans',sans-serif;color:#3d3d3d;white-space:pre;transform:scaleX(1.0477);transform-origin:0 50%;">Selection</span>
<span style="position:absolute;left:2076px;top:41.00px;font:400 14.5px/19px 'Liberation Sans',sans-serif;color:#3d3d3d;white-space:pre;transform:scaleX(1.0811);transform-origin:0 50%;">View</span>
<span style="position:absolute;left:2122px;top:41.00px;font:400 14.5px/19px 'Liberation Sans',sans-serif;color:#3d3d3d;white-space:pre;transform:scaleX(0.9305);transform-origin:0 50%;">Go</span>
<span style="position:absolute;left:2153px;top:41.00px;font:400 14.5px/19px 'Liberation Sans',sans-serif;color:#3d3d3d;white-space:pre;transform:scaleX(0.9959);transform-origin:0 50%;">Run</span>
<span style="position:absolute;left:2192px;top:41.00px;font:400 14.5px/19px 'Liberation Sans',sans-serif;color:#3d3d3d;white-space:pre;transform:scaleX(1.0950);transform-origin:0 50%;">Terminal</span>
<span style="position:absolute;left:2264px;top:41.00px;font:400 14.5px/19px 'Liberation Sans',sans-serif;color:#3d3d3d;white-space:pre;transform:scaleX(1.0728);transform-origin:0 50%;">Help</span>
<div style="position:absolute;left:1920px;top:62px;width:48px;height:996px;background:#0c0f16;"></div>
<div style="position:absolute;left:1967px;top:62px;width:1px;height:996px;background:#0c0f16;"></div>
<svg style="position:absolute;left:1930px;top:71.5px;" width="28" height="28" viewBox="0 0 24 24"><circle cx="7" cy="4.500" r="2.500" fill="none" stroke="#868a96" stroke-width="1.350"/><circle cx="7" cy="19.500" r="2.500" fill="none" stroke="#868a96" stroke-width="1.350"/><circle cx="17" cy="9" r="2.500" fill="none" stroke="#868a96" stroke-width="1.350"/><path d="M7 7v10M17 11.500c0 4-10 2-10 5.500" fill="none" stroke="#868a96" stroke-width="1.350"/></svg>
<div style="position:absolute;left:1944px;top:86px;width:16px;height:16px;border-radius:8px;background:#4d3df5;"></div>
<span style="position:absolute;left:1952px;transform:translateX(-50%);top:88.30px;font:700 9.5px/12px 'Liberation Sans',sans-serif;color:#ffffff;white-space:pre;">4</span>
<svg style="position:absolute;left:1930px;top:119.5px;" width="28" height="28" viewBox="0 0 24 24"><circle cx="14.500" cy="9.500" r="6" fill="none" stroke="#868a96" stroke-width="1.350"/><path d="M10 14 3 21.500" fill="none" stroke="#868a96" stroke-width="1.350"/></svg>
<svg style="position:absolute;left:1930px;top:167.5px;" width="28" height="28" viewBox="0 0 24 24"><path d="M7.500 10V2.300L22 10.700 12.500 16.500" fill="none" stroke="#868a96" stroke-width="1.350"/><ellipse cx="6.800" cy="17.200" rx="3" ry="3.700" fill="none" stroke="#868a96" stroke-width="1.350"/><path d="M6.800 13.500v-1.800M4.800 12l1 1.500M8.800 12l-1 1.500M3.800 17.200H1.300M9.800 17.200h2.500M4 14.800 2 13.500M9.600 14.800l2-1.300M4 19.600l-2 1.500M9.600 19.600l2 1.500" fill="none" stroke="#868a96" stroke-width="1.350"/></svg>
<svg style="position:absolute;left:1930px;top:215.5px;" width="28" height="28" viewBox="0 0 24 24"><path d="M8.500 6.500V3.500h8l4 4v10h-5" fill="none" stroke="#e8eaf0" stroke-width="1.350"/><path d="M3.500 6.500h8l4 4v10.500h-12z" fill="none" stroke="#e8eaf0" stroke-width="1.350"/></svg>
<div style="position:absolute;left:1920px;top:205px;width:2px;height:48px;background:#f0675b;"></div>
<svg style="position:absolute;left:1930px;top:263.5px;" width="28" height="28" viewBox="0 0 24 24"><rect x="3" y="11.500" width="7.500" height="7.500" fill="none" stroke="#868a96" stroke-width="1.350"/><rect x="10.500" y="11.500" width="7.500" height="7.500" fill="none" stroke="#868a96" stroke-width="1.350"/><rect x="3" y="4" width="7.500" height="7.500" fill="none" stroke="#868a96" stroke-width="1.350"/><rect x="14.500" y="2" width="7" height="7" rx="1" fill="none" stroke="#868a96" stroke-width="1.350"/></svg>
<svg style="position:absolute;left:1930px;top:311.5px;" width="28" height="28" viewBox="0 0 24 24"><circle cx="12" cy="12" r="10" fill="none" stroke="#868a96" stroke-width="1.350"/><circle cx="9.500" cy="7.500" r="1.700" fill="#868a96"/><circle cx="9.500" cy="17" r="1.700" fill="#868a96"/><circle cx="15.500" cy="11.500" r="1.700" fill="#868a96"/><path d="M9.500 8v9M15.500 12c0 3-6 2-6 5" fill="none" stroke="#868a96" stroke-width="1.350"/></svg>
<svg style="position:absolute;left:1930px;top:359.5px;" width="28" height="28" viewBox="0 0 24 24"><circle cx="12" cy="12" r="10" fill="none" stroke="#868a96" stroke-width="1.350"/><circle cx="8.500" cy="7.500" r="1.500" fill="#868a96"/><circle cx="8.500" cy="17" r="1.500" fill="#868a96"/><path d="M8.500 8v9M8.500 9c3 0 5 1 5.500 4" fill="none" stroke="#868a96" stroke-width="1.350"/><circle cx="16" cy="16" r="3.500" fill="#0c0f16" stroke="#868a96" stroke-width="1.500"/><circle cx="16" cy="16" r="1.200" fill="#868a96"/></svg>
<svg style="position:absolute;left:1930px;top:407.5px;" width="28" height="28" viewBox="0 0 24 24"><path d="M12 2 20.500 7v10L12 22 3.500 17V7z" fill="none" stroke="#868a96" stroke-width="1.350"/><path d="M8 7.500v9l8-4.500z" fill="none" stroke="#868a96" stroke-width="1.350"/></svg>
<svg style="position:absolute;left:1930px;top:971.7px;" width="28" height="28" viewBox="0 0 24 24"><circle cx="12" cy="12" r="10" fill="none" stroke="#868a96" stroke-width="1.350"/><circle cx="12" cy="9.500" r="3.500" fill="none" stroke="#868a96" stroke-width="1.350"/><path d="M5.500 19.500c1-4 12-4 13 0" fill="none" stroke="#868a96" stroke-width="1.350"/></svg>
<svg style="position:absolute;left:1930px;top:1019.8px;" width="28" height="28" viewBox="0 0 24 24"><circle cx="12" cy="12" r="2.800" fill="none" stroke="#868a96" stroke-width="1.350"/><path d="M10.05 2.19L13.95 2.19L13.93 4.96L15.62 5.66L17.56 3.69L20.31 6.44L18.34 8.38L19.04 10.07L21.81 10.05L21.81 13.95L19.04 13.93L18.34 15.62L20.31 17.56L17.56 20.31L15.62 18.34L13.93 19.04L13.95 21.81L10.05 21.81L10.07 19.04L8.38 18.34L6.44 20.31L3.69 17.56L5.66 15.62L4.96 13.93L2.19 13.95L2.19 10.05L4.96 10.07L5.66 8.38L3.69 6.44L6.44 3.69L8.38 5.66L10.07 4.96z" fill="none" stroke="#868a96" stroke-width="1.350" stroke-linejoin="round"/></svg>
<div style="position:absolute;left:1968px;top:62px;width:233px;height:996px;background:#04050b;"></div>
<div style="position:absolute;left:2201px;top:62px;width:1px;height:996px;background:#2d3039;"></div>
<span style="position:absolute;left:1988px;top:71.70px;font:400 11px/14px 'Liberation Sans',sans-serif;color:#d5d7dc;white-space:pre;transform:scaleX(0.9012);transform-origin:0 50%;">EXPLORER</span>
<svg style="position:absolute;left:2171px;top:77px;" width="14" height="4" viewBox="0 0 14 4"><circle cx="2" cy="2" r="1" fill="#9da1ab"/><circle cx="7" cy="2" r="1" fill="#9da1ab"/><circle cx="12" cy="2" r="1" fill="#9da1ab"/></svg>
<svg style="position:absolute;left:1973px;top:104.7px;" width="10" height="6" viewBox="0 0 10 6"><path d="M1 1l4 4 4-4" fill="none" stroke="#b5b8c0" stroke-width="1.100"/></svg>
<span style="position:absolute;left:1988px;top:100.70px;font:700 11px/14px 'Liberation Sans',sans-serif;color:#e4e6ea;white-space:pre;transform:scaleX(0.9706);transform-origin:0 50%;">OPEN EDITORS</span>
<div style="position:absolute;left:1968px;top:119px;width:233px;height:22px;background:#262933;"></div>
<svg style="position:absolute;left:1995px;top:125px;" width="10" height="10" viewBox="0 0 10 10"><path d="M1 1l8 8M9 1 1 9" stroke="#c9ccd3" stroke-width="1.200"/></svg>
<div style="position:absolute;left:2013px;top:124.75px;width:10.5px;height:10.5px;background:#f2c14e;border-radius:1px;"></div>
<span style="position:absolute;right:1816.7px;top:127.00px;font:700 7px/9px 'Liberation Sans',sans-serif;color:#2e2403;white-space:pre;letter-spacing:-.55px;">JS</span>
<span style="position:absolute;left:2032.3px;top:121.50px;font:400 13px/17px 'Liberation Sans',sans-serif;color:#f0675b;white-space:pre;transform:scaleX(1.0232);transform-origin:0 50%;">BalanceAdjusment...</span>
<div style="position:absolute;left:2013px;top:146.75px;width:10.5px;height:10.5px;background:#f2c14e;border-radius:1px;"></div>
<span style="position:absolute;right:1816.7px;top:149.00px;font:700 7px/9px 'Liberation Sans',sans-serif;color:#2e2403;white-space:pre;letter-spacing:-.55px;">JS</span>
<span style="position:absolute;left:2032.3px;top:143.50px;font:400 13px/17px 'Liberation Sans',sans-serif;color:#e4e6ea;white-space:pre;transform:scaleX(0.9625);transform-origin:0 50%;font-style:italic;">Edit.js (Index)</span>
<span style="position:absolute;left:2114.8px;top:144.50px;font:400 12px/16px 'Liberation Sans',sans-serif;color:#8d919c;white-space:pre;transform:scaleX(0.9839);transform-origin:0 50%;font-style:italic;">src/pages/Sell...</span>
<div style="position:absolute;left:2013px;top:168.75px;width:10.5px;height:10.5px;background:#f2c14e;border-radius:1px;"></div>
<span style="position:absolute;right:1816.7px;top:171.00px;font:700 7px/9px 'Liberation Sans',sans-serif;color:#2e2403;white-space:pre;letter-spacing:-.55px;">JS</span>
<span style="position:absolute;left:2032.3px;top:165.50px;font:400 13px/17px 'Liberation Sans',sans-serif;color:#e4e6ea;white-space:pre;transform:scaleX(1.0111);transform-origin:0 50%;">userAgentLog.js</span>
<span style="position:absolute;left:2133.3px;top:166.50px;font:400 12px/16px 'Liberation Sans',sans-serif;color:#8d919c;white-space:pre;transform:scaleX(1.0327);transform-origin:0 50%;">src/utils</span>
<div style="position:absolute;left:2013px;top:190.75px;width:10.5px;height:10.5px;background:#f2c14e;border-radius:1px;"></div>
<span style="position:absolute;right:1816.7px;top:193.00px;font:700 7px/9px 'Liberation Sans',sans-serif;color:#2e2403;white-space:pre;letter-spacing:-.55px;">JS</span>
<span style="position:absolute;left:2032.3px;top:187.50px;font:400 13px/17px 'Liberation Sans',sans-serif;color:#e4e6ea;white-space:pre;transform:scaleX(1.0119);transform-origin:0 50%;">StakeHolderTable.js</span>
<span style="position:absolute;left:2155.3px;top:188.50px;font:400 12px/16px 'Liberation Sans',sans-serif;color:#8d919c;white-space:pre;transform:scaleX(1.0472);transform-origin:0 50%;">src/co...</span>
<div style="position:absolute;left:2013px;top:212.75px;width:10.5px;height:10.5px;background:#f2c14e;border-radius:1px;"></div>
<span style="position:absolute;right:1816.7px;top:215.00px;font:700 7px/9px 'Liberation Sans',sans-serif;color:#2e2403;white-space:pre;letter-spacing:-.55px;">JS</span>
<span style="position:absolute;left:2032.3px;top:209.50px;font:400 13px/17px 'Liberation Sans',sans-serif;color:#e4e6ea;white-space:pre;transform:scaleX(1.0264);transform-origin:0 50%;">HyperwalletUser.js</span>
<span style="position:absolute;left:2148.8px;top:210.50px;font:400 12px/16px 'Liberation Sans',sans-serif;color:#8d919c;white-space:pre;transform:scaleX(1.0472);transform-origin:0 50%;">src/co...</span>
<div style="position:absolute;left:2013px;top:234.75px;width:10.5px;height:10.5px;background:#f2c14e;border-radius:1px;"></div>
<span style="position:absolute;right:1816.7px;top:237.00px;font:700 7px/9px 'Liberation Sans',sans-serif;color:#2e2403;white-space:pre;letter-spacing:-.55px;">JS</span>
<span style="position:absolute;left:2032.3px;top:231.50px;font:400 13px/17px 'Liberation Sans',sans-serif;color:#e4e6ea;white-space:pre;transform:scaleX(1.0114);transform-origin:0 50%;">CommentSection.js</span>
<span style="position:absolute;left:2152.3px;top:232.50px;font:400 12px/16px 'Liberation Sans',sans-serif;color:#8d919c;white-space:pre;transform:scaleX(1.0472);transform-origin:0 50%;">src/co...</span>
<div style="position:absolute;left:2013px;top:256.75px;width:10.5px;height:10.5px;background:#f2c14e;border-radius:1px;"></div>
<span style="position:absolute;right:1816.7px;top:259.00px;font:700 7px/9px 'Liberation Sans',sans-serif;color:#2e2403;white-space:pre;letter-spacing:-.55px;">JS</span>
<span style="position:absolute;left:2032.3px;top:253.50px;font:400 13px/17px 'Liberation Sans',sans-serif;color:#e4e6ea;white-space:pre;transform:scaleX(0.9870);transform-origin:0 50%;">BalanceSection.js</span>
<span style="position:absolute;left:2140.3px;top:254.50px;font:400 12px/16px 'Liberation Sans',sans-serif;color:#8d919c;white-space:pre;transform:scaleX(1.0381);transform-origin:0 50%;">src/com...</span>
<div style="position:absolute;left:2013px;top:278.75px;width:10.5px;height:10.5px;background:#f2c14e;border-radius:1px;"></div>
<span style="position:absolute;right:1816.7px;top:281.00px;font:700 7px/9px 'Liberation Sans',sans-serif;color:#2e2403;white-space:pre;letter-spacing:-.55px;">JS</span>
<span style="position:absolute;left:2032.3px;top:275.50px;font:400 13px/17px 'Liberation Sans',sans-serif;color:#e4e6ea;white-space:pre;transform:scaleX(0.9853);transform-origin:0 50%;">BalanceChangePopup.js</span>
<span style="position:absolute;left:2179.3px;top:276.50px;font:400 12px/16px 'Liberation Sans',sans-serif;color:#8d919c;white-space:pre;transform:scaleX(1.1239);transform-origin:0 50%;">s...</span>
<div style="position:absolute;left:2013px;top:300.75px;width:10.5px;height:10.5px;background:#f2c14e;border-radius:1px;"></div>
<span style="position:absolute;right:1816.7px;top:303.00px;font:700 7px/9px 'Liberation Sans',sans-serif;color:#2e2403;white-space:pre;letter-spacing:-.55px;">JS</span>
<span style="position:absolute;left:2032.3px;top:297.50px;font:400 13px/17px 'Liberation Sans',sans-serif;color:#e4e6ea;white-space:pre;transform:scaleX(1.0096);transform-origin:0 50%;">index.js</span>
<span style="position:absolute;left:2082.8px;top:298.50px;font:400 12px/16px 'Liberation Sans',sans-serif;color:#8d919c;white-space:pre;transform:scaleX(1.0325);transform-origin:0 50%;">src/pages/Marketin...</span>
<div style="position:absolute;left:2013px;top:322.75px;width:10.5px;height:10.5px;background:#f2c14e;border-radius:1px;"></div>
<span style="position:absolute;right:1816.7px;top:325.00px;font:700 7px/9px 'Liberation Sans',sans-serif;color:#2e2403;white-space:pre;letter-spacing:-.55px;">JS</span>
<span style="position:absolute;left:2032.3px;top:319.50px;font:400 13px/17px 'Liberation Sans',sans-serif;color:#e4e6ea;white-space:pre;transform:scaleX(1.0082);transform-origin:0 50%;">EditPayout.js</span>
<span style="position:absolute;left:2114.8px;top:320.50px;font:400 12px/16px 'Liberation Sans',sans-serif;color:#8d919c;white-space:pre;transform:scaleX(1.0155);transform-origin:0 50%;">src/pages/Sel...</span>
<div style="position:absolute;left:2013px;top:344.75px;width:10.5px;height:10.5px;background:#f2c14e;border-radius:1px;"></div>
<span style="position:absolute;right:1816.7px;top:347.00px;font:700 7px/9px 'Liberation Sans',sans-serif;color:#2e2403;white-space:pre;letter-spacing:-.55px;">JS</span>
<span style="position:absolute;left:2032.3px;top:341.50px;font:400 13px/17px 'Liberation Sans',sans-serif;color:#e8a64a;white-space:pre;transform:scaleX(1.0323);transform-origin:0 50%;">PrimaryInput.js</span>
<span style="position:absolute;left:2127.8px;top:342.50px;font:400 12px/16px 'Liberation Sans',sans-serif;color:#8d919c;white-space:pre;transform:scaleX(1.0469);transform-origin:0 50%;">src/c...</span>
<div style="position:absolute;left:2013px;top:366.75px;width:10.5px;height:10.5px;background:#f2c14e;border-radius:1px;"></div>
<span style="position:absolute;right:1816.7px;top:369.00px;font:700 7px/9px 'Liberation Sans',sans-serif;color:#2e2403;white-space:pre;letter-spacing:-.55px;">JS</span>
<span style="position:absolute;left:2032.3px;top:363.50px;font:400 13px/17px 'Liberation Sans',sans-serif;color:#e4e6ea;white-space:pre;transform:scaleX(1.0380);transform-origin:0 50%;">string.js</span>
<span style="position:absolute;left:2084.8px;top:364.50px;font:400 12px/16px 'Liberation Sans',sans-serif;color:#8d919c;white-space:pre;transform:scaleX(1.0327);transform-origin:0 50%;">src/utils</span>
<div style="position:absolute;left:2013px;top:388.75px;width:10.5px;height:10.5px;background:#f2c14e;border-radius:1px;"></div>
<span style="position:absolute;right:1816.7px;top:391.00px;font:700 7px/9px 'Liberation Sans',sans-serif;color:#2e2403;white-space:pre;letter-spacing:-.55px;">JS</span>
<span style="position:absolute;left:2032.3px;top:385.50px;font:400 13px/17px 'Liberation Sans',sans-serif;color:#e4e6ea;white-space:pre;transform:scaleX(1.0429);transform-origin:0 50%;">HyperWalletInfo.js</span>
<span style="position:absolute;left:2147.8px;top:386.50px;font:400 12px/16px 'Liberation Sans',sans-serif;color:#8d919c;white-space:pre;transform:scaleX(1.0535);transform-origin:0 50%;">src/pag...</span>
<div style="position:absolute;left:2013px;top:410.75px;width:10.5px;height:10.5px;background:#f2c14e;border-radius:1px;"></div>
<span style="position:absolute;right:1816.7px;top:413.00px;font:700 7px/9px 'Liberation Sans',sans-serif;color:#2e2403;white-space:pre;letter-spacing:-.55px;">JS</span>
<span style="position:absolute;left:2032.3px;top:407.50px;font:400 13px/17px 'Liberation Sans',sans-serif;color:#e4e6ea;white-space:pre;transform:scaleX(0.9708);transform-origin:0 50%;">Logs.js</span>
<span style="position:absolute;left:2078.3px;top:408.50px;font:400 12px/16px 'Liberation Sans',sans-serif;color:#8d919c;white-space:pre;transform:scaleX(1.0135);transform-origin:0 50%;">src/pages/Seller/Sell...</span>
<div style="position:absolute;left:2013px;top:432.75px;width:10.5px;height:10.5px;background:#f2c14e;border-radius:1px;"></div>
<span style="position:absolute;right:1816.7px;top:435.00px;font:700 7px/9px 'Liberation Sans',sans-serif;color:#2e2403;white-space:pre;letter-spacing:-.55px;">JS</span>
<span style="position:absolute;left:2032.3px;top:429.50px;font:400 13px/17px 'Liberation Sans',sans-serif;color:#e4e6ea;white-space:pre;transform:scaleX(1.0109);transform-origin:0 50%;">CreateStakeholder.js</span>
<span style="position:absolute;left:2160.3px;top:430.50px;font:400 12px/16px 'Liberation Sans',sans-serif;color:#8d919c;white-space:pre;transform:scaleX(1.0829);transform-origin:0 50%;">src/p...</span>
<div style="position:absolute;left:2013px;top:454.75px;width:10.5px;height:10.5px;background:#f2c14e;border-radius:1px;"></div>
<span style="position:absolute;right:1816.7px;top:457.00px;font:700 7px/9px 'Liberation Sans',sans-serif;color:#2e2403;white-space:pre;letter-spacing:-.55px;">JS</span>
<span style="position:absolute;left:2032.3px;top:451.50px;font:400 13px/17px 'Liberation Sans',sans-serif;color:#e4e6ea;white-space:pre;transform:scaleX(1.0185);transform-origin:0 50%;">EditStakeholder.js</span>
<span style="position:absolute;left:2144.3px;top:452.50px;font:400 12px/16px 'Liberation Sans',sans-serif;color:#8d919c;white-space:pre;transform:scaleX(1.0535);transform-origin:0 50%;">src/pag...</span>
<span style="position:absolute;left:2162.7px;top:122.50px;font:400 11.5px/15px 'Liberation Sans',sans-serif;color:#f0675b;white-space:pre;transform:scaleX(0.9609);transform-origin:0 50%;">1, M</span>
<span style="position:absolute;left:2174.5px;top:343.00px;font:400 11.5px/15px 'Liberation Sans',sans-serif;color:#e8a64a;white-space:pre;">M</span>
<div style="position:absolute;left:1968px;top:477px;width:233px;height:1px;background:#30323a;"></div>
<svg style="position:absolute;left:1973px;top:485.2px;" width="10" height="6" viewBox="0 0 10 6"><path d="M1 1l4 4 4-4" fill="none" stroke="#b5b8c0" stroke-width="1.100"/></svg>
<span style="position:absolute;left:1988px;top:481.20px;font:700 11px/14px 'Liberation Sans',sans-serif;color:#e4e6ea;white-space:pre;transform:scaleX(0.9787);transform-origin:0 50%;">ODS-FRONT</span>
<svg style="position:absolute;left:1980px;top:503px;" width="16" height="13" viewBox="0 0 16 13"><path d="M.8 1.500h4.500l1.500 1.500H12v2" fill="none" stroke="#5cc9b8" stroke-width="1.400"/><path d="M.8 1.500v9.500H4" fill="none" stroke="#5cc9b8" stroke-width="1.400"/><rect x="5" y="5" width="10.500" height="7.500" rx="1" fill="#6b5bd6"/><path d="M8.500 7.200 7 8.700l1.500 1.500M12 7.200l1.500 1.500L12 10.200" fill="none" stroke="#fff" stroke-width=".9"/></svg>
<span style="position:absolute;left:2002px;top:501.10px;font:400 13px/17px 'Liberation Sans',sans-serif;color:#f0675b;white-space:pre;transform:scaleX(0.9514);transform-origin:0 50%;">src</span>
<div style="position:absolute;left:2176px;top:505.500px;width:8px;height:8px;border-radius:4px;background:#80413d"></div>
<svg style="position:absolute;left:1989px;top:525.4px;" width="15" height="12" viewBox="0 0 15 12"><path d="M1 1.500h4.500l1.500 1.500H14v8H1z" fill="none" stroke="#5cc9b8" stroke-width="1.500"/></svg>
<span style="position:absolute;left:2010px;top:522.90px;font:400 13px/17px 'Liberation Sans',sans-serif;color:#f0675b;white-space:pre;transform:scaleX(1.0307);transform-origin:0 50%;">components</span>
<div style="position:absolute;left:2176px;top:527.500px;width:8px;height:8px;border-radius:4px;background:#80413d"></div>
<div style="position:absolute;left:1968px;top:542px;width:233px;height:1px;background:#12141b;"></div>
<svg style="position:absolute;left:1997px;top:545.3px;" width="15" height="12" viewBox="0 0 15 12"><path d="M.5 1h5l1.500 1.500H14.500v9.500H.5z" fill="#4a5d68"/></svg>
<span style="position:absolute;left:2018px;top:542.80px;font:400 13px/17px 'Liberation Sans',sans-serif;color:#cfa44e;white-space:pre;transform:scaleX(0.9953);transform-origin:0 50%;">Common</span>
<svg style="position:absolute;left:1997px;top:567.3px;" width="15" height="12" viewBox="0 0 15 12"><path d="M.5 1h5l1.500 1.500H14.500v9.500H.5z" fill="#4a5d68"/></svg>
<span style="position:absolute;left:2018px;top:564.80px;font:400 13px/17px 'Liberation Sans',sans-serif;color:#e4e6ea;white-space:pre;transform:scaleX(0.9943);transform-origin:0 50%;">Customers</span>
<svg style="position:absolute;left:1997px;top:589.3px;" width="15" height="12" viewBox="0 0 15 12"><path d="M.5 1h5l1.500 1.500H14.500v9.500H.5z" fill="#4a5d68"/></svg>
<span style="position:absolute;left:2018px;top:586.80px;font:400 13px/17px 'Liberation Sans',sans-serif;color:#e4e6ea;white-space:pre;transform:scaleX(0.9983);transform-origin:0 50%;">Dashboard</span>
<svg style="position:absolute;left:1997px;top:611.3px;" width="15" height="12" viewBox="0 0 15 12"><path d="M.5 1h5l1.500 1.500H14.500v9.500H.5z" fill="#4a5d68"/></svg>
<span style="position:absolute;left:2018px;top:608.80px;font:400 13px/17px 'Liberation Sans',sans-serif;color:#e4e6ea;white-space:pre;transform:scaleX(1.0209);transform-origin:0 50%;">Dispute</span>
<svg style="position:absolute;left:1997px;top:633.3px;" width="15" height="12" viewBox="0 0 15 12"><path d="M.5 1h5l1.500 1.500H14.500v9.500H.5z" fill="#4a5d68"/></svg>
<span style="position:absolute;left:2018px;top:630.80px;font:400 13px/17px 'Liberation Sans',sans-serif;color:#e4e6ea;white-space:pre;transform:scaleX(0.9951);transform-origin:0 50%;">Employees</span>
<svg style="position:absolute;left:1997px;top:655.3px;" width="15" height="12" viewBox="0 0 15 12"><path d="M.5 1h5l1.500 1.500H14.500v9.500H.5z" fill="#4a5d68"/></svg>
<span style="position:absolute;left:2018px;top:652.80px;font:400 13px/17px 'Liberation Sans',sans-serif;color:#e4e6ea;white-space:pre;transform:scaleX(1.0193);transform-origin:0 50%;">Orders</span>
<svg style="position:absolute;left:1997px;top:677.3px;" width="15" height="12" viewBox="0 0 15 12"><path d="M.5 1h5l1.500 1.500H14.500v9.500H.5z" fill="#4a5d68"/></svg>
<span style="position:absolute;left:2018px;top:674.80px;font:400 13px/17px 'Liberation Sans',sans-serif;color:#e4e6ea;white-space:pre;transform:scaleX(1.0231);transform-origin:0 50%;">Products</span>
<svg style="position:absolute;left:1996px;top:699.3px;" width="15" height="12" viewBox="0 0 15 12"><path d="M1 1.500h4.500l1.500 1.500H14v8H1z" fill="none" stroke="#5cc9b8" stroke-width="1.500"/></svg>
<span style="position:absolute;left:2018px;top:696.80px;font:400 13px/17px 'Liberation Sans',sans-serif;color:#f0675b;white-space:pre;transform:scaleX(0.9925);transform-origin:0 50%;">Seller</span>
<svg style="position:absolute;left:2005px;top:721.3px;" width="15" height="12" viewBox="0 0 15 12"><path d="M.5 1h5l1.500 1.500H14.500v9.500H.5z" fill="#4a5d68"/></svg>
<span style="position:absolute;left:2026px;top:718.80px;font:400 13px/17px 'Liberation Sans',sans-serif;color:#e4e6ea;white-space:pre;transform:scaleX(1.0102);transform-origin:0 50%;">Comments</span>
<div style="position:absolute;left:1968px;top:738.3px;width:233px;height:22px;background:#262933;"></div>
<span style="position:absolute;left:2162.7px;top:741.80px;font:400 11.5px/15px 'Liberation Sans',sans-serif;color:#f0675b;white-space:pre;transform:scaleX(0.9609);transform-origin:0 50%;">1, M</span>
<div style="position:absolute;left:2007px;top:744.05px;width:10.5px;height:10.5px;background:#f2c14e;border-radius:1px;"></div>
<span style="position:absolute;right:1822.7px;top:746.30px;font:700 7px/9px 'Liberation Sans',sans-serif;color:#2e2403;white-space:pre;letter-spacing:-.55px;">JS</span>
<span style="position:absolute;left:2026px;top:740.80px;font:400 13px/17px 'Liberation Sans',sans-serif;color:#f0675b;white-space:pre;transform:scaleX(1.0146);transform-origin:0 50%;">BalanceAdjusmentC...</span>
<div style="position:absolute;left:2007px;top:766.05px;width:10.5px;height:10.5px;background:#f2c14e;border-radius:1px;"></div>
<span style="position:absolute;right:1822.7px;top:768.30px;font:700 7px/9px 'Liberation Sans',sans-serif;color:#2e2403;white-space:pre;letter-spacing:-.55px;">JS</span>
<span style="position:absolute;left:2026px;top:762.80px;font:400 13px/17px 'Liberation Sans',sans-serif;color:#e4e6ea;white-space:pre;transform:scaleX(0.9870);transform-origin:0 50%;">BalanceSection.js</span>
<div style="position:absolute;left:2007px;top:788.05px;width:10.5px;height:10.5px;background:#f2c14e;border-radius:1px;"></div>
<span style="position:absolute;right:1822.7px;top:790.30px;font:700 7px/9px 'Liberation Sans',sans-serif;color:#2e2403;white-space:pre;letter-spacing:-.55px;">JS</span>
<span style="position:absolute;left:2026px;top:784.80px;font:400 13px/17px 'Liberation Sans',sans-serif;color:#e4e6ea;white-space:pre;transform:scaleX(1.0114);transform-origin:0 50%;">CommentSection.js</span>
<div style="position:absolute;left:2007px;top:810.05px;width:10.5px;height:10.5px;background:#f2c14e;border-radius:1px;"></div>
<span style="position:absolute;right:1822.7px;top:812.30px;font:700 7px/9px 'Liberation Sans',sans-serif;color:#2e2403;white-space:pre;letter-spacing:-.55px;">JS</span>
<span style="position:absolute;left:2026px;top:806.80px;font:400 13px/17px 'Liberation Sans',sans-serif;color:#e4e6ea;white-space:pre;transform:scaleX(1.0264);transform-origin:0 50%;">HyperwalletUser.js</span>
<div style="position:absolute;left:2007px;top:832.05px;width:10.5px;height:10.5px;background:#f2c14e;border-radius:1px;"></div>
<span style="position:absolute;right:1822.7px;top:834.30px;font:700 7px/9px 'Liberation Sans',sans-serif;color:#2e2403;white-space:pre;letter-spacing:-.55px;">JS</span>
<span style="position:absolute;left:2026px;top:828.80px;font:400 13px/17px 'Liberation Sans',sans-serif;color:#e4e6ea;white-space:pre;transform:scaleX(1.0271);transform-origin:0 50%;">PayoutMethodSection.js</span>
<div style="position:absolute;left:2007px;top:854.05px;width:10.5px;height:10.5px;background:#f2c14e;border-radius:1px;"></div>
<span style="position:absolute;right:1822.7px;top:856.30px;font:700 7px/9px 'Liberation Sans',sans-serif;color:#2e2403;white-space:pre;letter-spacing:-.55px;">JS</span>
<span style="position:absolute;left:2026px;top:850.80px;font:400 13px/17px 'Liberation Sans',sans-serif;color:#e4e6ea;white-space:pre;transform:scaleX(1.0345);transform-origin:0 50%;">SellerInformationForm.js</span>
<div style="position:absolute;left:2007px;top:876.05px;width:10.5px;height:10.5px;background:#f2c14e;border-radius:1px;"></div>
<span style="position:absolute;right:1822.7px;top:878.30px;font:700 7px/9px 'Liberation Sans',sans-serif;color:#2e2403;white-space:pre;letter-spacing:-.55px;">JS</span>
<span style="position:absolute;left:2026px;top:872.80px;font:400 13px/17px 'Liberation Sans',sans-serif;color:#e4e6ea;white-space:pre;transform:scaleX(1.0119);transform-origin:0 50%;">StakeHolderTable.js</span>
<div style="position:absolute;left:2007px;top:898.05px;width:10.5px;height:10.5px;background:#f2c14e;border-radius:1px;"></div>
<span style="position:absolute;right:1822.7px;top:900.30px;font:700 7px/9px 'Liberation Sans',sans-serif;color:#2e2403;white-space:pre;letter-spacing:-.55px;">JS</span>
<span style="position:absolute;left:2026px;top:894.80px;font:400 13px/17px 'Liberation Sans',sans-serif;color:#e4e6ea;white-space:pre;transform:scaleX(1.0258);transform-origin:0 50%;">TransactionAdjustmentSec...</span>
<svg style="position:absolute;left:1997px;top:919.3px;" width="15" height="12" viewBox="0 0 15 12"><path d="M.5 1h5l1.500 1.500H14.500v9.500H.5z" fill="#4a5d68"/></svg>
<span style="position:absolute;left:2018px;top:916.80px;font:400 13px/17px 'Liberation Sans',sans-serif;color:#e4e6ea;white-space:pre;transform:scaleX(0.8555);transform-origin:0 50%;">SEO</span>
<svg style="position:absolute;left:1997px;top:941.3px;" width="15" height="12" viewBox="0 0 15 12"><path d="M.5 1h5l1.500 1.500H14.500v9.500H.5z" fill="#4a5d68"/></svg>
<span style="position:absolute;left:2018px;top:938.80px;font:400 13px/17px 'Liberation Sans',sans-serif;color:#e4e6ea;white-space:pre;transform:scaleX(0.9629);transform-origin:0 50%;">Tasks</span>
<svg style="position:absolute;left:1988px;top:963.3px;" width="15" height="12" viewBox="0 0 15 12"><path d="M.5 1h5l1.500 1.500H14.500v9.500H.5z" fill="#4a5d68"/></svg>
<span style="position:absolute;left:2010px;top:960.80px;font:400 13px/17px 'Liberation Sans',sans-serif;color:#e4e6ea;white-space:pre;transform:scaleX(1.0015);transform-origin:0 50%;">hoc</span>
<svg style="position:absolute;left:1988px;top:985.3px;" width="15" height="12" viewBox="0 0 15 12"><path d="M.5 1h5l1.500 1.500H14.500v9.500H.5z" fill="#4a5d68"/></svg>
<span style="position:absolute;left:2010px;top:982.80px;font:400 13px/17px 'Liberation Sans',sans-serif;color:#e4e6ea;white-space:pre;transform:scaleX(1.0086);transform-origin:0 50%;">hooks</span>
<svg style="position:absolute;left:1988px;top:1007.3px;" width="15" height="12" viewBox="0 0 15 12"><path d="M.5 1h5l1.500 1.500H14.500v9.500H.5z" fill="#4a5d68"/></svg>
<span style="position:absolute;left:2010px;top:1004.80px;font:400 13px/17px 'Liberation Sans',sans-serif;color:#e4e6ea;white-space:pre;transform:scaleX(1.0315);transform-origin:0 50%;">layouts</span>
<div style="position:absolute;left:2176px;top:547.500px;width:8px;height:8px;border-radius:4px;background:#7d6a2c"></div>
<div style="position:absolute;left:2176px;top:701.500px;width:8px;height:8px;border-radius:4px;background:#80413d"></div>
<div style="position:absolute;left:2001px;top:716px;width:1px;height:199px;background:#2a2d36;"></div>
<div style="position:absolute;left:1968px;top:1014px;width:233px;height:44px;background:#04050b;"></div>
<div style="position:absolute;left:1968px;top:1014px;width:233px;height:1px;background:#30323a;"></div>
<div style="position:absolute;left:1968px;top:1036px;width:233px;height:1px;background:#30323a;"></div>
<svg style="position:absolute;left:1975px;top:1020.5px;" width="6" height="10" viewBox="0 0 6 10"><path d="M1 1l4 4-4 4" fill="none" stroke="#b5b8c0" stroke-width="1.100"/></svg>
<span style="position:absolute;left:1988px;top:1018.50px;font:700 11px/14px 'Liberation Sans',sans-serif;color:#e4e6ea;white-space:pre;transform:scaleX(0.9735);transform-origin:0 50%;">OUTLINE</span>
<svg style="position:absolute;left:1975px;top:1042.5px;" width="6" height="10" viewBox="0 0 6 10"><path d="M1 1l4 4-4 4" fill="none" stroke="#b5b8c0" stroke-width="1.100"/></svg>
<span style="position:absolute;left:1988px;top:1040.50px;font:700 11px/14px 'Liberation Sans',sans-serif;color:#e4e6ea;white-space:pre;transform:scaleX(0.9933);transform-origin:0 50%;">TIMELINE</span>
<div style="position:absolute;left:2202px;top:62px;width:1638px;height:34px;background:#04050b;"></div>
<div style="position:absolute;left:2202px;top:96px;width:1638px;height:1px;background:#23262f;"></div>
<div style="position:absolute;left:2395px;top:62px;width:1px;height:34px;background:#272a33;"></div>
<div style="position:absolute;left:2215px;top:74.25px;width:10.5px;height:10.5px;background:#f2c14e;border-radius:1px;"></div>
<span style="position:absolute;right:1614.6999999999998px;top:76.50px;font:700 7px/9px 'Liberation Sans',sans-serif;color:#2e2403;white-space:pre;letter-spacing:-.55px;">JS</span>
<span style="position:absolute;left:2234px;top:71.00px;font:400 13px/17px 'Liberation Sans',sans-serif;color:#f0675b;white-space:pre;transform:scaleX(1.0026);transform-origin:0 50%;">Edit.js</span>
<div style="position:absolute;left:2396px;top:62px;width:280px;height:35px;background:#0d1017;"></div>
<div style="position:absolute;left:2396px;top:62px;width:280px;height:1px;background:#f0675b;"></div>
<div style="position:absolute;left:2675px;top:62px;width:1px;height:34px;background:#272a33;"></div>
<div style="position:absolute;left:2409.7px;top:74.25px;width:10.5px;height:10.5px;background:#f2c14e;border-radius:1px;"></div>
<span style="position:absolute;right:1420.0px;top:76.50px;font:700 7px/9px 'Liberation Sans',sans-serif;color:#2e2403;white-space:pre;letter-spacing:-.55px;">JS</span>
<span style="position:absolute;left:2428.7px;top:71.00px;font:400 13px/17px 'Liberation Sans',sans-serif;color:#f0675b;white-space:pre;transform:scaleX(1.0180);transform-origin:0 50%;">BalanceAdjusmentComponent.js</span>
<div style="position:absolute;left:2814px;top:62px;width:1px;height:34px;background:#272a33;"></div>
<div style="position:absolute;left:2691px;top:74.25px;width:10.5px;height:10.5px;background:#f2c14e;border-radius:1px;"></div>
<span style="position:absolute;right:1138.6999999999998px;top:76.50px;font:700 7px/9px 'Liberation Sans',sans-serif;color:#2e2403;white-space:pre;letter-spacing:-.55px;">JS</span>
<span style="position:absolute;left:2710px;top:71.00px;font:400 13px/17px 'Liberation Sans',sans-serif;color:#a9adb8;white-space:pre;transform:scaleX(0.9562);transform-origin:0 50%;font-style:italic;">Edit.js (Index)</span>
<div style="position:absolute;left:2969px;top:62px;width:1px;height:34px;background:#272a33;"></div>
<div style="position:absolute;left:2828px;top:74.25px;width:10.5px;height:10.5px;background:#f2c14e;border-radius:1px;"></div>
<span style="position:absolute;right:1001.6999999999998px;top:76.50px;font:700 7px/9px 'Liberation Sans',sans-serif;color:#2e2403;white-space:pre;letter-spacing:-.55px;">JS</span>
<span style="position:absolute;left:2847px;top:71.00px;font:400 13px/17px 'Liberation Sans',sans-serif;color:#a9adb8;white-space:pre;transform:scaleX(1.0111);transform-origin:0 50%;">userAgentLog.js</span>
<div style="position:absolute;left:3147px;top:62px;width:1px;height:34px;background:#272a33;"></div>
<div style="position:absolute;left:2984px;top:74.25px;width:10.5px;height:10.5px;background:#f2c14e;border-radius:1px;"></div>
<span style="position:absolute;right:845.6999999999998px;top:76.50px;font:700 7px/9px 'Liberation Sans',sans-serif;color:#2e2403;white-space:pre;letter-spacing:-.55px;">JS</span>
<span style="position:absolute;left:3003px;top:71.00px;font:400 13px/17px 'Liberation Sans',sans-serif;color:#a9adb8;white-space:pre;transform:scaleX(1.0162);transform-origin:0 50%;">StakeHolderTable.js</span>
<div style="position:absolute;left:3319px;top:62px;width:1px;height:34px;background:#272a33;"></div>
<div style="position:absolute;left:3162.6px;top:74.25px;width:10.5px;height:10.5px;background:#f2c14e;border-radius:1px;"></div>
<span style="position:absolute;right:667.0999999999999px;top:76.50px;font:700 7px/9px 'Liberation Sans',sans-serif;color:#2e2403;white-space:pre;letter-spacing:-.55px;">JS</span>
<span style="position:absolute;left:3181.6px;top:71.00px;font:400 13px/17px 'Liberation Sans',sans-serif;color:#a9adb8;white-space:pre;transform:scaleX(1.0264);transform-origin:0 50%;">HyperwalletUser.js</span>
<div style="position:absolute;left:3494px;top:62px;width:1px;height:34px;background:#272a33;"></div>
<div style="position:absolute;left:3334px;top:74.25px;width:10.5px;height:10.5px;background:#f2c14e;border-radius:1px;"></div>
<span style="position:absolute;right:495.6999999999998px;top:76.50px;font:700 7px/9px 'Liberation Sans',sans-serif;color:#2e2403;white-space:pre;letter-spacing:-.55px;">JS</span>
<span style="position:absolute;left:3353px;top:71.00px;font:400 13px/17px 'Liberation Sans',sans-serif;color:#a9adb8;white-space:pre;transform:scaleX(1.0158);transform-origin:0 50%;">CommentSection.js</span>
<div style="position:absolute;left:3509px;top:74.25px;width:10.5px;height:10.5px;background:#f2c14e;border-radius:1px;"></div>
<span style="position:absolute;right:320.6999999999998px;top:76.50px;font:700 7px/9px 'Liberation Sans',sans-serif;color:#2e2403;white-space:pre;letter-spacing:-.55px;">JS</span>
<span style="position:absolute;left:3528px;top:71.00px;font:400 13px/17px 'Liberation Sans',sans-serif;color:#a9adb8;white-space:pre;transform:scaleX(0.9918);transform-origin:0 50%;">BalanceSection.js</span>
<span style="position:absolute;left:2276.5px;top:72.00px;font:400 12px/16px 'Liberation Sans',sans-serif;color:#8f4a45;white-space:pre;transform:scaleX(1.0038);transform-origin:0 50%;">.../SellerStores</span>
<span style="position:absolute;left:2362px;top:71.50px;font:400 12px/16px 'Liberation Sans',sans-serif;color:#f0675b;white-space:pre;">1</span>
<span style="position:absolute;left:2626px;top:71.50px;font:400 12px/16px 'Liberation Sans',sans-serif;color:#f0675b;white-space:pre;transform:scaleX(0.9424);transform-origin:0 50%;">1, M</span>
<svg style="position:absolute;left:2657px;top:75px;" width="10" height="10" viewBox="0 0 10 10"><path d="M1 1l8 8M9 1 1 9" stroke="#e4e6ea" stroke-width="1.200"/></svg>
<svg style="position:absolute;left:3652px;top:70.5px;" width="18" height="18" viewBox="0 0 18 18"><circle cx="5" cy="4" r="1.800" fill="none" stroke="#8b8f9a" stroke-width="1.200"/><circle cx="13" cy="14.500" r="1.800" fill="none" stroke="#8b8f9a" stroke-width="1.200"/><path d="M5 6v9M13 12.500V6.500c0-2-2-2.500-4-2.500M10.500 2 8.500 4l2 2M3 13l2 2 2-2" fill="none" stroke="#8b8f9a" stroke-width="1.200"/></svg>
<svg style="position:absolute;left:3678px;top:70.5px;" width="18" height="18" viewBox="0 0 18 18"><circle cx="10.500" cy="9" r="3.800" fill="none" stroke="#8b8f9a" stroke-width="1.200"/><path d="M14.300 9H17M1 9h5.500M3.500 6.500 1 9l2.500 2.500" fill="none" stroke="#8b8f9a" stroke-width="1.200"/></svg>
<svg style="position:absolute;left:3704.5px;top:70.5px;" width="18" height="18" viewBox="0 0 18 18"><circle cx="9" cy="9" r="3.800" fill="none" stroke="#8b8f9a" stroke-width="1.200"/><path d="M1 9h4.200M12.800 9H17" fill="none" stroke="#8b8f9a" stroke-width="1.200"/></svg>
<svg style="position:absolute;left:3730px;top:70.5px;" width="18" height="18" viewBox="0 0 18 18"><circle cx="7.500" cy="9" r="3.800" fill="none" stroke="#8b8f9a" stroke-width="1.200"/><path d="M1 9h2.700M11.300 9H17M14.500 6.500 17 9l-2.500 2.500" fill="none" stroke="#8b8f9a" stroke-width="1.200"/></svg>
<svg style="position:absolute;left:3756px;top:70.5px;" width="18" height="18" viewBox="0 0 18 18"><circle cx="9" cy="9" r="7" fill="none" stroke="#e4e6ea" stroke-width="1.400"/><circle cx="7.500" cy="5.800" r="1.300" fill="#e4e6ea"/><circle cx="7.500" cy="12.500" r="1.300" fill="#e4e6ea"/><circle cx="11.500" cy="9" r="1.300" fill="#e4e6ea"/><path d="M7.500 6v6.500M11.500 9c0 2-4 1.500-4 3.500" fill="none" stroke="#e4e6ea" stroke-width="1.100"/></svg>
<svg style="position:absolute;left:3782.5px;top:70.5px;" width="18" height="18" viewBox="0 0 18 18"><rect x="3" y="3" width="12" height="12" rx="1" fill="none" stroke="#8b8f9a" stroke-width="1.200"/><path d="M9 3v12" fill="none" stroke="#8b8f9a" stroke-width="1.200"/></svg>
<svg style="position:absolute;left:3808px;top:70.5px;" width="18" height="18" viewBox="0 0 18 18"><circle cx="4" cy="9" r="1.100" fill="#8b8f9a"/><circle cx="9" cy="9" r="1.100" fill="#8b8f9a"/><circle cx="14" cy="9" r="1.100" fill="#8b8f9a"/></svg>
<span style="position:absolute;left:2218px;top:99.90px;font:400 13px/17px 'Liberation Sans',sans-serif;color:#8d919c;white-space:pre;transform:scaleX(0.9802);transform-origin:0 50%;">src</span>
<svg style="position:absolute;left:2241px;top:103.5px;" width="6" height="10" viewBox="0 0 6 10"><path d="M1 1l4 4-4 4" fill="none" stroke="#6a6e79" stroke-width="1.100"/></svg>
<span style="position:absolute;left:2251px;top:99.90px;font:400 13px/17px 'Liberation Sans',sans-serif;color:#8d919c;white-space:pre;transform:scaleX(1.0307);transform-origin:0 50%;">components</span>
<svg style="position:absolute;left:2330px;top:103.5px;" width="6" height="10" viewBox="0 0 6 10"><path d="M1 1l4 4-4 4" fill="none" stroke="#6a6e79" stroke-width="1.100"/></svg>
<span style="position:absolute;left:2340px;top:99.90px;font:400 13px/17px 'Liberation Sans',sans-serif;color:#8d919c;white-space:pre;transform:scaleX(1.0075);transform-origin:0 50%;">Seller</span>
<svg style="position:absolute;left:2380px;top:103.5px;" width="6" height="10" viewBox="0 0 6 10"><path d="M1 1l4 4-4 4" fill="none" stroke="#6a6e79" stroke-width="1.100"/></svg>
<div style="position:absolute;left:2392.5px;top:103.25px;width:10.5px;height:10.5px;background:#f2c14e;border-radius:1px;"></div>
<span style="position:absolute;right:1437.1999999999998px;top:105.50px;font:700 7px/9px 'Liberation Sans',sans-serif;color:#2e2403;white-space:pre;letter-spacing:-.55px;">JS</span>
<span style="position:absolute;left:2411.8px;top:99.90px;font:400 13px/17px 'Liberation Sans',sans-serif;color:#8d919c;white-space:pre;transform:scaleX(1.0180);transform-origin:0 50%;">BalanceAdjusmentComponent.js</span>
<svg style="position:absolute;left:2609px;top:103.5px;" width="6" height="10" viewBox="0 0 6 10"><path d="M1 1l4 4-4 4" fill="none" stroke="#6a6e79" stroke-width="1.100"/></svg>
<svg style="position:absolute;left:2620px;top:102.5px;" width="16" height="12" viewBox="0 0 16 12"><path d="M3.500 1.500H1.500v9h2M12.500 1.500h2v9h-2" fill="none" stroke="#e08a3c" stroke-width="1.300"/><circle cx="6" cy="6" r="2" fill="none" stroke="#e08a3c" stroke-width="1.100"/><circle cx="10" cy="6" r="2" fill="none" stroke="#e08a3c" stroke-width="1.100"/></svg>
<span style="position:absolute;left:2639px;top:99.90px;font:400 13px/17px 'Liberation Sans',sans-serif;color:#8d919c;white-space:pre;transform:scaleX(1.0193);transform-origin:0 50%;">BalanceAdjusmentComponent</span>
<div style="position:absolute;left:2272px;top:537.5px;width:1440px;height:19px;background:#161922;"></div>
<div style="position:absolute;left:2202px;top:138px;width:1624px;height:1px;background:#191c25;"></div>
<div style="position:absolute;left:2202px;top:139px;width:1510px;height:4px;background:linear-gradient(180deg,rgba(0,0,0,.35),rgba(0,0,0,0));"></div>
<div style="position:absolute;left:2272.2px;top:138.5px;width:1px;height:588.7px;background:#22252e;"></div>
<div style="position:absolute;left:2306.0px;top:195.2px;width:1px;height:494px;background:#22252e;"></div>
<div style="position:absolute;left:2339.7999999999997px;top:423.2px;width:1px;height:133px;background:#22252e;"></div>
<div style="position:absolute;left:2339.7999999999997px;top:632.2px;width:1px;height:19px;background:#22252e;"></div>
<span style="position:absolute;right:1594.3000000000002px;top:120.10px;font:400 14.5px/19px 'Liberation Mono',monospace;color:#7d818c;white-space:pre;letter-spacing:-.25px;">7</span>
<span style="position:absolute;left:2272.2px;top:120.10px;font:400 15px/19px 'Liberation Mono',monospace;white-space:pre;letter-spacing:-0.5515px"><span style="color:#f0675b">const</span><span style="color:#c9ccd3"> </span><span style="color:#e57ceb">BalanceAdjusmentComponent</span><span style="color:#c9ccd3"> </span><span style="color:#f0675b">=</span><span style="color:#c9ccd3"> </span><span style="color:#8fbaf3">(</span><span style="color:#3ddc84">{</span></span>
<span style="position:absolute;right:1594.3000000000002px;top:139.50px;font:400 14.5px/19px 'Liberation Mono',monospace;color:#6c7387;white-space:pre;letter-spacing:-.25px;">50</span>
<span style="position:absolute;left:2272.2px;top:139.50px;font:400 15px/19px 'Liberation Mono',monospace;white-space:pre;letter-spacing:-0.5515px"><span style="color:#c9ccd3">    </span><span style="color:#3ddc84">}</span></span>
<span style="position:absolute;right:1594.3000000000002px;top:158.50px;font:400 14.5px/19px 'Liberation Mono',monospace;color:#6c7387;white-space:pre;letter-spacing:-.25px;">51</span>
<span style="position:absolute;left:2272.2px;top:158.50px;font:400 15px/19px 'Liberation Mono',monospace;white-space:pre;letter-spacing:-0.5515px"><span style="color:#c9ccd3">  </span><span style="color:#f0675b">return</span><span style="color:#c9ccd3"> </span><span style="color:#3ddc84">(</span></span>
<span style="position:absolute;right:1594.3000000000002px;top:177.50px;font:400 14.5px/19px 'Liberation Mono',monospace;color:#6c7387;white-space:pre;letter-spacing:-.25px;">52</span>
<span style="position:absolute;left:2272.2px;top:177.50px;font:400 15px/19px 'Liberation Mono',monospace;white-space:pre;letter-spacing:-0.5515px"><span style="color:#c9ccd3">    </span><span style="color:#c9ccd3">&lt;</span><span style="color:#4ade80">div</span><span style="color:#c9ccd3"> </span><span style="color:#8fbaf3">className</span><span style="color:#f0675b">=</span><span style="color:#dde0e6">&quot;w-50&quot;</span><span style="color:#c9ccd3">&gt;</span></span>
<span style="position:absolute;right:1594.3000000000002px;top:196.50px;font:400 14.5px/19px 'Liberation Mono',monospace;color:#6c7387;white-space:pre;letter-spacing:-.25px;">53</span>
<span style="position:absolute;left:2272.2px;top:196.50px;font:400 15px/19px 'Liberation Mono',monospace;white-space:pre;letter-spacing:-0.5515px"><span style="color:#c9ccd3">      </span><span style="color:#c9ccd3">&lt;</span><span style="color:#4ade80">h4</span><span style="color:#c9ccd3">&gt;</span><span style="color:#dde0e6">Balance Adjustment</span><span style="color:#c9ccd3">&lt;/</span><span style="color:#4ade80">h4</span><span style="color:#c9ccd3">&gt;</span></span>
<span style="position:absolute;right:1594.3000000000002px;top:215.50px;font:400 14.5px/19px 'Liberation Mono',monospace;color:#6c7387;white-space:pre;letter-spacing:-.25px;">54</span>
<span style="position:absolute;left:2272.2px;top:215.50px;font:400 15px/19px 'Liberation Mono',monospace;white-space:pre;letter-spacing:-0.5515px"><span style="color:#c9ccd3">      </span><span style="color:#c9ccd3">&lt;</span><span style="color:#4ade80">PrimaryInput</span></span>
<span style="position:absolute;right:1594.3000000000002px;top:234.50px;font:400 14.5px/19px 'Liberation Mono',monospace;color:#6c7387;white-space:pre;letter-spacing:-.25px;">55</span>
<span style="position:absolute;left:2272.2px;top:234.50px;font:400 15px/19px 'Liberation Mono',monospace;white-space:pre;letter-spacing:-0.5515px"><span style="color:#c9ccd3">        </span><span style="color:#8fbaf3">label</span><span style="color:#f0675b">=</span><span style="color:#f2b632">{</span><span style="color:#dde0e6">&quot;Transaction Id&quot;</span><span style="color:#f2b632">}</span></span>
<span style="position:absolute;right:1594.3000000000002px;top:253.50px;font:400 14.5px/19px 'Liberation Mono',monospace;color:#6c7387;white-space:pre;letter-spacing:-.25px;">56</span>
<span style="position:absolute;left:2272.2px;top:253.50px;font:400 15px/19px 'Liberation Mono',monospace;white-space:pre;letter-spacing:-0.5515px"><span style="color:#c9ccd3">        </span><span style="color:#8fbaf3">placeholder</span><span style="color:#f0675b">=</span><span style="color:#f2b632">{</span><span style="color:#dde0e6">&quot;Enter Transaction Id&quot;</span><span style="color:#f2b632">}</span></span>
<span style="position:absolute;right:1594.3000000000002px;top:272.50px;font:400 14.5px/19px 'Liberation Mono',monospace;color:#6c7387;white-space:pre;letter-spacing:-.25px;">57</span>
<span style="position:absolute;left:2272.2px;top:272.50px;font:400 15px/19px 'Liberation Mono',monospace;white-space:pre;letter-spacing:-0.5515px"><span style="color:#c9ccd3">        </span><span style="color:#8fbaf3">name</span><span style="color:#f0675b">=</span><span style="color:#dde0e6">&quot;transaction_id&quot;</span></span>
<span style="position:absolute;right:1594.3000000000002px;top:291.50px;font:400 14.5px/19px 'Liberation Mono',monospace;color:#6c7387;white-space:pre;letter-spacing:-.25px;">58</span>
<span style="position:absolute;left:2272.2px;top:291.50px;font:400 15px/19px 'Liberation Mono',monospace;white-space:pre;letter-spacing:-0.5515px"><span style="color:#c9ccd3">        </span><span style="color:#8fbaf3">isRequired</span><span style="color:#f0675b">=</span><span style="color:#f2b632">{</span><span style="color:#8fbaf3">true</span><span style="color:#f2b632">}</span></span>
<span style="position:absolute;right:1594.3000000000002px;top:310.50px;font:400 14.5px/19px 'Liberation Mono',monospace;color:#6c7387;white-space:pre;letter-spacing:-.25px;">59</span>
<span style="position:absolute;left:2272.2px;top:310.50px;font:400 15px/19px 'Liberation Mono',monospace;white-space:pre;letter-spacing:-0.5515px"><span style="color:#c9ccd3">        </span><span style="color:#8fbaf3">handleChange</span><span style="color:#f0675b">=</span><span style="color:#f2b632">{</span><span style="color:#e57ceb">handleChange</span><span style="color:#f2b632">}</span></span>
<span style="position:absolute;right:1594.3000000000002px;top:329.50px;font:400 14.5px/19px 'Liberation Mono',monospace;color:#6c7387;white-space:pre;letter-spacing:-.25px;">60</span>
<span style="position:absolute;left:2272.2px;top:329.50px;font:400 15px/19px 'Liberation Mono',monospace;white-space:pre;letter-spacing:-0.5515px"><span style="color:#c9ccd3">        </span><span style="color:#8fbaf3">value</span><span style="color:#f0675b">=</span><span style="color:#f2b632">{</span><span style="color:#8fbaf3">fields</span><span style="color:#dde0e6">?.transaction_id</span><span style="color:#f2b632">}</span></span>
<span style="position:absolute;right:1594.3000000000002px;top:348.50px;font:400 14.5px/19px 'Liberation Mono',monospace;color:#6c7387;white-space:pre;letter-spacing:-.25px;">61</span>
<span style="position:absolute;left:2272.2px;top:348.50px;font:400 15px/19px 'Liberation Mono',monospace;white-space:pre;letter-spacing:-0.5515px"><span style="color:#c9ccd3">        </span><span style="color:#8fbaf3">type</span><span style="color:#f0675b">=</span><span style="color:#f2b632">{</span><span style="color:#dde0e6">&quot;number&quot;</span><span style="color:#f2b632">}</span></span>
<span style="position:absolute;right:1594.3000000000002px;top:367.50px;font:400 14.5px/19px 'Liberation Mono',monospace;color:#6c7387;white-space:pre;letter-spacing:-.25px;">62</span>
<span style="position:absolute;left:2272.2px;top:367.50px;font:400 15px/19px 'Liberation Mono',monospace;white-space:pre;letter-spacing:-0.5515px"><span style="color:#c9ccd3">      </span><span style="color:#c9ccd3">/&gt;</span></span>
<span style="position:absolute;right:1594.3000000000002px;top:386.50px;font:400 14.5px/19px 'Liberation Mono',monospace;color:#6c7387;white-space:pre;letter-spacing:-.25px;">63</span>
<span style="position:absolute;left:2272.2px;top:386.50px;font:400 15px/19px 'Liberation Mono',monospace;white-space:pre;letter-spacing:-0.5515px"><span style="color:#c9ccd3">      </span><span style="color:#c9ccd3">&lt;</span><span style="color:#4ade80">div</span><span style="color:#c9ccd3"> </span><span style="color:#8fbaf3">className</span><span style="color:#f0675b">=</span><span style="color:#dde0e6">&quot;mt-4&quot;</span><span style="color:#c9ccd3">&gt;</span></span>
<span style="position:absolute;right:1594.3000000000002px;top:405.50px;font:400 14.5px/19px 'Liberation Mono',monospace;color:#6c7387;white-space:pre;letter-spacing:-.25px;">64</span>
<span style="position:absolute;left:2272.2px;top:405.50px;font:400 15px/19px 'Liberation Mono',monospace;white-space:pre;letter-spacing:-0.5515px"><span style="color:#c9ccd3">        </span><span style="color:#c9ccd3">&lt;</span><span style="color:#4ade80">PrimaryInput</span></span>
<span style="position:absolute;right:1594.3000000000002px;top:424.50px;font:400 14.5px/19px 'Liberation Mono',monospace;color:#6c7387;white-space:pre;letter-spacing:-.25px;">65</span>
<span style="position:absolute;left:2272.2px;top:424.50px;font:400 15px/19px 'Liberation Mono',monospace;white-space:pre;letter-spacing:-0.5515px"><span style="color:#c9ccd3">          </span><span style="color:#8fbaf3">label</span><span style="color:#f0675b">=</span><span style="color:#f2b632">{</span><span style="color:#dde0e6">&quot;Balance&quot;</span><span style="color:#f2b632">}</span></span>
<span style="position:absolute;right:1594.3000000000002px;top:443.50px;font:400 14.5px/19px 'Liberation Mono',monospace;color:#6c7387;white-space:pre;letter-spacing:-.25px;">66</span>
<span style="position:absolute;left:2272.2px;top:443.50px;font:400 15px/19px 'Liberation Mono',monospace;white-space:pre;letter-spacing:-0.5515px"><span style="color:#c9ccd3">          </span><span style="color:#8fbaf3">placeholder</span><span style="color:#f0675b">=</span><span style="color:#f2b632">{</span><span style="color:#dde0e6">&quot;Enter Balance&quot;</span><span style="color:#f2b632">}</span></span>
<span style="position:absolute;right:1594.3000000000002px;top:462.50px;font:400 14.5px/19px 'Liberation Mono',monospace;color:#6c7387;white-space:pre;letter-spacing:-.25px;">67</span>
<span style="position:absolute;left:2272.2px;top:462.50px;font:400 15px/19px 'Liberation Mono',monospace;white-space:pre;letter-spacing:-0.5515px"><span style="color:#c9ccd3">          </span><span style="color:#8fbaf3">name</span><span style="color:#f0675b">=</span><span style="color:#f2b632">{</span><span style="color:#dde0e6">&quot;balance&quot;</span><span style="color:#f2b632">}</span></span>
<span style="position:absolute;right:1594.3000000000002px;top:481.50px;font:400 14.5px/19px 'Liberation Mono',monospace;color:#6c7387;white-space:pre;letter-spacing:-.25px;">68</span>
<span style="position:absolute;left:2272.2px;top:481.50px;font:400 15px/19px 'Liberation Mono',monospace;white-space:pre;letter-spacing:-0.5515px"><span style="color:#c9ccd3">          </span><span style="color:#8fbaf3">isRequired</span><span style="color:#f0675b">=</span><span style="color:#f2b632">{</span><span style="color:#8fbaf3">true</span><span style="color:#f2b632">}</span></span>
<span style="position:absolute;right:1594.3000000000002px;top:500.50px;font:400 14.5px/19px 'Liberation Mono',monospace;color:#6c7387;white-space:pre;letter-spacing:-.25px;">69</span>
<span style="position:absolute;left:2272.2px;top:500.50px;font:400 15px/19px 'Liberation Mono',monospace;white-space:pre;letter-spacing:-0.5515px"><span style="color:#c9ccd3">          </span><span style="color:#8fbaf3">handleChange</span><span style="color:#f0675b">=</span><span style="color:#f2b632">{</span><span style="color:#e57ceb">handleChange</span><span style="color:#f2b632">}</span></span>
<span style="position:absolute;right:1594.3000000000002px;top:519.50px;font:400 14.5px/19px 'Liberation Mono',monospace;color:#6c7387;white-space:pre;letter-spacing:-.25px;">70</span>
<span style="position:absolute;left:2272.2px;top:519.50px;font:400 15px/19px 'Liberation Mono',monospace;white-space:pre;letter-spacing:-0.5515px"><span style="color:#c9ccd3">          </span><span style="color:#8fbaf3">type</span><span style="color:#f0675b">=</span><span style="color:#f2b632">{</span><span style="color:#dde0e6">&quot;number&quot;</span><span style="color:#f2b632">}</span></span>
<span style="position:absolute;right:1594.3000000000002px;top:538.50px;font:400 14.5px/19px 'Liberation Mono',monospace;color:#e4e6ea;white-space:pre;letter-spacing:-.25px;">71</span>
<span style="position:absolute;left:2272.2px;top:538.50px;font:400 15px/19px 'Liberation Mono',monospace;white-space:pre;letter-spacing:-0.5515px"><span style="color:#c9ccd3">          </span><span style="color:#8fbaf3">value</span><span style="color:#f0675b">=</span><span style="color:#f2b632">{</span><span style="color:#8fbaf3">fields</span><span style="color:#dde0e6">?.balance</span><span style="color:#c9ccd3"> </span><span style="color:#f0675b">||</span><span style="color:#c9ccd3"> </span><span style="color:#b9bcc4">&#x27;&#x27;</span><span style="color:#f2b632">}</span><span style="color:#c9ccd3">      </span><span style="color:#4a4e5a">You, 1 second ago • Uncommitted changes</span></span>
<span style="position:absolute;right:1594.3000000000002px;top:557.50px;font:400 14.5px/19px 'Liberation Mono',monospace;color:#6c7387;white-space:pre;letter-spacing:-.25px;">72</span>
<span style="position:absolute;left:2272.2px;top:557.50px;font:400 15px/19px 'Liberation Mono',monospace;white-space:pre;letter-spacing:-0.5515px"><span style="color:#c9ccd3">        </span><span style="color:#c9ccd3">/&gt;</span></span>
<span style="position:absolute;right:1594.3000000000002px;top:576.50px;font:400 14.5px/19px 'Liberation Mono',monospace;color:#6c7387;white-space:pre;letter-spacing:-.25px;">73</span>
<span style="position:absolute;left:2272.2px;top:576.50px;font:400 15px/19px 'Liberation Mono',monospace;white-space:pre;letter-spacing:-0.5515px"><span style="color:#c9ccd3">      </span><span style="color:#c9ccd3">&lt;/</span><span style="color:#4ade80">div</span><span style="color:#c9ccd3">&gt;</span></span>
<span style="position:absolute;right:1594.3000000000002px;top:595.50px;font:400 14.5px/19px 'Liberation Mono',monospace;color:#6c7387;white-space:pre;letter-spacing:-.25px;">74</span>
<span style="position:absolute;left:2272.2px;top:595.50px;font:400 15px/19px 'Liberation Mono',monospace;white-space:pre;letter-spacing:-0.5515px"><span style="color:#c9ccd3">      </span><span style="color:#c9ccd3">&lt;</span><span style="color:#4ade80">div</span><span style="color:#c9ccd3"> </span><span style="color:#8fbaf3">className</span><span style="color:#f0675b">=</span><span style="color:#dde0e6">&quot;d-flex justify-content-end mt-4&quot;</span><span style="color:#c9ccd3">&gt;</span></span>
<span style="position:absolute;right:1594.3000000000002px;top:614.50px;font:400 14.5px/19px 'Liberation Mono',monospace;color:#6c7387;white-space:pre;letter-spacing:-.25px;">75</span>
<span style="position:absolute;left:2272.2px;top:614.50px;font:400 15px/19px 'Liberation Mono',monospace;white-space:pre;letter-spacing:-0.5515px"><span style="color:#c9ccd3">        </span><span style="color:#c9ccd3">&lt;</span><span style="color:#4ade80">Button</span><span style="color:#c9ccd3"> </span><span style="color:#8fbaf3">disabled</span><span style="color:#f0675b">=</span><span style="color:#f2b632">{</span><span style="color:#e8a64a">loading</span><span style="color:#f2b632">}</span><span style="color:#c9ccd3"> </span><span style="color:#8fbaf3">color</span><span style="color:#f0675b">=</span><span style="color:#dde0e6">&quot;primary&quot;</span><span style="color:#c9ccd3"> </span><span style="color:#8fbaf3">onClick</span><span style="color:#f0675b">=</span><span style="color:#f2b632">{</span><span style="color:#e57ceb">handleSave</span><span style="color:#f2b632">}</span><span style="color:#c9ccd3">&gt;</span></span>
<span style="position:absolute;right:1594.3000000000002px;top:633.50px;font:400 14.5px/19px 'Liberation Mono',monospace;color:#6c7387;white-space:pre;letter-spacing:-.25px;">76</span>
<span style="position:absolute;left:2272.2px;top:633.50px;font:400 15px/19px 'Liberation Mono',monospace;white-space:pre;letter-spacing:-0.5515px"><span style="color:#c9ccd3">          </span><span style="color:#dde0e6">Save</span></span>
<span style="position:absolute;right:1594.3000000000002px;top:652.50px;font:400 14.5px/19px 'Liberation Mono',monospace;color:#6c7387;white-space:pre;letter-spacing:-.25px;">77</span>
<span style="position:absolute;left:2272.2px;top:652.50px;font:400 15px/19px 'Liberation Mono',monospace;white-space:pre;letter-spacing:-0.5515px"><span style="color:#c9ccd3">        </span><span style="color:#c9ccd3">&lt;/</span><span style="color:#4ade80">Button</span><span style="color:#c9ccd3">&gt;</span></span>
<span style="position:absolute;right:1594.3000000000002px;top:671.50px;font:400 14.5px/19px 'Liberation Mono',monospace;color:#6c7387;white-space:pre;letter-spacing:-.25px;">78</span>
<span style="position:absolute;left:2272.2px;top:671.50px;font:400 15px/19px 'Liberation Mono',monospace;white-space:pre;letter-spacing:-0.5515px"><span style="color:#c9ccd3">      </span><span style="color:#c9ccd3">&lt;/</span><span style="color:#4ade80">div</span><span style="color:#c9ccd3">&gt;</span></span>
<span style="position:absolute;right:1594.3000000000002px;top:690.50px;font:400 14.5px/19px 'Liberation Mono',monospace;color:#6c7387;white-space:pre;letter-spacing:-.25px;">79</span>
<span style="position:absolute;left:2272.2px;top:690.50px;font:400 15px/19px 'Liberation Mono',monospace;white-space:pre;letter-spacing:-0.5515px"><span style="color:#c9ccd3">    </span><span style="color:#c9ccd3">&lt;/</span><span style="color:#4ade80">div</span><span style="color:#c9ccd3">&gt;</span></span>
<span style="position:absolute;right:1594.3000000000002px;top:709.50px;font:400 14.5px/19px 'Liberation Mono',monospace;color:#6c7387;white-space:pre;letter-spacing:-.25px;">80</span>
<span style="position:absolute;left:2272.2px;top:709.50px;font:400 15px/19px 'Liberation Mono',monospace;white-space:pre;letter-spacing:-0.5515px"><span style="color:#c9ccd3">  </span><span style="color:#3ddc84">)</span><span style="color:#c9ccd3">;</span></span>
<span style="position:absolute;right:1594.3000000000002px;top:728.50px;font:400 14.5px/19px 'Liberation Mono',monospace;color:#6c7387;white-space:pre;letter-spacing:-.25px;">81</span>
<span style="position:absolute;left:2272.2px;top:728.50px;font:400 15px/19px 'Liberation Mono',monospace;white-space:pre;letter-spacing:-0.5515px"><span style="color:#8fbaf3">}</span><span style="color:#c9ccd3">;</span></span>
<span style="position:absolute;right:1594.3000000000002px;top:747.50px;font:400 14.5px/19px 'Liberation Mono',monospace;color:#6c7387;white-space:pre;letter-spacing:-.25px;">82</span>
<span style="position:absolute;right:1594.3000000000002px;top:766.50px;font:400 14.5px/19px 'Liberation Mono',monospace;color:#6c7387;white-space:pre;letter-spacing:-.25px;">83</span>
<span style="position:absolute;left:2272.2px;top:766.50px;font:400 15px/19px 'Liberation Mono',monospace;white-space:pre;letter-spacing:-0.5515px"><span style="color:#f0675b">export</span><span style="color:#c9ccd3"> </span><span style="color:#f0675b">default</span><span style="color:#c9ccd3"> </span><span style="color:#e57ceb">BalanceAdjusmentComponent</span><span style="color:#c9ccd3">;</span></span>
<span style="position:absolute;right:1594.3000000000002px;top:785.50px;font:400 14.5px/19px 'Liberation Mono',monospace;color:#4a4e5a;white-space:pre;letter-spacing:-.25px;">84</span>
<div style="position:absolute;left:2251px;top:347.2px;width:3px;height:19px;background:#2ea043;"></div>
<div style="position:absolute;left:2251px;top:518.2px;width:3px;height:38px;background:repeating-linear-gradient(135deg,#8a7a3a 0 1.500px,transparent 1.500px 3px);"></div>
<svg style="position:absolute;left:2275px;top:538.7px;" width="11" height="15" viewBox="0 0 11 15"><path d="M5.500 .5a4.500 4.500 0 0 0-2.500 8.200V11h5V8.700A4.500 4.500 0 0 0 5.500 .5z" fill="#f5c518"/><rect x="3.200" y="11.800" width="4.600" height="2.400" rx=".8" fill="#f5c518"/></svg>
<svg style="position:absolute;left:2458.1px;top:781.7px;" width="77" height="4" viewBox="0 0 77 4"><path d="M0 3 " fill="none"/><path d="M0 2.500 l2 -2 l2 2 l2 -2 l2 2 l2 -2 l2 2 l2 -2 l2 2 l2 -2 l2 2 l2 -2 l2 2 l2 -2 l2 2 l2 -2 l2 2 l2 -2 l2 2 l2 -2 l2 2 l2 -2 l2 2 l2 -2 l2 2 l2 -2 l2 2 l2 -2 l2 2 l2 -2 l2 2 l2 -2 l2 2 l2 -2 l2 2 l2 -2 l2 2 l2 -2 l2 2" fill="none" stroke="#3b82f6" stroke-width="1"/></svg>
<div style="position:absolute;left:3826px;top:119px;width:14px;height:939px;background:#0d1017;"></div>
<div style="position:absolute;left:3825px;top:119px;width:1px;height:939px;background:#1a1d26;"></div>
<svg style="position:absolute;left:3714px;top:119px;opacity:.6;" width="113" height="170" viewBox="0 0 113 170"><rect x="0" y="12.300" width="112.500" height="2.400" fill="#2c4a9a"/><rect x="0" y="36.300" width="112.500" height="2.600" fill="#7a1d1d"/><rect x="0" y="164.300" width="112.500" height="2.400" fill="#2c4a9a"/><rect x="19" y="12.300" width="28" height="2.400" fill="#5d86e8"/><rect x="21" y="164.300" width="11" height="2.400" fill="#5d86e8"/><rect x="0.00" y="0.30" width="6.33" height="1.050" fill="#d2584e"/><rect x="7.38" y="0.30" width="23.21" height="1.050" fill="#aeb2bc"/><rect x="31.65" y="0.30" width="4.22" height="1.050" fill="#d2584e"/><rect x="36.92" y="0.30" width="18.99" height="1.050" fill="#aeb2bc"/><rect x="0.00" y="2.30" width="6.33" height="1.050" fill="#d2584e"/><rect x="7.38" y="2.30" width="14.77" height="1.050" fill="#aeb2bc"/><rect x="23.21" y="2.30" width="4.22" height="1.050" fill="#d2584e"/><rect x="28.48" y="2.30" width="23.21" height="1.050" fill="#aeb2bc"/><rect x="0.00" y="4.30" width="6.33" height="1.050" fill="#d2584e"/><rect x="7.38" y="4.30" width="21.10" height="1.050" fill="#aeb2bc"/><rect x="29.54" y="4.30" width="4.22" height="1.050" fill="#d2584e"/><rect x="34.81" y="4.30" width="31.65" height="1.050" fill="#aeb2bc"/><rect x="0.00" y="6.30" width="6.33" height="1.050" fill="#d2584e"/><rect x="7.38" y="6.30" width="25.32" height="1.050" fill="#aeb2bc"/><rect x="33.76" y="6.30" width="4.22" height="1.050" fill="#d2584e"/><rect x="39.03" y="6.30" width="37.98" height="1.050" fill="#aeb2bc"/><rect x="0.00" y="8.30" width="6.33" height="1.050" fill="#d2584e"/><rect x="7.38" y="8.30" width="22.15" height="1.050" fill="#aeb2bc"/><rect x="30.59" y="8.30" width="4.22" height="1.050" fill="#d2584e"/><rect x="35.87" y="8.30" width="42.20" height="1.050" fill="#aeb2bc"/><rect x="0.00" y="10.30" width="6.33" height="1.050" fill="#d2584e"/><rect x="7.38" y="10.30" width="16.88" height="1.050" fill="#aeb2bc"/><rect x="25.32" y="10.30" width="4.22" height="1.050" fill="#d2584e"/><rect x="30.59" y="10.30" width="42.20" height="1.050" fill="#aeb2bc"/><rect x="0.00" y="12.30" width="5.27" height="1.050" fill="#d2584e"/><rect x="6.33" y="12.30" width="26.38" height="1.050" fill="#c76bd0"/><rect x="32.70" y="12.30" width="5.27" height="1.050" fill="#aeb2bc"/><rect x="2.11" y="14.30" width="9.49" height="1.050" fill="#c99a2e"/><rect x="2.11" y="16.30" width="7.38" height="1.050" fill="#c99a2e"/><rect x="2.11" y="18.30" width="6.33" height="1.050" fill="#c99a2e"/><rect x="2.11" y="20.30" width="10.55" height="1.050" fill="#c99a2e"/><rect x="0.00" y="22.30" width="3.17" height="1.050" fill="#7ea6dc"/><rect x="4.22" y="22.30" width="2.11" height="1.050" fill="#d2584e"/><rect x="7.38" y="22.30" width="1.05" height="1.050" fill="#c99a2e"/><rect x="2.11" y="24.30" width="5.27" height="1.050" fill="#d2584e"/><rect x="8.44" y="24.30" width="18.99" height="1.050" fill="#7ea6dc"/><rect x="28.48" y="24.30" width="1.05" height="1.050" fill="#d2584e"/><rect x="30.59" y="24.30" width="12.66" height="1.050" fill="#c76bd0"/><rect x="2.11" y="26.30" width="5.27" height="1.050" fill="#d2584e"/><rect x="8.44" y="26.30" width="23.21" height="1.050" fill="#7ea6dc"/><rect x="32.70" y="26.30" width="1.05" height="1.050" fill="#d2584e"/><rect x="34.81" y="26.30" width="14.77" height="1.050" fill="#c76bd0"/><rect x="4.22" y="28.30" width="14.77" height="1.050" fill="#7ea6dc"/><rect x="21.10" y="28.30" width="10.55" height="1.050" fill="#aeb2bc"/><rect x="32.70" y="28.30" width="27.43" height="1.050" fill="#aeb2bc"/><rect x="4.22" y="30.30" width="10.55" height="1.050" fill="#7ea6dc"/><rect x="15.82" y="30.30" width="9.49" height="1.050" fill="#aeb2bc"/><rect x="28.48" y="30.30" width="21.10" height="1.050" fill="#aeb2bc"/><rect x="58.02" y="30.30" width="6.33" height="1.050" fill="#aeb2bc"/><rect x="66.46" y="30.30" width="8.44" height="1.050" fill="#aeb2bc"/><rect x="6.33" y="34.30" width="12.66" height="1.050" fill="#c76bd0"/><rect x="20.05" y="34.30" width="3.17" height="1.050" fill="#aeb2bc"/><rect x="8.44" y="36.30" width="4.22" height="1.050" fill="#d08a3e"/><rect x="12.66" y="36.30" width="1.05" height="1.050" fill="#aeb2bc"/><rect x="10.55" y="38.30" width="6.33" height="1.050" fill="#d2584e"/><rect x="18.99" y="38.30" width="14.77" height="1.050" fill="#aeb2bc"/><rect x="10.55" y="40.30" width="16.88" height="1.050" fill="#aeb2bc"/><rect x="8.44" y="42.30" width="1.05" height="1.050" fill="#c99a2e"/><rect x="6.33" y="44.30" width="2.11" height="1.050" fill="#aeb2bc"/><rect x="4.22" y="46.30" width="2.11" height="1.050" fill="#aeb2bc"/><rect x="2.11" y="48.30" width="2.11" height="1.050" fill="#aeb2bc"/><rect x="2.11" y="52.30" width="5.27" height="1.050" fill="#d2584e"/><rect x="8.44" y="52.30" width="12.66" height="1.050" fill="#c76bd0"/><rect x="22.16" y="52.30" width="1.05" height="1.050" fill="#d2584e"/><rect x="24.27" y="52.30" width="3.17" height="1.050" fill="#aeb2bc"/><rect x="4.22" y="54.30" width="5.27" height="1.050" fill="#d2584e"/><rect x="10.55" y="54.30" width="16.88" height="1.050" fill="#7ea6dc"/><rect x="4.22" y="56.30" width="14.77" height="1.050" fill="#c76bd0"/><rect x="20.04" y="56.30" width="6.33" height="1.050" fill="#7ea6dc"/><rect x="6.33" y="58.30" width="9.49" height="1.050" fill="#aeb2bc"/><rect x="6.33" y="60.30" width="8.44" height="1.050" fill="#7ea6dc"/><rect x="15.82" y="60.30" width="6.33" height="1.050" fill="#aeb2bc"/><rect x="8.44" y="62.30" width="7.38" height="1.050" fill="#aeb2bc"/><rect x="16.88" y="62.30" width="8.44" height="1.050" fill="#d08a3e"/><rect x="6.33" y="64.30" width="2.11" height="1.050" fill="#aeb2bc"/><rect x="4.22" y="66.30" width="2.11" height="1.050" fill="#aeb2bc"/><rect x="4.22" y="70.30" width="2.11" height="1.050" fill="#d2584e"/><rect x="7.38" y="70.30" width="21.10" height="1.050" fill="#7ea6dc"/><rect x="29.54" y="70.30" width="6.33" height="1.050" fill="#aeb2bc"/><rect x="6.33" y="72.30" width="10.55" height="1.050" fill="#c76bd0"/><rect x="17.93" y="72.30" width="8.44" height="1.050" fill="#aeb2bc"/><rect x="8.44" y="74.30" width="9.49" height="1.050" fill="#7ea6dc"/><rect x="8.44" y="76.30" width="12.66" height="1.050" fill="#7ea6dc"/><rect x="10.55" y="78.30" width="8.44" height="1.050" fill="#7ea6dc"/><rect x="10.55" y="80.30" width="7.38" height="1.050" fill="#aeb2bc"/><rect x="18.99" y="80.30" width="8.44" height="1.050" fill="#aeb2bc"/><rect x="28.48" y="80.30" width="8.44" height="1.050" fill="#aeb2bc"/><rect x="37.98" y="80.30" width="12.66" height="1.050" fill="#aeb2bc"/><rect x="8.44" y="82.30" width="2.11" height="1.050" fill="#aeb2bc"/><rect x="4.22" y="86.30" width="1.05" height="1.050" fill="#c99a2e"/><rect x="6.33" y="86.30" width="5.27" height="1.050" fill="#d2584e"/><rect x="12.66" y="86.30" width="4.22" height="1.050" fill="#aeb2bc"/><rect x="6.33" y="88.30" width="10.55" height="1.050" fill="#c76bd0"/><rect x="17.93" y="88.30" width="4.22" height="1.050" fill="#aeb2bc"/><rect x="8.44" y="90.30" width="9.49" height="1.050" fill="#7ea6dc"/><rect x="10.55" y="92.30" width="7.38" height="1.050" fill="#aeb2bc"/><rect x="18.99" y="92.30" width="8.44" height="1.050" fill="#aeb2bc"/><rect x="28.48" y="92.30" width="12.66" height="1.050" fill="#aeb2bc"/><rect x="8.44" y="94.30" width="2.11" height="1.050" fill="#aeb2bc"/><rect x="4.22" y="96.30" width="1.05" height="1.050" fill="#c99a2e"/><rect x="6.33" y="32.30" width="6.33" height="1.050" fill="#d2584e"/><rect x="13.71" y="32.30" width="8.44" height="1.050" fill="#aeb2bc"/><rect x="4.22" y="68.30" width="1.05" height="1.050" fill="#c99a2e"/><rect x="6.33" y="68.30" width="4.22" height="1.050" fill="#d2584e"/><rect x="11.60" y="68.30" width="1.05" height="1.050" fill="#c99a2e"/><rect x="6.33" y="84.30" width="4.22" height="1.050" fill="#d2584e"/><rect x="11.61" y="84.30" width="9.49" height="1.050" fill="#aeb2bc"/><rect x="4.22" y="98.30" width="1.05" height="1.050" fill="#3fbf6e"/><rect x="2.11" y="100.30" width="6.33" height="1.050" fill="#d2584e"/><rect x="9.49" y="100.30" width="1.05" height="1.050" fill="#3fbf6e"/><rect x="4.22" y="102.30" width="1.05" height="1.050" fill="#8a8e98"/><rect x="5.27" y="102.30" width="3.17" height="1.050" fill="#3fbf6e"/><rect x="9.49" y="102.30" width="9.49" height="1.050" fill="#7ea6dc"/><rect x="18.99" y="102.30" width="1.05" height="1.050" fill="#d2584e"/><rect x="20.04" y="102.30" width="6.33" height="1.050" fill="#aeb2bc"/><rect x="26.38" y="102.30" width="1.05" height="1.050" fill="#8a8e98"/><rect x="6.33" y="104.30" width="1.05" height="1.050" fill="#8a8e98"/><rect x="7.38" y="104.30" width="2.11" height="1.050" fill="#3fbf6e"/><rect x="9.49" y="104.30" width="1.05" height="1.050" fill="#8a8e98"/><rect x="10.55" y="104.30" width="7.38" height="1.050" fill="#aeb2bc"/><rect x="18.99" y="104.30" width="10.55" height="1.050" fill="#aeb2bc"/><rect x="29.54" y="104.30" width="2.11" height="1.050" fill="#8a8e98"/><rect x="31.65" y="104.30" width="2.11" height="1.050" fill="#3fbf6e"/><rect x="33.76" y="104.30" width="1.05" height="1.050" fill="#8a8e98"/><rect x="6.33" y="106.30" width="1.05" height="1.050" fill="#8a8e98"/><rect x="7.38" y="106.30" width="12.66" height="1.050" fill="#3fbf6e"/><rect x="8.44" y="108.30" width="5.27" height="1.050" fill="#7ea6dc"/><rect x="13.71" y="108.30" width="1.05" height="1.050" fill="#d2584e"/><rect x="14.77" y="108.30" width="1.05" height="1.050" fill="#c99a2e"/><rect x="15.82" y="108.30" width="12.66" height="1.050" fill="#aeb2bc"/><rect x="29.54" y="108.30" width="3.17" height="1.050" fill="#aeb2bc"/><rect x="32.70" y="108.30" width="1.05" height="1.050" fill="#c99a2e"/><rect x="8.44" y="110.30" width="11.60" height="1.050" fill="#7ea6dc"/><rect x="20.04" y="110.30" width="1.05" height="1.050" fill="#d2584e"/><rect x="21.10" y="110.30" width="1.05" height="1.050" fill="#c99a2e"/><rect x="22.15" y="110.30" width="6.33" height="1.050" fill="#aeb2bc"/><rect x="29.54" y="110.30" width="11.60" height="1.050" fill="#aeb2bc"/><rect x="42.20" y="110.30" width="3.17" height="1.050" fill="#aeb2bc"/><rect x="45.36" y="110.30" width="1.05" height="1.050" fill="#c99a2e"/><rect x="8.44" y="112.30" width="4.22" height="1.050" fill="#7ea6dc"/><rect x="12.66" y="112.30" width="1.05" height="1.050" fill="#d2584e"/><rect x="13.71" y="112.30" width="16.88" height="1.050" fill="#aeb2bc"/><rect x="8.44" y="114.30" width="10.55" height="1.050" fill="#7ea6dc"/><rect x="18.99" y="114.30" width="1.05" height="1.050" fill="#d2584e"/><rect x="20.04" y="114.30" width="1.05" height="1.050" fill="#c99a2e"/><rect x="21.10" y="114.30" width="4.22" height="1.050" fill="#7ea6dc"/><rect x="25.32" y="114.30" width="1.05" height="1.050" fill="#c99a2e"/><rect x="8.44" y="116.30" width="12.66" height="1.050" fill="#7ea6dc"/><rect x="21.10" y="116.30" width="1.05" height="1.050" fill="#d2584e"/><rect x="22.16" y="116.30" width="1.05" height="1.050" fill="#c99a2e"/><rect x="23.21" y="116.30" width="12.66" height="1.050" fill="#c76bd0"/><rect x="35.87" y="116.30" width="1.05" height="1.050" fill="#c99a2e"/><rect x="8.44" y="118.30" width="5.27" height="1.050" fill="#7ea6dc"/><rect x="13.71" y="118.30" width="1.05" height="1.050" fill="#d2584e"/><rect x="14.77" y="118.30" width="1.05" height="1.050" fill="#c99a2e"/><rect x="15.82" y="118.30" width="6.33" height="1.050" fill="#7ea6dc"/><rect x="22.16" y="118.30" width="16.88" height="1.050" fill="#aeb2bc"/><rect x="39.03" y="118.30" width="1.05" height="1.050" fill="#c99a2e"/><rect x="8.44" y="120.30" width="4.22" height="1.050" fill="#7ea6dc"/><rect x="12.66" y="120.30" width="1.05" height="1.050" fill="#d2584e"/><rect x="13.71" y="120.30" width="1.05" height="1.050" fill="#c99a2e"/><rect x="14.77" y="120.30" width="8.44" height="1.050" fill="#aeb2bc"/><rect x="23.21" y="120.30" width="1.05" height="1.050" fill="#c99a2e"/><rect x="6.33" y="122.30" width="2.11" height="1.050" fill="#8a8e98"/><rect x="6.33" y="124.30" width="1.05" height="1.050" fill="#8a8e98"/><rect x="7.38" y="124.30" width="3.17" height="1.050" fill="#3fbf6e"/><rect x="11.61" y="124.30" width="9.49" height="1.050" fill="#7ea6dc"/><rect x="21.10" y="124.30" width="1.05" height="1.050" fill="#d2584e"/><rect x="22.16" y="124.30" width="6.33" height="1.050" fill="#aeb2bc"/><rect x="28.48" y="124.30" width="1.05" height="1.050" fill="#8a8e98"/><rect x="8.44" y="126.30" width="1.05" height="1.050" fill="#8a8e98"/><rect x="9.49" y="126.30" width="12.66" height="1.050" fill="#3fbf6e"/><rect x="10.55" y="128.30" width="5.27" height="1.050" fill="#7ea6dc"/><rect x="15.82" y="128.30" width="1.05" height="1.050" fill="#d2584e"/><rect x="16.88" y="128.30" width="1.05" height="1.050" fill="#c99a2e"/><rect x="17.93" y="128.30" width="9.49" height="1.050" fill="#aeb2bc"/><rect x="27.43" y="128.30" width="1.05" height="1.050" fill="#c99a2e"/><rect x="10.55" y="130.30" width="11.60" height="1.050" fill="#7ea6dc"/><rect x="22.15" y="130.30" width="1.05" height="1.050" fill="#d2584e"/><rect x="23.21" y="130.30" width="1.05" height="1.050" fill="#c99a2e"/><rect x="24.26" y="130.30" width="6.33" height="1.050" fill="#aeb2bc"/><rect x="31.65" y="130.30" width="8.44" height="1.050" fill="#aeb2bc"/><rect x="40.09" y="130.30" width="1.05" height="1.050" fill="#c99a2e"/><rect x="10.55" y="132.30" width="4.22" height="1.050" fill="#7ea6dc"/><rect x="14.77" y="132.30" width="1.05" height="1.050" fill="#d2584e"/><rect x="15.82" y="132.30" width="1.05" height="1.050" fill="#c99a2e"/><rect x="16.88" y="132.30" width="9.49" height="1.050" fill="#aeb2bc"/><rect x="26.38" y="132.30" width="1.05" height="1.050" fill="#c99a2e"/><rect x="10.55" y="134.30" width="10.55" height="1.050" fill="#7ea6dc"/><rect x="21.10" y="134.30" width="1.05" height="1.050" fill="#d2584e"/><rect x="22.15" y="134.30" width="1.05" height="1.050" fill="#c99a2e"/><rect x="23.21" y="134.30" width="4.22" height="1.050" fill="#7ea6dc"/><rect x="27.43" y="134.30" width="1.05" height="1.050" fill="#c99a2e"/><rect x="10.55" y="136.30" width="12.66" height="1.050" fill="#7ea6dc"/><rect x="23.21" y="136.30" width="1.05" height="1.050" fill="#d2584e"/><rect x="24.27" y="136.30" width="1.05" height="1.050" fill="#c99a2e"/><rect x="25.32" y="136.30" width="12.66" height="1.050" fill="#c76bd0"/><rect x="37.98" y="136.30" width="1.05" height="1.050" fill="#c99a2e"/><rect x="10.55" y="138.30" width="4.22" height="1.050" fill="#7ea6dc"/><rect x="14.77" y="138.30" width="1.05" height="1.050" fill="#d2584e"/><rect x="15.82" y="138.30" width="1.05" height="1.050" fill="#c99a2e"/><rect x="16.88" y="138.30" width="8.44" height="1.050" fill="#aeb2bc"/><rect x="25.32" y="138.30" width="1.05" height="1.050" fill="#c99a2e"/><rect x="10.55" y="140.30" width="5.27" height="1.050" fill="#7ea6dc"/><rect x="15.82" y="140.30" width="1.05" height="1.050" fill="#d2584e"/><rect x="16.88" y="140.30" width="1.05" height="1.050" fill="#c99a2e"/><rect x="17.93" y="140.30" width="6.33" height="1.050" fill="#7ea6dc"/><rect x="24.27" y="140.30" width="9.49" height="1.050" fill="#aeb2bc"/><rect x="34.81" y="140.30" width="2.11" height="1.050" fill="#d2584e"/><rect x="37.98" y="140.30" width="2.11" height="1.050" fill="#aeb2bc"/><rect x="40.09" y="140.30" width="1.05" height="1.050" fill="#c99a2e"/><rect x="8.44" y="142.30" width="2.11" height="1.050" fill="#8a8e98"/><rect x="6.33" y="144.30" width="2.11" height="1.050" fill="#8a8e98"/><rect x="8.44" y="144.30" width="3.17" height="1.050" fill="#3fbf6e"/><rect x="11.61" y="144.30" width="1.05" height="1.050" fill="#8a8e98"/><rect x="6.33" y="146.30" width="1.05" height="1.050" fill="#8a8e98"/><rect x="7.38" y="146.30" width="3.17" height="1.050" fill="#3fbf6e"/><rect x="11.61" y="146.30" width="9.49" height="1.050" fill="#7ea6dc"/><rect x="21.10" y="146.30" width="1.05" height="1.050" fill="#d2584e"/><rect x="22.16" y="146.30" width="7.38" height="1.050" fill="#aeb2bc"/><rect x="30.59" y="146.30" width="20.04" height="1.050" fill="#aeb2bc"/><rect x="51.69" y="146.30" width="5.27" height="1.050" fill="#aeb2bc"/><rect x="56.97" y="146.30" width="1.05" height="1.050" fill="#8a8e98"/><rect x="8.44" y="148.30" width="1.05" height="1.050" fill="#8a8e98"/><rect x="9.49" y="148.30" width="6.33" height="1.050" fill="#3fbf6e"/><rect x="16.88" y="148.30" width="8.44" height="1.050" fill="#7ea6dc"/><rect x="25.32" y="148.30" width="1.05" height="1.050" fill="#d2584e"/><rect x="26.38" y="148.30" width="1.05" height="1.050" fill="#c99a2e"/><rect x="27.43" y="148.30" width="7.38" height="1.050" fill="#d08a3e"/><rect x="34.81" y="148.30" width="1.05" height="1.050" fill="#c99a2e"/><rect x="36.92" y="148.30" width="5.27" height="1.050" fill="#7ea6dc"/><rect x="42.20" y="148.30" width="1.05" height="1.050" fill="#d2584e"/><rect x="43.25" y="148.30" width="9.49" height="1.050" fill="#aeb2bc"/><rect x="53.80" y="148.30" width="7.38" height="1.050" fill="#7ea6dc"/><rect x="61.19" y="148.30" width="1.05" height="1.050" fill="#d2584e"/><rect x="62.24" y="148.30" width="1.05" height="1.050" fill="#c99a2e"/><rect x="63.30" y="148.30" width="10.55" height="1.050" fill="#c76bd0"/><rect x="73.85" y="148.30" width="1.05" height="1.050" fill="#c99a2e"/><rect x="74.91" y="148.30" width="1.05" height="1.050" fill="#8a8e98"/><rect x="10.55" y="150.30" width="4.22" height="1.050" fill="#aeb2bc"/><rect x="8.44" y="152.30" width="2.11" height="1.050" fill="#8a8e98"/><rect x="10.55" y="152.30" width="6.33" height="1.050" fill="#3fbf6e"/><rect x="16.88" y="152.30" width="1.05" height="1.050" fill="#8a8e98"/><rect x="6.33" y="154.30" width="2.11" height="1.050" fill="#8a8e98"/><rect x="8.44" y="154.30" width="3.17" height="1.050" fill="#3fbf6e"/><rect x="11.61" y="154.30" width="1.05" height="1.050" fill="#8a8e98"/><rect x="4.22" y="156.30" width="2.11" height="1.050" fill="#8a8e98"/><rect x="6.33" y="156.30" width="3.17" height="1.050" fill="#3fbf6e"/><rect x="9.50" y="156.30" width="1.05" height="1.050" fill="#8a8e98"/><rect x="2.11" y="158.30" width="1.05" height="1.050" fill="#3fbf6e"/><rect x="3.17" y="158.30" width="1.05" height="1.050" fill="#8a8e98"/><rect x="0.00" y="160.30" width="1.05" height="1.050" fill="#7ea6dc"/><rect x="1.05" y="160.30" width="1.05" height="1.050" fill="#8a8e98"/><rect x="0.00" y="164.30" width="6.33" height="1.050" fill="#d2584e"/><rect x="7.38" y="164.30" width="7.38" height="1.050" fill="#d2584e"/><rect x="15.82" y="164.30" width="26.38" height="1.050" fill="#c76bd0"/><rect x="42.20" y="164.30" width="1.05" height="1.050" fill="#8a8e98"/></svg>
<div style="position:absolute;left:3835.5px;top:166.5px;width:4.5px;height:7px;background:#3b82f6;"></div>
<div style="position:absolute;left:3835.5px;top:251px;width:4.5px;height:6.5px;background:#c81e1e;"></div>
<div style="position:absolute;left:3827px;top:215.7px;width:4px;height:21px;background:#5e5020;"></div>
<div style="position:absolute;left:3827px;top:257.6px;width:4px;height:7px;background:#5e5020;"></div>
<div style="position:absolute;left:3708px;top:145.5px;width:2px;height:5px;background:#6a5a22;"></div>
<div style="position:absolute;left:3708px;top:157.5px;width:2px;height:1.5px;background:#6a5a22;"></div>
<div style="position:absolute;left:3708px;top:239px;width:2px;height:2px;background:#2ea043;"></div>
<div style="position:absolute;left:3708px;top:257px;width:2px;height:4px;background:#6a5a22;"></div>
<div style="position:absolute;left:3827px;top:547px;width:4px;height:7px;background:#1f6b4a;"></div>
<div style="position:absolute;left:3827px;top:611px;width:4px;height:14px;background:#5e5020;"></div>
<div style="position:absolute;left:3827px;top:617.5px;width:13px;height:2px;background:#7c7cab;"></div>
<div style="position:absolute;left:3836px;top:694px;width:4px;height:7px;background:#3b82f6;"></div>
<div style="position:absolute;left:1920px;top:1058px;width:1920px;height:22px;background:#0d1017;"></div>
<div style="position:absolute;left:1920px;top:1058px;width:1920px;height:1px;background:#2b2e38;"></div>
<div style="position:absolute;left:1920px;top:1059px;width:33px;height:21px;background:#353841;"></div>
<svg style="position:absolute;left:1930px;top:1063px;" width="12" height="12" viewBox="0 0 12 12"><path d="M1.500 3.500 5 7l-3.500 3.500M10.500 1.500 7 5l3.500 3.500" fill="none" stroke="#9a9da7" stroke-width="1.200"/></svg>
<svg style="position:absolute;left:1960px;top:1062px;" width="12" height="14" viewBox="0 0 12 14"><circle cx="3" cy="2.500" r="1.600" fill="none" stroke="#9a9da7" stroke-width="1"/><circle cx="3" cy="11.500" r="1.600" fill="none" stroke="#9a9da7" stroke-width="1"/><circle cx="9" cy="4.500" r="1.600" fill="none" stroke="#9a9da7" stroke-width="1"/><path d="M3 4v6M9 6c0 3-6 1.500-6 4" fill="none" stroke="#9a9da7" stroke-width="1"/></svg>
<span style="position:absolute;left:1977.5px;top:1061.00px;font:400 12px/16px 'Liberation Sans',sans-serif;color:#9a9da7;white-space:pre;transform:scaleX(0.9950);transform-origin:0 50%;">main*+</span>
<svg style="position:absolute;left:2021px;top:1062.5px;" width="14" height="13" viewBox="0 0 14 13"><path d="M2 6.500A5 5 0 0 1 11 4M12 6.500A5 5 0 0 1 3 9" fill="none" stroke="#9a9da7" stroke-width="1.100"/><path d="M11.500 1v3.500H8M2.500 12V8.500H6" fill="none" stroke="#9a9da7" stroke-width="1.100"/></svg>
<svg style="position:absolute;left:2049px;top:1062px;" width="14" height="14" viewBox="0 0 14 14"><circle cx="3.500" cy="2.500" r="1.500" fill="none" stroke="#9a9da7" stroke-width="1"/><circle cx="3.500" cy="11.500" r="1.500" fill="none" stroke="#9a9da7" stroke-width="1"/><path d="M3.500 4v6M3.500 5.500c4 0 5 1 5 3" fill="none" stroke="#9a9da7" stroke-width="1"/><circle cx="10" cy="10" r="2.800" fill="none" stroke="#9a9da7" stroke-width="1"/></svg>
<svg style="position:absolute;left:2080px;top:1062.5px;" width="13" height="13" viewBox="0 0 13 13"><circle cx="6.500" cy="6.500" r="5.500" fill="none" stroke="#9a9da7" stroke-width="1"/><path d="M4.300 4.300l4.400 4.400M8.700 4.300 4.300 8.700" stroke="#9a9da7" stroke-width="1"/></svg>
<span style="position:absolute;left:2096px;top:1061.00px;font:400 12px/16px 'Liberation Sans',sans-serif;color:#9a9da7;white-space:pre;">5</span>
<svg style="position:absolute;left:2106px;top:1062.5px;" width="14" height="13" viewBox="0 0 14 13"><path d="M7 1.500 13 12H1z" fill="none" stroke="#9a9da7" stroke-width="1"/><path d="M7 5v4M7 10v1" stroke="#9a9da7" stroke-width="1"/></svg>
<span style="position:absolute;left:2123px;top:1061.00px;font:400 12px/16px 'Liberation Sans',sans-serif;color:#9a9da7;white-space:pre;">1</span>
<svg style="position:absolute;left:2132px;top:1062.5px;" width="13" height="13" viewBox="0 0 13 13"><circle cx="6.500" cy="6.500" r="5.500" fill="none" stroke="#9a9da7" stroke-width="1"/><path d="M6.500 5.500v4M6.500 3.500v1" stroke="#9a9da7" stroke-width="1.100"/></svg>
<span style="position:absolute;left:2148px;top:1061.00px;font:400 12px/16px 'Liberation Sans',sans-serif;color:#9a9da7;white-space:pre;transform:scaleX(1.0480);transform-origin:0 50%;">92</span>
<svg style="position:absolute;left:2180px;top:1062.5px;" width="14" height="13" viewBox="0 0 14 13"><path d="M3.500 3a5 5 0 0 0 0 6M10.500 3a5 5 0 0 1 0 6M5.300 4.500a2.500 2.500 0 0 0 0 3M8.700 4.500a2.500 2.500 0 0 1 0 3M7 6.500l-2 5.500M7 6.500l2 5.500" fill="none" stroke="#9a9da7" stroke-width="1"/></svg>
<span style="position:absolute;left:2196.5px;top:1061.00px;font:400 12px/16px 'Liberation Sans',sans-serif;color:#9a9da7;white-space:pre;">0</span>
<svg style="position:absolute;left:3079px;top:1061px;" width="11" height="16" viewBox="0 0 11 16"><circle cx="5.500" cy="8" r="3" fill="none" stroke="#9a9da7" stroke-width="1.100"/><path d="M5.500 1v4M5.500 11v4" stroke="#9a9da7" stroke-width="1.100"/></svg>
<span style="position:absolute;left:3095px;top:1061.00px;font:400 12px/16px 'Liberation Sans',sans-serif;color:#9a9da7;white-space:pre;transform:scaleX(0.9800);transform-origin:0 50%;">You, 1 second ago</span>
<span style="position:absolute;left:3208px;top:1061.00px;font:400 12px/16px 'Liberation Sans',sans-serif;color:#9a9da7;white-space:pre;transform:scaleX(0.9665);transform-origin:0 50%;">Ln 71, Col 38</span>
<span style="position:absolute;left:3293px;top:1061.00px;font:400 12px/16px 'Liberation Sans',sans-serif;color:#9a9da7;white-space:pre;transform:scaleX(0.9368);transform-origin:0 50%;">Spaces: 4</span>
<span style="position:absolute;left:3359px;top:1061.00px;font:400 12px/16px 'Liberation Sans',sans-serif;color:#9a9da7;white-space:pre;transform:scaleX(0.9324);transform-origin:0 50%;">UTF-8</span>
<span style="position:absolute;left:3407px;top:1061.00px;font:400 12px/16px 'Liberation Sans',sans-serif;color:#9a9da7;white-space:pre;transform:scaleX(0.8990);transform-origin:0 50%;">LF</span>
<span style="position:absolute;left:3436.5px;top:1061.00px;font:400 11.5px/15px 'Liberation Sans',sans-serif;color:#9a9da7;white-space:pre;transform:scaleX(1.0560);transform-origin:0 50%;">{ }</span>
<svg style="position:absolute;left:3466px;top:1062.5px;" width="13" height="13" viewBox="0 0 13 13"><circle cx="6.500" cy="5.500" r="1.500" fill="#9a9da7"/><path d="M6.500 7v5.500M3.800 8.500a3.800 3.800 0 1 1 5.400 0M2.300 10.500a6 6 0 1 1 8.400 0" fill="none" stroke="#9a9da7" stroke-width="1"/></svg>
<span style="position:absolute;left:3482.4px;top:1061.00px;font:400 12px/16px 'Liberation Sans',sans-serif;color:#9a9da7;white-space:pre;transform:scaleX(0.9478);transform-origin:0 50%;">Go Live</span>
<svg style="position:absolute;left:3538px;top:1062.5px;" width="14" height="13" viewBox="0 0 14 13"><path d="M7 1.500 13 12H1z" fill="none" stroke="#9a9da7" stroke-width="1"/><path d="M7 5v4M7 10v1" stroke="#9a9da7" stroke-width="1"/></svg>
<span style="position:absolute;left:3555px;top:1061.00px;font:400 12px/16px 'Liberation Sans',sans-serif;color:#9a9da7;white-space:pre;transform:scaleX(0.9808);transform-origin:0 50%;">2 Spell</span>
<svg style="position:absolute;left:3606.5px;top:1063.5px;" width="11" height="11" viewBox="0 0 11 11"><path d="M5.500 .8 9.800 3.200v4.600L5.500 10.200 1.200 7.800V3.200z" fill="none" stroke="#9a9da7" stroke-width="1"/></svg>
<span style="position:absolute;left:3620px;top:1061.00px;font:400 12px/16px 'Liberation Sans',sans-serif;color:#9a9da7;white-space:pre;transform:scaleX(1.0115);transform-origin:0 50%;">tabnine starter</span>
<svg style="position:absolute;left:3704.5px;top:1063px;" width="15" height="11" viewBox="0 0 15 11"><path d="M.5 3.500h8c1-2 5.500-2.500 6 2s-1 5.500-5 5c-2.500 0-4-1.500-4.500-4H.5c-.8 0-.8-3 0-3z" fill="#f5c518"/><path d="M9 6h4M9 8h3.500" stroke="#c9960c" stroke-width=".8"/></svg>
<svg style="position:absolute;left:3737px;top:1063.5px;" width="12" height="11" viewBox="0 0 12 11"><path d="M1 6.500 4 9.500 11 1" fill="none" stroke="#9a9da7" stroke-width="1.100"/></svg>
<span style="position:absolute;left:3752.5px;top:1061.00px;font:400 12px/16px 'Liberation Sans',sans-serif;color:#9a9da7;white-space:pre;transform:scaleX(1.0985);transform-origin:0 50%;">Prettier</span>
<svg style="position:absolute;left:3811.5px;top:1062.5px;" width="13" height="13" viewBox="0 0 13 13"><path d="M2.500 9.500V6a4 4 0 0 1 8 0v3.500l1 1h-10zM5.500 12h2" fill="none" stroke="#9a9da7" stroke-width="1"/></svg>
</div></body></html>
